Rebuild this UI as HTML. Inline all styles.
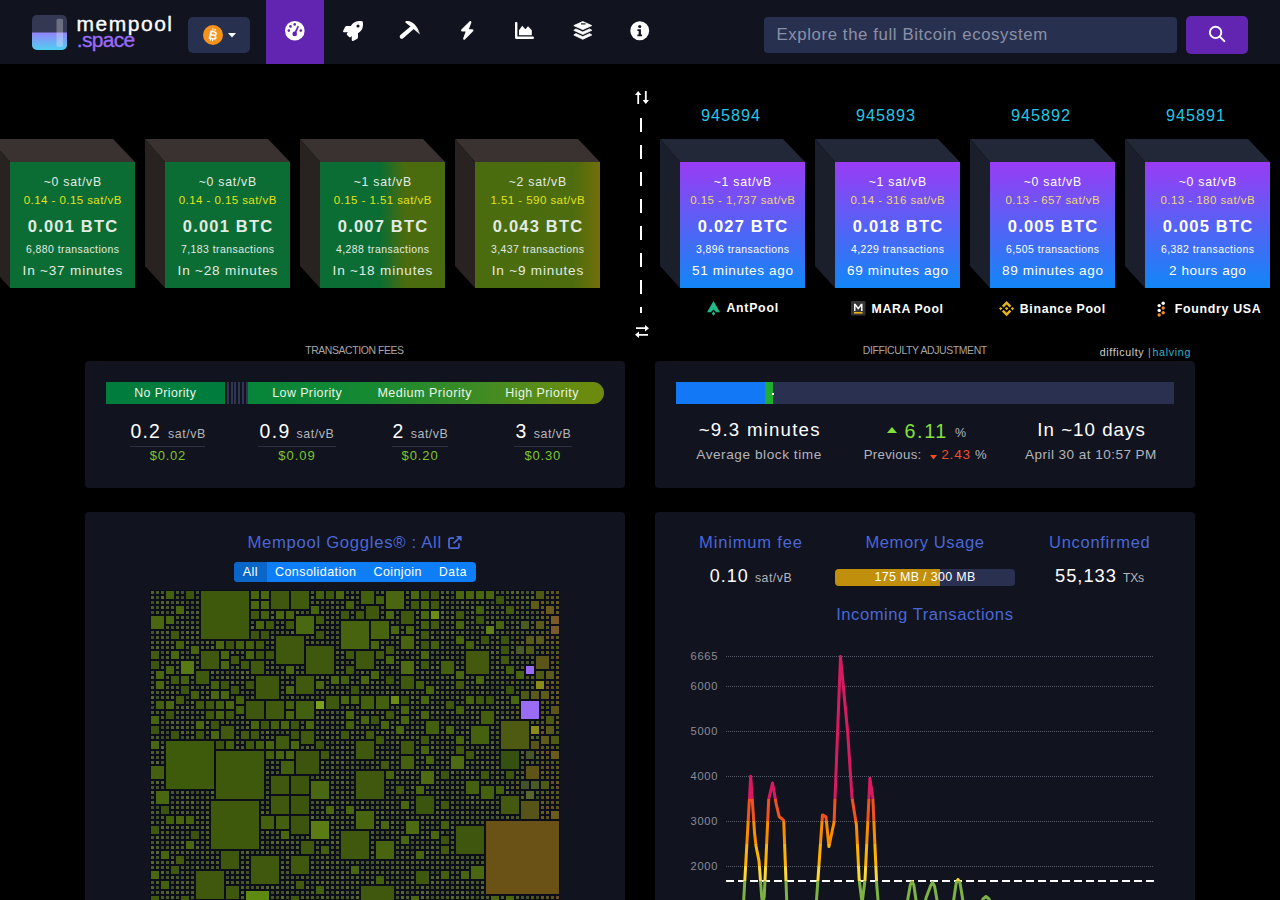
<!DOCTYPE html><html><head><meta charset="utf-8"><style>
html,body{margin:0;padding:0;}
body{width:1280px;height:900px;overflow:hidden;background:#000;position:relative;font-family:"Liberation Sans",sans-serif;}
.t{position:absolute;white-space:nowrap;line-height:0;}
.a{position:absolute;}
svg{position:absolute;overflow:visible;}
</style></head><body>

<div class="a" style="left:0;top:0;width:1280px;height:64px;background:#11131f"></div>
<svg style="left:32px;top:15px" width="35" height="35" viewBox="0 0 35 35">
<defs><linearGradient id="lg1" x1="0" y1="0" x2="0" y2="1"><stop offset="0" stop-color="#9283f7"/><stop offset="1" stop-color="#4fd0f2"/></linearGradient>
<clipPath id="lc1"><rect width="35" height="35" rx="5"/></clipPath></defs>
<g clip-path="url(#lc1)"><rect width="35" height="35" fill="#343853"/><rect y="17.5" width="35" height="17.5" fill="url(#lg1)"/>
<rect x="24.5" y="3.8" width="6.5" height="28" rx="1.5" fill="#fff" fill-opacity="0.28"/></g></svg>
<div class="t" style="left:76.50px;top:23.62px;font-size:21.00px;letter-spacing:1.521px;color:#ffffff;-webkit-text-stroke:0.35px #fff;">mempool</div>
<div class="t" style="left:76.80px;top:39.72px;font-size:21.00px;letter-spacing:-0.675px;color:#9b6bf6;-webkit-text-stroke:0.35px #9b6bf6;">.space</div>
<div class="a" style="left:188px;top:17px;width:62px;height:36px;background:#283050;border-radius:5px"></div>
<svg style="left:203px;top:24.5px" width="20" height="20" viewBox="0 0 20 20"><circle cx="10" cy="10" r="10" fill="#f7931a"/>
<g transform="rotate(14 10 10)"><text x="10.2" y="14.3" font-family="Liberation Sans" font-weight="bold" font-size="12" fill="#fff" text-anchor="middle">B</text>
<path d="M8.6 3.6V5.6M10.8 3.6V5.6M8.6 14.2V16.2M10.8 14.2V16.2" stroke="#fff" stroke-width="1.1"/></g></svg>
<svg style="left:228px;top:32.8px" width="8" height="4.5" viewBox="0 0 8 4.5"><path d="M0 0H8L4 4.5Z" fill="#fff"/></svg>
<div class="a" style="left:266px;top:0;width:58px;height:64px;background:#6225b2"></div>
<svg style="left:285px;top:21px" width="20" height="20" viewBox="0 0 20 20"><circle cx="9.8" cy="9.7" r="9.8" fill="#fff"/>
<g fill="#6225b2"><circle cx="9.7" cy="12.9" r="2.3"/><path d="M8.9 12.6L12.6 4.8L14 5.4L10.6 13.3Z"/>
<circle cx="5.5" cy="5.4" r="1.3"/><circle cx="9.7" cy="3.4" r="1.3"/><circle cx="3.8" cy="9.6" r="1.3"/><circle cx="15.8" cy="9.6" r="1.3"/></g></svg>
<svg style="left:343px;top:21px" width="20" height="20" viewBox="0 0 512 512"><path fill="#fff" d="M505.1 19.1c-1.2-5.5-6.7-11-12.2-12.2C460.7 0 435.5 0 410.4 0 307.2 0 245.3 55.2 199.1 128H94.8c-16.3 0-35.6 11.9-42.9 26.5L2.5 253.3A28.4 28.4 0 0 0 0 264a24 24 0 0 0 24 24h103.8l-22.5 22.5c-11.4 11.4-13 32.3 0 45.3l50.9 50.9c11.2 11.2 32.2 13.2 45.3 0l22.5-22.5V488a24 24 0 0 0 24 24 28.6 28.6 0 0 0 10.7-2.5l98.7-49.4c14.6-7.3 26.5-26.5 26.5-42.9V312.8c72.6-46.3 128-108.4 128-211.1.1-25.2.1-50.4-6.9-82.6zM384 168a40 40 0 1 1 40-40 40 40 0 0 1-40 40z"/></svg>
<svg style="left:395px;top:15px" width="30" height="30" viewBox="395 15 30 30"><path fill="#fff" d="M405.8 21.2C410.5 19.6 417.6 24.5 420 34.4C418.6 30.8 414.6 25.6 405.8 22.6Z"/><path fill="#fff" d="M405.8 21.2Q414.5 22.6 420 34.4Q412.6 27.8 405.4 22.4Z"/>
<path d="M401.8 36.6L411.8 28" stroke="#fff" stroke-width="4.2" stroke-linecap="round"/></svg>
<svg style="left:459.5px;top:21.2px" width="14.5" height="18.8" viewBox="0 0 448 512" preserveAspectRatio="none"><path fill="#fff" d="M349.4 44.6c5.9-13.7 1.5-29.7-10.6-38.5s-28.6-8-39.9 1.8l-256 224c-10 8.8-13.6 22.9-8.9 35.3S50.7 288 64 288H175.5L98.6 467.4c-5.9 13.7-1.5 29.7 10.6 38.5s28.6 8 39.9-1.8l256-224c10-8.8 13.6-22.9 8.9-35.3s-16.6-20.7-30-20.7H272.5L349.4 44.6z"/></svg>
<svg style="left:515px;top:22px" width="19" height="17" viewBox="0 0 19 17"><path fill="#fff" d="M0 0.8C0 0.3 0.4 0 0.9 0h0.6c0.5 0 0.9 0.3 0.9 0.8V14.4H18c0.5 0 0.9 0.4 0.9 0.9v0.8c0 0.5-0.4 0.9-0.9 0.9H1.2C0.5 17 0 16.5 0 15.8Z"/>
<path fill="#fff" d="M4 13.2V8.2L7.2 3.8 10.4 7.2 13 4.2 16.8 8.2V13.2Z"/></svg>
<svg style="left:573px;top:21px" width="20" height="19" viewBox="0 0 20 19"><g fill="#fff" stroke="#fff" stroke-width="0.8" stroke-linejoin="round">
<path d="M9.8 0.6L18.8 4.6L9.8 8.6L0.8 4.6Z"/><path d="M2.9 7.9L9.8 11L16.7 7.9L18.8 9.3L9.8 13.4L0.8 9.3Z"/><path d="M2.9 12.6L9.8 15.7L16.7 12.6L18.8 14L9.8 18.3L0.8 14Z"/></g>
<path d="M8 2.9H12.6" stroke="#11131f" stroke-width="1.2"/></svg>
<svg style="left:629.8px;top:21.3px" width="19.5" height="19.5" viewBox="0 0 20 20"><circle cx="10" cy="10" r="9.7" fill="#fff"/>
<g fill="#11131f"><circle cx="10" cy="5.6" r="1.6"/><path d="M7.6 8.4h3.6v5.5h1.2v1.8H7.6v-1.8h1.3v-3.7H7.6Z"/></g></svg>
<div class="a" style="left:764px;top:17px;width:413px;height:36px;background:#283050;border-radius:4px"></div>
<div class="t" style="left:776.50px;top:34.68px;font-size:16.80px;letter-spacing:0.601px;color:#8b90a6;">Explore the full Bitcoin ecosystem</div>
<div class="a" style="left:1186px;top:16px;width:62px;height:38px;background:#6225b2;border-radius:5px"></div>
<svg style="left:1208px;top:25px" width="18" height="18" viewBox="0 0 18 18"><circle cx="7.6" cy="7.4" r="5.7" fill="none" stroke="#fff" stroke-width="1.9"/>
<path d="M11.8 11.6L16.3 16.1" stroke="#fff" stroke-width="2" stroke-linecap="round"/></svg>
<svg style="left:-10px;top:139px" width="146" height="149" viewBox="0 0 146 149"><path d="M0 0H123L145 23H20Z" fill="#3a3230"/><path d="M0 0L20 23V149L0 127Z" fill="#282321"/></svg>
<div class="a" style="left:10px;top:162px;width:125px;height:126px;background:linear-gradient(90deg,#0b6d33,#0b6d33)"></div>
<div class="t" style="left:43.70px;top:182.25px;font-size:12.26px;letter-spacing:0.759px;color:#e2ebe2;">~0 sat/vB</div>
<div class="t" style="left:23.73px;top:200.32px;font-size:11.49px;letter-spacing:0.447px;color:#e3e21c;">0.14 - 0.15 sat/vB</div>
<div class="t" style="left:27.76px;top:227.08px;font-size:16.52px;letter-spacing:1.197px;color:#e2ebe2;font-weight:bold;">0.001 BTC</div>
<div class="t" style="left:25.98px;top:249.98px;font-size:10.45px;letter-spacing:0.450px;color:#e2ebe2;">6,880 transactions</div>
<div class="t" style="left:22.59px;top:271.00px;font-size:13.57px;letter-spacing:0.800px;color:#e2ebe2;">In ~37 minutes</div>
<svg style="left:145px;top:139px" width="146" height="149" viewBox="0 0 146 149"><path d="M0 0H123L145 23H20Z" fill="#3a3230"/><path d="M0 0L20 23V149L0 127Z" fill="#282321"/></svg>
<div class="a" style="left:165px;top:162px;width:125px;height:126px;background:linear-gradient(90deg,#0b6d33,#0b6d33)"></div>
<div class="t" style="left:198.70px;top:182.25px;font-size:12.26px;letter-spacing:0.759px;color:#e2ebe2;">~0 sat/vB</div>
<div class="t" style="left:178.72px;top:200.32px;font-size:11.49px;letter-spacing:0.447px;color:#e3e21c;">0.14 - 0.15 sat/vB</div>
<div class="t" style="left:182.76px;top:227.08px;font-size:16.52px;letter-spacing:1.197px;color:#e2ebe2;font-weight:bold;">0.001 BTC</div>
<div class="t" style="left:180.97px;top:249.98px;font-size:10.45px;letter-spacing:0.450px;color:#e2ebe2;">7,183 transactions</div>
<div class="t" style="left:177.59px;top:271.00px;font-size:13.57px;letter-spacing:0.800px;color:#e2ebe2;">In ~28 minutes</div>
<svg style="left:300px;top:139px" width="146" height="149" viewBox="0 0 146 149"><path d="M0 0H123L145 23H20Z" fill="#3a3230"/><path d="M0 0L20 23V149L0 127Z" fill="#282321"/></svg>
<div class="a" style="left:320px;top:162px;width:125px;height:126px;background:linear-gradient(90deg,#0b6d33 0%,#0b6d33 48%,#4b6c0e 68%,#4b6c0e 100%)"></div>
<div class="t" style="left:353.70px;top:182.25px;font-size:12.26px;letter-spacing:0.759px;color:#e2ebe2;">~1 sat/vB</div>
<div class="t" style="left:333.73px;top:200.32px;font-size:11.49px;letter-spacing:0.447px;color:#e3e21c;">0.15 - 1.51 sat/vB</div>
<div class="t" style="left:337.76px;top:227.08px;font-size:16.52px;letter-spacing:1.197px;color:#e2ebe2;font-weight:bold;">0.007 BTC</div>
<div class="t" style="left:335.98px;top:249.98px;font-size:10.45px;letter-spacing:0.450px;color:#e2ebe2;">4,288 transactions</div>
<div class="t" style="left:332.59px;top:271.00px;font-size:13.57px;letter-spacing:0.800px;color:#e2ebe2;">In ~18 minutes</div>
<svg style="left:455px;top:139px" width="146" height="149" viewBox="0 0 146 149"><path d="M0 0H123L145 23H20Z" fill="#3a3230"/><path d="M0 0L20 23V149L0 127Z" fill="#282321"/></svg>
<div class="a" style="left:475px;top:162px;width:125px;height:126px;background:linear-gradient(90deg,#4b6c0e 0%,#4c6c0e 78%,#726f0a 100%)"></div>
<div class="t" style="left:508.70px;top:182.25px;font-size:12.26px;letter-spacing:0.759px;color:#e2ebe2;">~2 sat/vB</div>
<div class="t" style="left:490.46px;top:200.32px;font-size:11.49px;letter-spacing:0.458px;color:#e3e21c;">1.51 - 590 sat/vB</div>
<div class="t" style="left:492.76px;top:227.08px;font-size:16.52px;letter-spacing:1.197px;color:#e2ebe2;font-weight:bold;">0.043 BTC</div>
<div class="t" style="left:490.98px;top:249.98px;font-size:10.45px;letter-spacing:0.450px;color:#e2ebe2;">3,437 transactions</div>
<div class="t" style="left:491.70px;top:271.00px;font-size:13.57px;letter-spacing:0.810px;color:#e2ebe2;">In ~9 minutes</div>
<svg style="left:660px;top:139px" width="146" height="149" viewBox="0 0 146 149"><path d="M0 0H123L145 23H20Z" fill="#232838"/><path d="M0 0L20 23V149L0 127Z" fill="#1b1e2b"/></svg>
<div class="a" style="left:680px;top:162px;width:125px;height:126px;background:linear-gradient(180deg,#9a3cf5 0%,#1286f6 100%)"></div>
<div class="t" style="left:713.70px;top:182.25px;font-size:12.26px;letter-spacing:0.759px;color:#ffffff;">~1 sat/vB</div>
<div class="t" style="left:690.24px;top:200.32px;font-size:11.49px;letter-spacing:0.456px;color:#f0d77a;">0.15 - 1,737 sat/vB</div>
<div class="t" style="left:697.76px;top:227.08px;font-size:16.52px;letter-spacing:1.197px;color:#ffffff;font-weight:bold;">0.027 BTC</div>
<div class="t" style="left:695.98px;top:249.98px;font-size:10.45px;letter-spacing:0.450px;color:#ffffff;">3,896 transactions</div>
<div class="t" style="left:691.99px;top:271.00px;font-size:13.57px;letter-spacing:0.631px;color:#ffffff;">51 minutes ago</div>
<div class="t" style="left:701.01px;top:115.28px;font-size:16.23px;letter-spacing:0.965px;color:#22c6e6;">945894</div>
<svg style="left:815px;top:139px" width="146" height="149" viewBox="0 0 146 149"><path d="M0 0H123L145 23H20Z" fill="#232838"/><path d="M0 0L20 23V149L0 127Z" fill="#1b1e2b"/></svg>
<div class="a" style="left:835px;top:162px;width:125px;height:126px;background:linear-gradient(180deg,#9a3cf5 0%,#1286f6 100%)"></div>
<div class="t" style="left:868.70px;top:182.25px;font-size:12.26px;letter-spacing:0.759px;color:#ffffff;">~1 sat/vB</div>
<div class="t" style="left:850.46px;top:200.32px;font-size:11.49px;letter-spacing:0.458px;color:#f0d77a;">0.14 - 316 sat/vB</div>
<div class="t" style="left:852.76px;top:227.08px;font-size:16.52px;letter-spacing:1.197px;color:#ffffff;font-weight:bold;">0.018 BTC</div>
<div class="t" style="left:850.98px;top:249.98px;font-size:10.45px;letter-spacing:0.450px;color:#ffffff;">4,229 transactions</div>
<div class="t" style="left:846.99px;top:271.00px;font-size:13.57px;letter-spacing:0.631px;color:#ffffff;">69 minutes ago</div>
<div class="t" style="left:856.01px;top:115.28px;font-size:16.23px;letter-spacing:0.965px;color:#22c6e6;">945893</div>
<svg style="left:970px;top:139px" width="146" height="149" viewBox="0 0 146 149"><path d="M0 0H123L145 23H20Z" fill="#232838"/><path d="M0 0L20 23V149L0 127Z" fill="#1b1e2b"/></svg>
<div class="a" style="left:990px;top:162px;width:125px;height:126px;background:linear-gradient(180deg,#9a3cf5 0%,#1286f6 100%)"></div>
<div class="t" style="left:1023.70px;top:182.25px;font-size:12.26px;letter-spacing:0.759px;color:#ffffff;">~0 sat/vB</div>
<div class="t" style="left:1005.46px;top:200.32px;font-size:11.49px;letter-spacing:0.458px;color:#f0d77a;">0.13 - 657 sat/vB</div>
<div class="t" style="left:1007.76px;top:227.08px;font-size:16.52px;letter-spacing:1.197px;color:#ffffff;font-weight:bold;">0.005 BTC</div>
<div class="t" style="left:1005.98px;top:249.98px;font-size:10.45px;letter-spacing:0.450px;color:#ffffff;">6,505 transactions</div>
<div class="t" style="left:1001.99px;top:271.00px;font-size:13.57px;letter-spacing:0.631px;color:#ffffff;">89 minutes ago</div>
<div class="t" style="left:1011.01px;top:115.28px;font-size:16.23px;letter-spacing:0.965px;color:#22c6e6;">945892</div>
<svg style="left:1125px;top:139px" width="146" height="149" viewBox="0 0 146 149"><path d="M0 0H123L145 23H20Z" fill="#232838"/><path d="M0 0L20 23V149L0 127Z" fill="#1b1e2b"/></svg>
<div class="a" style="left:1145px;top:162px;width:125px;height:126px;background:linear-gradient(180deg,#9a3cf5 0%,#1286f6 100%)"></div>
<div class="t" style="left:1178.70px;top:182.25px;font-size:12.26px;letter-spacing:0.759px;color:#ffffff;">~0 sat/vB</div>
<div class="t" style="left:1160.46px;top:200.32px;font-size:11.49px;letter-spacing:0.458px;color:#f0d77a;">0.13 - 180 sat/vB</div>
<div class="t" style="left:1162.76px;top:227.08px;font-size:16.52px;letter-spacing:1.197px;color:#ffffff;font-weight:bold;">0.005 BTC</div>
<div class="t" style="left:1160.97px;top:249.98px;font-size:10.45px;letter-spacing:0.450px;color:#ffffff;">6,382 transactions</div>
<div class="t" style="left:1169.09px;top:271.00px;font-size:13.57px;letter-spacing:0.512px;color:#ffffff;">2 hours ago</div>
<div class="t" style="left:1166.01px;top:115.28px;font-size:16.23px;letter-spacing:0.965px;color:#22c6e6;">945891</div>
<div class="t" style="left:726.40px;top:308.34px;font-size:12.30px;letter-spacing:0.758px;color:#ffffff;font-weight:bold;">AntPool</div>
<div class="t" style="left:871.60px;top:308.75px;font-size:12.25px;letter-spacing:0.634px;color:#ffffff;font-weight:bold;">MARA Pool</div>
<div class="t" style="left:1019.80px;top:308.73px;font-size:12.33px;letter-spacing:0.666px;color:#ffffff;font-weight:bold;">Binance Pool</div>
<div class="t" style="left:1174.80px;top:308.70px;font-size:12.42px;letter-spacing:0.662px;color:#ffffff;font-weight:bold;">Foundry USA</div>
<svg style="left:707px;top:301px" width="13" height="15" viewBox="0 0 13 15"><path fill="#21b88a" d="M6.5 0L13 11.2H9.2L6.5 8.6L3.8 11.2H0Z"/><path fill="#21b88a" d="M6.5 10.2L8.2 12.5L6.5 14.8L4.8 12.5Z"/></svg>
<svg style="left:851px;top:301px" width="15" height="15" viewBox="0 0 15 15"><rect width="14.5" height="14.5" rx="1" fill="#353535"/>
<path fill="#fff" d="M3 10V2.8H4.6L7.25 6.4L9.9 2.8H11.5V10H10V5.3L7.25 8.8L4.5 5.3V10Z"/><rect x="3" y="11" width="8.5" height="1.6" fill="#e5b21d"/></svg>
<svg style="left:998.8px;top:301px" width="15.2" height="15.2" viewBox="0 0 126.61 126.61"><g fill="#e9b51d"><path d="M38.73 53.2l24.59-24.58 24.6 24.6 14.3-14.31L63.32 0 24.43 38.9l14.3 14.3zM0 63.31l14.3-14.31 14.31 14.31-14.31 14.3zM38.73 73.41l24.59 24.59 24.6-24.6 14.31 14.29-38.9 38.91-38.91-38.88-.02-.02 14.33-14.29zM97.99 63.31l14.3-14.31 14.32 14.31-14.31 14.3z"/><path d="M77.83 63.3L63.32 48.78 48.81 63.3 63.32 77.81z"/></g></svg>
<svg style="left:1157px;top:301px" width="9" height="16" viewBox="0 0 9 16"><g>
<circle cx="6.2" cy="2.2" r="1.7" fill="#fff"/><circle cx="2.2" cy="4.6" r="1.7" fill="#fff"/><circle cx="6.2" cy="7" r="1.7" fill="#f08c30"/>
<circle cx="2.2" cy="9.4" r="1.7" fill="#fff"/><circle cx="6.2" cy="11.8" r="1.7" fill="#f08c30"/><circle cx="2.2" cy="14" r="1.7" fill="#f08c30"/></g></svg>
<div class="a" style="left:640px;top:118px;width:2px;height:195px;background:repeating-linear-gradient(180deg,#fff 0,#fff 14px,transparent 14px,transparent 27px)"></div>
<svg style="left:635px;top:91px" width="14" height="13" viewBox="0 0 14 13"><g fill="#fff">
<path d="M3.2 0L6.4 4H4.1V13H2.3V4H0Z"/><path d="M10.8 13L7.6 9H9.9V0H11.7V9H14Z"/></g></svg>
<svg style="left:635px;top:325px" width="14" height="13" viewBox="0 0 14 13"><g fill="#fff">
<path d="M14 3.2L10 0V2.3H1V4.1H10V6.4Z"/><path d="M0 9.8L4 6.6V8.9H13V10.7H4V13Z"/></g></svg>
<div class="a" style="left:85px;top:361px;width:540px;height:127px;background:#11131f;border-radius:4px"></div>
<div class="t" style="left:305.20px;top:350.78px;font-size:10.45px;letter-spacing:-0.407px;color:#a6a6a6;">TRANSACTION FEES</div>
<div class="a" style="left:106px;top:382px;width:119px;height:22px;background:#007c3c"></div>
<div class="a" style="left:225px;top:382px;width:23px;height:22px;background:repeating-linear-gradient(90deg,#11131f 0,#11131f 1.8px,#2f3553 1.8px,#2f3553 3.8px)"></div>
<div class="a" style="left:248px;top:382px;width:356px;height:22px;background:linear-gradient(90deg,#06853a 0%,#178932 35%,#3a8b26 62%,#5e8c16 85%,#6f8a0c 100%);border-radius:0 11px 11px 0"></div>
<div class="t" style="left:134.30px;top:392.82px;font-size:12.35px;letter-spacing:0.395px;color:#e8f5e8;">No Priority</div>
<div class="t" style="left:272.25px;top:392.77px;font-size:12.48px;letter-spacing:0.393px;color:#e8f5e8;">Low Priority</div>
<div class="t" style="left:377.40px;top:392.76px;font-size:12.54px;letter-spacing:0.500px;color:#e8f5e8;">Medium Priority</div>
<div class="t" style="left:505.30px;top:392.80px;font-size:12.41px;letter-spacing:0.456px;color:#e8f5e8;">High Priority</div>
<div class="t" style="left:130.50px;top:431.17px;font-size:19.41px;letter-spacing:1.200px;color:#ffffff;">0.2</div>
<div class="t" style="left:168.00px;top:433.69px;font-size:12.43px;letter-spacing:0.535px;color:#b4b5bb;">sat/vB</div>
<div class="a" style="left:129.5px;top:446px;width:75.7px;height:1px;background:#2c3042"></div>
<div class="t" style="left:149.80px;top:456.39px;font-size:13.02px;letter-spacing:0.725px;color:#7cc62c;">$0.02</div>
<div class="t" style="left:259.50px;top:431.17px;font-size:19.41px;letter-spacing:1.400px;color:#ffffff;">0.9</div>
<div class="t" style="left:296.60px;top:433.69px;font-size:12.43px;letter-spacing:0.535px;color:#b4b5bb;">sat/vB</div>
<div class="a" style="left:258.4px;top:446px;width:77.2px;height:1px;background:#2c3042"></div>
<div class="t" style="left:278.30px;top:456.39px;font-size:13.02px;letter-spacing:0.950px;color:#7cc62c;">$0.09</div>
<div class="t" style="left:392.40px;top:431.17px;font-size:19.41px;letter-spacing:0.000px;color:#ffffff;">2</div>
<div class="t" style="left:410.70px;top:433.69px;font-size:12.43px;letter-spacing:0.535px;color:#b4b5bb;">sat/vB</div>
<div class="a" style="left:391.6px;top:446px;width:56.3px;height:1px;background:#2c3042"></div>
<div class="t" style="left:401.60px;top:456.39px;font-size:13.02px;letter-spacing:0.875px;color:#7cc62c;">$0.20</div>
<div class="t" style="left:515.60px;top:431.17px;font-size:19.41px;letter-spacing:0.000px;color:#ffffff;">3</div>
<div class="t" style="left:533.70px;top:433.69px;font-size:12.43px;letter-spacing:0.535px;color:#b4b5bb;">sat/vB</div>
<div class="a" style="left:513.8px;top:446px;width:57.8px;height:1px;background:#2c3042"></div>
<div class="t" style="left:524.40px;top:456.39px;font-size:13.02px;letter-spacing:0.850px;color:#7cc62c;">$0.30</div>
<div class="a" style="left:655px;top:361px;width:540px;height:127px;background:#11131f;border-radius:4px"></div>
<div class="t" style="left:862.85px;top:350.88px;font-size:10.46px;letter-spacing:-0.384px;color:#a6a6a6;">DIFFICULTY ADJUSTMENT</div>
<div class="t" style="left:1099.80px;top:351.53px;font-size:10.61px;letter-spacing:0.619px;color:#d0d0d0;">difficulty</div>
<div class="t" style="left:1148.00px;top:351.53px;font-size:10.61px;letter-spacing:0.000px;color:#a0a0a0;">|</div>
<div class="t" style="left:1152.50px;top:351.53px;font-size:10.61px;letter-spacing:0.700px;color:#2fb4cf;">halving</div>
<div class="a" style="left:676px;top:382px;width:498px;height:22px;background:#2a3150"></div>
<div class="a" style="left:676px;top:382px;width:88.5px;height:22px;background:#1278f6"></div>
<div class="a" style="left:764.5px;top:382px;width:8px;height:22px;background:#1fae30"></div>
<div class="a" style="left:772px;top:392.5px;width:2px;height:2.5px;background:#fff"></div>
<div class="t" style="left:698.75px;top:429.83px;font-size:18.66px;letter-spacing:1.223px;color:#ffffff;">~9.3 minutes</div>
<div class="t" style="left:696.25px;top:455.29px;font-size:13.60px;letter-spacing:0.565px;color:#b4b5bb;">Average block time</div>
<svg style="left:886.5px;top:427px" width="10" height="6" viewBox="0 0 10 6"><path d="M0 6L5 0L10 6Z" fill="#7fe03a"/></svg>
<div class="t" style="left:904.50px;top:430.78px;font-size:19.69px;letter-spacing:1.625px;color:#84e03c;">6.11</div>
<div class="t" style="left:955.00px;top:433.29px;font-size:12.43px;letter-spacing:0.000px;color:#b4b5bb;">%</div>
<div class="t" style="left:863.75px;top:455.42px;font-size:13.23px;letter-spacing:0.297px;color:#b4b5bb;">Previous:</div>
<svg style="left:929.5px;top:455px" width="7" height="4.5" viewBox="0 0 7 4.5"><path d="M0 0L3.5 4.5L7 0Z" fill="#ef4e24"/></svg>
<div class="t" style="left:941.25px;top:455.30px;font-size:13.56px;letter-spacing:0.792px;color:#f04c2a;">2.43</div>
<div class="t" style="left:975.00px;top:455.45px;font-size:13.12px;letter-spacing:0.000px;color:#b4b5bb;">%</div>
<div class="t" style="left:1037.30px;top:429.61px;font-size:18.72px;letter-spacing:1.025px;color:#ffffff;">In ~10 days</div>
<div class="t" style="left:1025.00px;top:455.31px;font-size:13.55px;letter-spacing:0.454px;color:#b4b5bb;">April 30 at 10:57 PM</div>
<div class="a" style="left:85px;top:512px;width:540px;height:400px;background:#11131f;border-radius:4px"></div>
<div class="t" style="left:247.40px;top:543.21px;font-size:16.72px;letter-spacing:0.683px;color:#4a67d6;">Mempool Goggles® : All</div>
<svg style="left:447.5px;top:535.5px" width="14" height="13" viewBox="0 0 14 13"><g fill="none" stroke="#4a67d6" stroke-width="1.8">
<path d="M6 2.2H2.2C1.5 2.2 1 2.7 1 3.4V11C1 11.7 1.5 12.2 2.2 12.2H9.8C10.5 12.2 11 11.7 11 11V7.2"/><path d="M5.6 7.4L12.6 0.6"/></g>
<path d="M8 0H13.6V5.6Z" fill="#4a67d6"/></svg>
<div class="a" style="left:234.3px;top:562px;width:241.6px;height:19.6px;background:#0d7ef6;border-radius:4px"></div>
<div class="a" style="left:234.3px;top:562px;width:32.5px;height:19.6px;background:#0a66c9;border-radius:4px 0 0 4px"></div>
<div class="t" style="left:242.80px;top:571.76px;font-size:12.54px;letter-spacing:0.438px;color:#ffffff;">All</div>
<div class="t" style="left:274.90px;top:571.75px;font-size:12.55px;letter-spacing:0.429px;color:#ffffff;">Consolidation</div>
<div class="t" style="left:373.60px;top:571.77px;font-size:12.51px;letter-spacing:0.389px;color:#ffffff;">Coinjoin</div>
<div class="t" style="left:439.00px;top:571.92px;font-size:12.05px;letter-spacing:0.642px;color:#ffffff;">Data</div>
<svg style="left:150px;top:590px" width="410" height="310" viewBox="0 0 410 310"><rect width="410" height="310" fill="#0b0d18"/><rect x="51" y="1" width="48" height="48" fill="#3e590b"/><rect x="121" y="1" width="18" height="18" fill="#3f580e"/><rect x="141" y="1" width="18" height="18" fill="#405a0e"/><rect x="146" y="26" width="18" height="18" fill="#4a6712"/><rect x="126" y="46" width="28" height="28" fill="#3f580d"/><rect x="156" y="56" width="28" height="28" fill="#3f580d"/><rect x="191" y="31" width="28" height="28" fill="#48630f"/><rect x="51" y="61" width="18" height="18" fill="#3f570f"/><rect x="106" y="86" width="23" height="23" fill="#3e570d"/><rect x="146" y="86" width="18" height="18" fill="#40590f"/><rect x="96" y="111" width="18" height="18" fill="#3e560e"/><rect x="116" y="111" width="18" height="18" fill="#40590e"/><rect x="146" y="111" width="18" height="18" fill="#42600f"/><rect x="176" y="106" width="13" height="13" fill="#3f580f"/><rect x="31" y="71" width="13" height="13" fill="#587a14"/><rect x="1" y="26" width="13" height="13" fill="#4a6610"/><rect x="46" y="81" width="13" height="13" fill="#3f580f"/><rect x="101" y="71" width="13" height="13" fill="#40590f"/><rect x="71" y="136" width="13" height="13" fill="#40590f"/><rect x="151" y="141" width="13" height="13" fill="#40590f"/><rect x="126" y="146" width="13" height="13" fill="#405a0e"/><rect x="16" y="151" width="48" height="48" fill="#3e5a0b"/><rect x="66" y="161" width="48" height="48" fill="#3e590b"/><rect x="61" y="211" width="48" height="48" fill="#3e590b"/><rect x="146" y="161" width="23" height="23" fill="#3c540d"/><rect x="121" y="186" width="18" height="18" fill="#3f580d"/><rect x="141" y="186" width="18" height="18" fill="#3c540d"/><rect x="121" y="206" width="18" height="18" fill="#3f580d"/><rect x="141" y="206" width="18" height="18" fill="#3c540d"/><rect x="161" y="191" width="18" height="18" fill="#4a6712"/><rect x="141" y="226" width="18" height="18" fill="#3c540d"/><rect x="161" y="231" width="18" height="18" fill="#5b7c14"/><rect x="111" y="226" width="13" height="13" fill="#44600f"/><rect x="126" y="226" width="13" height="13" fill="#44600f"/><rect x="191" y="241" width="28" height="28" fill="#3f580e"/><rect x="71" y="261" width="18" height="18" fill="#3e560e"/><rect x="101" y="266" width="28" height="28" fill="#3f580e"/><rect x="141" y="266" width="18" height="18" fill="#3f580e"/><rect x="46" y="281" width="28" height="28" fill="#3f580e"/><rect x="76" y="296" width="13" height="13" fill="#3f580e"/><rect x="96" y="301" width="23" height="23" fill="#5f8a12"/><rect x="1" y="176" width="13" height="13" fill="#44600f"/><rect x="6" y="201" width="13" height="13" fill="#4a6610"/><rect x="131" y="171" width="13" height="13" fill="#44600f"/><rect x="151" y="251" width="13" height="13" fill="#3f580e"/><rect x="236" y="1" width="18" height="18" fill="#4a6610"/><rect x="211" y="1" width="13" height="13" fill="#44600f"/><rect x="216" y="16" width="13" height="13" fill="#3f580e"/><rect x="251" y="21" width="13" height="13" fill="#3f580e"/><rect x="221" y="31" width="18" height="18" fill="#48640f"/><rect x="251" y="46" width="13" height="13" fill="#48640f"/><rect x="206" y="61" width="18" height="18" fill="#3f580e"/><rect x="316" y="61" width="23" height="23" fill="#44580e"/><rect x="251" y="71" width="13" height="13" fill="#4e6a12"/><rect x="291" y="71" width="13" height="13" fill="#44600f"/><rect x="251" y="86" width="13" height="13" fill="#3f580e"/><rect x="386" y="66" width="13" height="13" fill="#5b5518"/><rect x="376" y="76" width="8" height="8" fill="#9a6cf4"/><rect x="371" y="111" width="18" height="18" fill="#9a6cf4"/><rect x="211" y="106" width="13" height="13" fill="#44600f"/><rect x="226" y="106" width="13" height="13" fill="#44600f"/><rect x="331" y="121" width="13" height="13" fill="#44600f"/><rect x="321" y="136" width="18" height="18" fill="#45600f"/><rect x="351" y="131" width="28" height="28" fill="#4e5a12"/><rect x="276" y="131" width="13" height="13" fill="#44600f"/><rect x="206" y="151" width="18" height="18" fill="#3f580e"/><rect x="251" y="151" width="13" height="13" fill="#3f580e"/><rect x="351" y="161" width="18" height="18" fill="#35500f"/><rect x="206" y="181" width="28" height="28" fill="#3f580e"/><rect x="266" y="206" width="18" height="18" fill="#3a550e"/><rect x="301" y="166" width="13" height="13" fill="#4e6a12"/><rect x="271" y="181" width="13" height="13" fill="#4e6a12"/><rect x="316" y="191" width="13" height="13" fill="#45600f"/><rect x="331" y="196" width="13" height="13" fill="#45600f"/><rect x="351" y="206" width="18" height="18" fill="#45580f"/><rect x="371" y="211" width="18" height="18" fill="#565418"/><rect x="376" y="176" width="13" height="13" fill="#5e5418"/><rect x="336" y="231" width="73" height="73" fill="#6a5116"/><rect x="206" y="221" width="18" height="18" fill="#48640f"/><rect x="226" y="251" width="18" height="18" fill="#48640f"/><rect x="256" y="231" width="13" height="13" fill="#4e6a12"/><rect x="306" y="236" width="28" height="28" fill="#3e560e"/><rect x="321" y="276" width="13" height="13" fill="#4a6610"/><rect x="266" y="281" width="13" height="13" fill="#3f580e"/><rect x="211" y="296" width="33" height="33" fill="#3f580e"/><rect x="251" y="166" width="13" height="13" fill="#45600f"/><rect x="166" y="111" width="8" height="8" fill="#7aa01c"/><rect x="166" y="1" width="8" height="8" fill="#44600f"/><rect x="281" y="21" width="8" height="8" fill="#6e8c14"/><rect x="336" y="36" width="8" height="8" fill="#62801a"/><rect x="401" y="26" width="8" height="8" fill="#7a5a2a"/><rect x="401" y="36" width="8" height="8" fill="#7a5a2a"/><rect x="386" y="91" width="8" height="8" fill="#8a8a1a"/><rect x="241" y="106" width="8" height="8" fill="#6e8c14"/><rect x="381" y="136" width="8" height="8" fill="#8a8a1a"/><rect x="16" y="1" width="8" height="8" fill="#44600f"/><rect x="26" y="16" width="8" height="8" fill="#4a6610"/><rect x="16" y="26" width="8" height="8" fill="#4a6610"/><rect x="26" y="51" width="8" height="8" fill="#44600f"/><rect x="41" y="56" width="8" height="8" fill="#48640f"/><rect x="66" y="51" width="8" height="8" fill="#4a6610"/><rect x="76" y="51" width="8" height="8" fill="#3c540d"/><rect x="71" y="61" width="8" height="8" fill="#4a6610"/><rect x="81" y="66" width="8" height="8" fill="#3f580e"/><rect x="71" y="71" width="8" height="8" fill="#4a6610"/><rect x="91" y="71" width="8" height="8" fill="#3f580e"/><rect x="1" y="71" width="8" height="8" fill="#3c540d"/><rect x="16" y="76" width="8" height="8" fill="#48640f"/><rect x="6" y="91" width="8" height="8" fill="#4a6610"/><rect x="31" y="86" width="8" height="8" fill="#44600f"/><rect x="61" y="91" width="8" height="8" fill="#44600f"/><rect x="71" y="91" width="8" height="8" fill="#3c540d"/><rect x="61" y="101" width="8" height="8" fill="#4a6610"/><rect x="71" y="101" width="8" height="8" fill="#4a6610"/><rect x="81" y="96" width="8" height="8" fill="#3c540d"/><rect x="96" y="91" width="8" height="8" fill="#3c540d"/><rect x="86" y="106" width="8" height="8" fill="#44600f"/><rect x="86" y="116" width="8" height="8" fill="#44600f"/><rect x="6" y="111" width="8" height="8" fill="#44600f"/><rect x="16" y="111" width="8" height="8" fill="#4a6610"/><rect x="16" y="121" width="8" height="8" fill="#3c540d"/><rect x="46" y="111" width="8" height="8" fill="#3f580e"/><rect x="56" y="111" width="8" height="8" fill="#3f580e"/><rect x="66" y="111" width="8" height="8" fill="#44600f"/><rect x="76" y="111" width="8" height="8" fill="#4a6610"/><rect x="56" y="121" width="8" height="8" fill="#3f580e"/><rect x="66" y="121" width="8" height="8" fill="#48640f"/><rect x="76" y="121" width="8" height="8" fill="#3f580e"/><rect x="1" y="126" width="8" height="8" fill="#48640f"/><rect x="1" y="136" width="8" height="8" fill="#3c540d"/><rect x="1" y="151" width="8" height="8" fill="#4a6610"/><rect x="21" y="141" width="8" height="8" fill="#3c540d"/><rect x="46" y="141" width="8" height="8" fill="#3c540d"/><rect x="61" y="131" width="8" height="8" fill="#3c540d"/><rect x="61" y="141" width="8" height="8" fill="#4a6610"/><rect x="66" y="151" width="8" height="8" fill="#3c540d"/><rect x="76" y="151" width="8" height="8" fill="#44600f"/><rect x="101" y="131" width="8" height="8" fill="#48640f"/><rect x="101" y="141" width="8" height="8" fill="#3f580e"/><rect x="96" y="151" width="8" height="8" fill="#3f580e"/><rect x="106" y="151" width="8" height="8" fill="#44600f"/><rect x="111" y="131" width="8" height="8" fill="#3c540d"/><rect x="121" y="131" width="8" height="8" fill="#44600f"/><rect x="131" y="131" width="8" height="8" fill="#48640f"/><rect x="141" y="131" width="8" height="8" fill="#3c540d"/><rect x="156" y="131" width="8" height="8" fill="#48640f"/><rect x="141" y="141" width="8" height="8" fill="#3c540d"/><rect x="141" y="151" width="8" height="8" fill="#4a6610"/><rect x="166" y="151" width="8" height="8" fill="#3c540d"/><rect x="191" y="106" width="8" height="8" fill="#4a6610"/><rect x="201" y="106" width="8" height="8" fill="#48640f"/><rect x="196" y="121" width="8" height="8" fill="#4a6610"/><rect x="166" y="91" width="8" height="8" fill="#4a6610"/><rect x="201" y="96" width="8" height="8" fill="#3c540d"/><rect x="136" y="96" width="8" height="8" fill="#4a6610"/><rect x="136" y="111" width="8" height="8" fill="#44600f"/><rect x="136" y="121" width="8" height="8" fill="#48640f"/><rect x="171" y="161" width="8" height="8" fill="#3f580e"/><rect x="126" y="161" width="8" height="8" fill="#48640f"/><rect x="136" y="161" width="8" height="8" fill="#4a6610"/><rect x="116" y="161" width="8" height="8" fill="#44600f"/><rect x="101" y="1" width="8" height="8" fill="#48640f"/><rect x="111" y="1" width="8" height="8" fill="#4a6610"/><rect x="101" y="11" width="8" height="8" fill="#4a6610"/><rect x="111" y="11" width="8" height="8" fill="#4a6610"/><rect x="101" y="21" width="8" height="8" fill="#3f580e"/><rect x="111" y="21" width="8" height="8" fill="#44600f"/><rect x="126" y="21" width="8" height="8" fill="#4a6610"/><rect x="136" y="21" width="8" height="8" fill="#48640f"/><rect x="106" y="31" width="8" height="8" fill="#48640f"/><rect x="116" y="31" width="8" height="8" fill="#3f580e"/><rect x="136" y="31" width="8" height="8" fill="#3f580e"/><rect x="101" y="41" width="8" height="8" fill="#3c540d"/><rect x="111" y="41" width="8" height="8" fill="#3c540d"/><rect x="176" y="1" width="8" height="8" fill="#3f580e"/><rect x="161" y="16" width="8" height="8" fill="#48640f"/><rect x="166" y="26" width="8" height="8" fill="#3f580e"/><rect x="166" y="41" width="8" height="8" fill="#3c540d"/><rect x="96" y="51" width="8" height="8" fill="#44600f"/><rect x="106" y="51" width="8" height="8" fill="#3f580e"/><rect x="96" y="61" width="8" height="8" fill="#48640f"/><rect x="106" y="61" width="8" height="8" fill="#3c540d"/><rect x="116" y="61" width="8" height="8" fill="#3c540d"/><rect x="196" y="61" width="8" height="8" fill="#3f580e"/><rect x="196" y="76" width="8" height="8" fill="#3f580e"/><rect x="6" y="81" width="8" height="8" fill="#4a6610"/><rect x="261" y="1" width="8" height="8" fill="#4a6610"/><rect x="271" y="1" width="8" height="8" fill="#3f580e"/><rect x="281" y="1" width="8" height="8" fill="#3c540d"/><rect x="306" y="1" width="8" height="8" fill="#4a6610"/><rect x="316" y="1" width="8" height="8" fill="#48640f"/><rect x="326" y="1" width="8" height="8" fill="#4a6610"/><rect x="336" y="1" width="8" height="8" fill="#48640f"/><rect x="386" y="1" width="8" height="8" fill="#4e5a14"/><rect x="226" y="6" width="8" height="8" fill="#44600f"/><rect x="261" y="11" width="8" height="8" fill="#3f580e"/><rect x="271" y="11" width="8" height="8" fill="#48640f"/><rect x="281" y="11" width="8" height="8" fill="#3f580e"/><rect x="381" y="11" width="8" height="8" fill="#5e5a18"/><rect x="206" y="21" width="8" height="8" fill="#3f580e"/><rect x="236" y="21" width="8" height="8" fill="#4a6610"/><rect x="271" y="21" width="8" height="8" fill="#4a6610"/><rect x="306" y="21" width="8" height="8" fill="#3f580e"/><rect x="326" y="16" width="8" height="8" fill="#44600f"/><rect x="326" y="26" width="8" height="8" fill="#3c540d"/><rect x="306" y="31" width="8" height="8" fill="#48640f"/><rect x="241" y="36" width="8" height="8" fill="#4a6610"/><rect x="256" y="36" width="8" height="8" fill="#48640f"/><rect x="271" y="31" width="8" height="8" fill="#44600f"/><rect x="271" y="41" width="8" height="8" fill="#3f580e"/><rect x="386" y="31" width="8" height="8" fill="#5a5a1c"/><rect x="386" y="46" width="8" height="8" fill="#5a5a1c"/><rect x="306" y="46" width="8" height="8" fill="#48640f"/><rect x="316" y="51" width="8" height="8" fill="#44600f"/><rect x="331" y="46" width="8" height="8" fill="#3c540d"/><rect x="351" y="46" width="8" height="8" fill="#3c540d"/><rect x="376" y="46" width="8" height="8" fill="#5a5a1c"/><rect x="376" y="56" width="8" height="8" fill="#4e5a14"/><rect x="271" y="51" width="8" height="8" fill="#3c540d"/><rect x="236" y="66" width="8" height="8" fill="#4a6610"/><rect x="271" y="61" width="8" height="8" fill="#4a6610"/><rect x="271" y="71" width="8" height="8" fill="#3f580e"/><rect x="306" y="81" width="8" height="8" fill="#4a6610"/><rect x="326" y="86" width="8" height="8" fill="#4a6610"/><rect x="221" y="81" width="8" height="8" fill="#48640f"/><rect x="236" y="86" width="8" height="8" fill="#3c540d"/><rect x="266" y="91" width="8" height="8" fill="#44600f"/><rect x="276" y="96" width="8" height="8" fill="#48640f"/><rect x="356" y="96" width="8" height="8" fill="#3c540d"/><rect x="366" y="81" width="8" height="8" fill="#48640f"/><rect x="386" y="81" width="8" height="8" fill="#4e5a14"/><rect x="396" y="81" width="8" height="8" fill="#5a5a1c"/><rect x="371" y="101" width="8" height="8" fill="#4e5a14"/><rect x="381" y="101" width="8" height="8" fill="#5a5a1c"/><rect x="391" y="101" width="8" height="8" fill="#5e5a18"/><rect x="251" y="106" width="8" height="8" fill="#3c540d"/><rect x="271" y="106" width="8" height="8" fill="#4a6610"/><rect x="316" y="106" width="8" height="8" fill="#48640f"/><rect x="326" y="106" width="8" height="8" fill="#3f580e"/><rect x="336" y="106" width="8" height="8" fill="#3c540d"/><rect x="361" y="106" width="8" height="8" fill="#4a6610"/><rect x="251" y="116" width="8" height="8" fill="#4a6610"/><rect x="306" y="116" width="8" height="8" fill="#44600f"/><rect x="236" y="121" width="8" height="8" fill="#3f580e"/><rect x="271" y="121" width="8" height="8" fill="#48640f"/><rect x="221" y="126" width="8" height="8" fill="#3c540d"/><rect x="211" y="126" width="8" height="8" fill="#48640f"/><rect x="231" y="131" width="8" height="8" fill="#48640f"/><rect x="251" y="126" width="8" height="8" fill="#4a6610"/><rect x="296" y="136" width="8" height="8" fill="#48640f"/><rect x="396" y="126" width="8" height="8" fill="#4e5a14"/><rect x="396" y="136" width="8" height="8" fill="#5a5a1c"/><rect x="391" y="146" width="8" height="8" fill="#5e5a18"/><rect x="401" y="146" width="8" height="8" fill="#4e5a14"/><rect x="226" y="146" width="8" height="8" fill="#3f580e"/><rect x="271" y="146" width="8" height="8" fill="#3f580e"/><rect x="306" y="146" width="8" height="8" fill="#48640f"/><rect x="1" y="1" width="3" height="3" fill="#50602a"/><rect x="6" y="1" width="3" height="3" fill="#4a5a26"/><rect x="11" y="1" width="3" height="3" fill="#465626"/><rect x="26" y="1" width="3" height="3" fill="#4a5a26"/><rect x="31" y="1" width="3" height="3" fill="#42522a"/><rect x="36" y="1" width="8" height="8" fill="#3c540d"/><rect x="46" y="1" width="3" height="3" fill="#42522a"/><rect x="161" y="1" width="3" height="3" fill="#4a5c20"/><rect x="186" y="1" width="8" height="8" fill="#4a6610"/><rect x="196" y="1" width="3" height="3" fill="#42522a"/><rect x="201" y="1" width="3" height="3" fill="#4a5a26"/><rect x="206" y="1" width="3" height="3" fill="#4a5c20"/><rect x="226" y="1" width="3" height="3" fill="#42522a"/><rect x="231" y="1" width="3" height="3" fill="#50602a"/><rect x="256" y="1" width="3" height="3" fill="#50602a"/><rect x="291" y="1" width="3" height="3" fill="#4e5e22"/><rect x="296" y="1" width="3" height="3" fill="#50602a"/><rect x="301" y="1" width="3" height="3" fill="#42522a"/><rect x="346" y="1" width="3" height="3" fill="#465626"/><rect x="351" y="1" width="3" height="3" fill="#42522a"/><rect x="356" y="1" width="3" height="3" fill="#4a5c20"/><rect x="361" y="1" width="3" height="3" fill="#56662c"/><rect x="366" y="1" width="3" height="3" fill="#56662c"/><rect x="371" y="1" width="3" height="3" fill="#42522a"/><rect x="376" y="1" width="3" height="3" fill="#42522a"/><rect x="381" y="1" width="3" height="3" fill="#4e5e22"/><rect x="396" y="1" width="3" height="3" fill="#5a5a18"/><rect x="401" y="1" width="3" height="3" fill="#5a5a18"/><rect x="406" y="1" width="3" height="3" fill="#5e5418"/><rect x="1" y="6" width="3" height="3" fill="#4a5c20"/><rect x="6" y="6" width="3" height="3" fill="#3e4e22"/><rect x="11" y="6" width="3" height="3" fill="#56662c"/><rect x="26" y="6" width="3" height="3" fill="#465626"/><rect x="31" y="6" width="3" height="3" fill="#3e4e22"/><rect x="46" y="6" width="3" height="3" fill="#3e4e22"/><rect x="161" y="6" width="3" height="3" fill="#56662c"/><rect x="196" y="6" width="3" height="3" fill="#465626"/><rect x="201" y="6" width="3" height="3" fill="#56662c"/><rect x="206" y="6" width="3" height="3" fill="#465626"/><rect x="256" y="6" width="3" height="3" fill="#4e5e22"/><rect x="291" y="6" width="3" height="3" fill="#56662c"/><rect x="296" y="6" width="3" height="3" fill="#4a5c20"/><rect x="301" y="6" width="3" height="3" fill="#3e4e22"/><rect x="346" y="6" width="8" height="8" fill="#3c540d"/><rect x="356" y="6" width="3" height="3" fill="#465626"/><rect x="361" y="6" width="3" height="3" fill="#42522a"/><rect x="366" y="6" width="3" height="3" fill="#50602a"/><rect x="371" y="6" width="3" height="3" fill="#4a5c20"/><rect x="376" y="6" width="3" height="3" fill="#56662c"/><rect x="381" y="6" width="3" height="3" fill="#56662c"/><rect x="396" y="6" width="3" height="3" fill="#5a5a18"/><rect x="401" y="6" width="3" height="3" fill="#6e4e22"/><rect x="406" y="6" width="3" height="3" fill="#5a5a18"/><rect x="1" y="11" width="3" height="3" fill="#3e4e22"/><rect x="6" y="11" width="3" height="3" fill="#4a5c20"/><rect x="11" y="11" width="3" height="3" fill="#50602a"/><rect x="16" y="11" width="3" height="3" fill="#50602a"/><rect x="21" y="11" width="3" height="3" fill="#42522a"/><rect x="26" y="11" width="3" height="3" fill="#50602a"/><rect x="31" y="11" width="3" height="3" fill="#4a5a26"/><rect x="36" y="11" width="3" height="3" fill="#3e4e22"/><rect x="41" y="11" width="3" height="3" fill="#3e4e22"/><rect x="46" y="11" width="3" height="3" fill="#4a5a26"/><rect x="161" y="11" width="3" height="3" fill="#4a5c20"/><rect x="166" y="11" width="3" height="3" fill="#4a5c20"/><rect x="171" y="11" width="3" height="3" fill="#4a5c20"/><rect x="176" y="11" width="3" height="3" fill="#465626"/><rect x="181" y="11" width="3" height="3" fill="#56662c"/><rect x="186" y="11" width="3" height="3" fill="#3e4e22"/><rect x="191" y="11" width="3" height="3" fill="#465626"/><rect x="196" y="11" width="8" height="8" fill="#44600f"/><rect x="206" y="11" width="3" height="3" fill="#3e4e22"/><rect x="256" y="11" width="3" height="3" fill="#465626"/><rect x="291" y="11" width="3" height="3" fill="#4a5c20"/><rect x="296" y="11" width="3" height="3" fill="#4e5e22"/><rect x="301" y="11" width="3" height="3" fill="#3e4e22"/><rect x="306" y="11" width="3" height="3" fill="#465626"/><rect x="311" y="11" width="3" height="3" fill="#56662c"/><rect x="316" y="11" width="3" height="3" fill="#4e5e22"/><rect x="321" y="11" width="3" height="3" fill="#465626"/><rect x="326" y="11" width="3" height="3" fill="#4e5e22"/><rect x="331" y="11" width="3" height="3" fill="#50602a"/><rect x="336" y="11" width="3" height="3" fill="#42522a"/><rect x="341" y="11" width="3" height="3" fill="#3e4e22"/><rect x="356" y="11" width="3" height="3" fill="#4a5a26"/><rect x="361" y="11" width="3" height="3" fill="#4e5e22"/><rect x="366" y="11" width="3" height="3" fill="#465626"/><rect x="371" y="11" width="3" height="3" fill="#4e5e22"/><rect x="376" y="11" width="3" height="3" fill="#50602a"/><rect x="391" y="11" width="3" height="3" fill="#6a5a1c"/><rect x="396" y="11" width="3" height="3" fill="#4e5a14"/><rect x="401" y="11" width="3" height="3" fill="#6a5a1c"/><rect x="406" y="11" width="3" height="3" fill="#6a5a1c"/><rect x="1" y="16" width="3" height="3" fill="#4a5c20"/><rect x="6" y="16" width="3" height="3" fill="#42522a"/><rect x="11" y="16" width="3" height="3" fill="#56662c"/><rect x="16" y="16" width="3" height="3" fill="#4a5a26"/><rect x="21" y="16" width="3" height="3" fill="#4e5e22"/><rect x="36" y="16" width="3" height="3" fill="#42522a"/><rect x="41" y="16" width="3" height="3" fill="#3e4e22"/><rect x="46" y="16" width="3" height="3" fill="#3e4e22"/><rect x="171" y="16" width="3" height="3" fill="#3e4e22"/><rect x="176" y="16" width="3" height="3" fill="#465626"/><rect x="181" y="16" width="3" height="3" fill="#42522a"/><rect x="186" y="16" width="3" height="3" fill="#56662c"/><rect x="191" y="16" width="3" height="3" fill="#4a5a26"/><rect x="206" y="16" width="3" height="3" fill="#3e4e22"/><rect x="211" y="16" width="3" height="3" fill="#465626"/><rect x="231" y="16" width="3" height="3" fill="#465626"/><rect x="256" y="16" width="3" height="3" fill="#42522a"/><rect x="291" y="16" width="3" height="3" fill="#50602a"/><rect x="296" y="16" width="3" height="3" fill="#3e4e22"/><rect x="301" y="16" width="3" height="3" fill="#4a5c20"/><rect x="306" y="16" width="3" height="3" fill="#465626"/><rect x="311" y="16" width="3" height="3" fill="#50602a"/><rect x="316" y="16" width="3" height="3" fill="#4a5a26"/><rect x="321" y="16" width="3" height="3" fill="#56662c"/><rect x="336" y="16" width="3" height="3" fill="#50602a"/><rect x="341" y="16" width="3" height="3" fill="#56662c"/><rect x="346" y="16" width="3" height="3" fill="#3e4e22"/><rect x="351" y="16" width="3" height="3" fill="#50602a"/><rect x="356" y="16" width="8" height="8" fill="#42590f"/><rect x="366" y="16" width="3" height="3" fill="#565418"/><rect x="371" y="16" width="3" height="3" fill="#50602a"/><rect x="376" y="16" width="3" height="3" fill="#42522a"/><rect x="391" y="16" width="3" height="3" fill="#6a5a1c"/><rect x="396" y="16" width="8" height="8" fill="#6a5a1c"/><rect x="406" y="16" width="3" height="3" fill="#6a5a1c"/><rect x="1" y="21" width="3" height="3" fill="#3e4e22"/><rect x="6" y="21" width="3" height="3" fill="#4a5c20"/><rect x="11" y="21" width="3" height="3" fill="#4a5a26"/><rect x="16" y="21" width="3" height="3" fill="#3e4e22"/><rect x="21" y="21" width="3" height="3" fill="#4a5c20"/><rect x="36" y="21" width="3" height="3" fill="#50602a"/><rect x="41" y="21" width="3" height="3" fill="#4a5a26"/><rect x="46" y="21" width="3" height="3" fill="#50602a"/><rect x="121" y="21" width="3" height="3" fill="#50602a"/><rect x="146" y="21" width="3" height="3" fill="#56662c"/><rect x="151" y="21" width="3" height="3" fill="#465626"/><rect x="156" y="21" width="3" height="3" fill="#3e4e22"/><rect x="171" y="21" width="3" height="3" fill="#56662c"/><rect x="176" y="21" width="3" height="3" fill="#465626"/><rect x="181" y="21" width="3" height="3" fill="#4a5a26"/><rect x="186" y="21" width="3" height="3" fill="#4e5e22"/><rect x="191" y="21" width="8" height="8" fill="#3f580e"/><rect x="201" y="21" width="3" height="3" fill="#4a5a26"/><rect x="231" y="21" width="3" height="3" fill="#465626"/><rect x="246" y="21" width="3" height="3" fill="#42522a"/><rect x="266" y="21" width="3" height="3" fill="#56662c"/><rect x="291" y="21" width="3" height="3" fill="#56662c"/><rect x="296" y="21" width="3" height="3" fill="#42522a"/><rect x="301" y="21" width="3" height="3" fill="#4e5e22"/><rect x="316" y="21" width="3" height="3" fill="#42522a"/><rect x="321" y="21" width="3" height="3" fill="#50602a"/><rect x="336" y="21" width="3" height="3" fill="#4a5c20"/><rect x="341" y="21" width="3" height="3" fill="#465626"/><rect x="346" y="21" width="3" height="3" fill="#4a5c20"/><rect x="351" y="21" width="3" height="3" fill="#4e5e22"/><rect x="366" y="21" width="3" height="3" fill="#50602a"/><rect x="371" y="21" width="3" height="3" fill="#3e4e22"/><rect x="376" y="21" width="3" height="3" fill="#50602a"/><rect x="381" y="21" width="3" height="3" fill="#42522a"/><rect x="386" y="21" width="3" height="3" fill="#465626"/><rect x="391" y="21" width="3" height="3" fill="#6e4e22"/><rect x="406" y="21" width="3" height="3" fill="#6a5a1c"/><rect x="26" y="26" width="3" height="3" fill="#4a5c20"/><rect x="31" y="26" width="3" height="3" fill="#4a5c20"/><rect x="36" y="26" width="3" height="3" fill="#42522a"/><rect x="41" y="26" width="3" height="3" fill="#465626"/><rect x="46" y="26" width="3" height="3" fill="#4a5a26"/><rect x="121" y="26" width="3" height="3" fill="#56662c"/><rect x="176" y="26" width="3" height="3" fill="#4a5a26"/><rect x="181" y="26" width="3" height="3" fill="#4e5e22"/><rect x="186" y="26" width="3" height="3" fill="#465626"/><rect x="201" y="26" width="3" height="3" fill="#42522a"/><rect x="231" y="26" width="3" height="3" fill="#465626"/><rect x="246" y="26" width="3" height="3" fill="#4e5e22"/><rect x="266" y="26" width="3" height="3" fill="#50602a"/><rect x="291" y="26" width="3" height="3" fill="#50602a"/><rect x="296" y="26" width="3" height="3" fill="#4e5e22"/><rect x="301" y="26" width="3" height="3" fill="#56662c"/><rect x="316" y="26" width="3" height="3" fill="#465626"/><rect x="321" y="26" width="3" height="3" fill="#50602a"/><rect x="336" y="26" width="3" height="3" fill="#465626"/><rect x="341" y="26" width="3" height="3" fill="#4a5a26"/><rect x="346" y="26" width="3" height="3" fill="#4e5e22"/><rect x="351" y="26" width="3" height="3" fill="#42522a"/><rect x="356" y="26" width="3" height="3" fill="#465626"/><rect x="361" y="26" width="3" height="3" fill="#3e4e22"/><rect x="366" y="26" width="3" height="3" fill="#4a5c20"/><rect x="371" y="26" width="3" height="3" fill="#4e5e22"/><rect x="376" y="26" width="3" height="3" fill="#4a5a26"/><rect x="381" y="26" width="3" height="3" fill="#42522a"/><rect x="386" y="26" width="3" height="3" fill="#50602a"/><rect x="391" y="26" width="3" height="3" fill="#6a5a1c"/><rect x="396" y="26" width="3" height="3" fill="#5a5a18"/><rect x="26" y="31" width="3" height="3" fill="#42522a"/><rect x="31" y="31" width="3" height="3" fill="#50602a"/><rect x="36" y="31" width="3" height="3" fill="#4a5a26"/><rect x="41" y="31" width="3" height="3" fill="#4a5a26"/><rect x="46" y="31" width="3" height="3" fill="#42522a"/><rect x="101" y="31" width="3" height="3" fill="#42522a"/><rect x="126" y="31" width="3" height="3" fill="#465626"/><rect x="131" y="31" width="3" height="3" fill="#4a5c20"/><rect x="176" y="31" width="3" height="3" fill="#4a5c20"/><rect x="181" y="31" width="3" height="3" fill="#4e5e22"/><rect x="186" y="31" width="3" height="3" fill="#42522a"/><rect x="241" y="31" width="3" height="3" fill="#50602a"/><rect x="246" y="31" width="3" height="3" fill="#3e4e22"/><rect x="266" y="31" width="3" height="3" fill="#50602a"/><rect x="281" y="31" width="8" height="8" fill="#42590f"/><rect x="291" y="31" width="3" height="3" fill="#4e5e22"/><rect x="296" y="31" width="3" height="3" fill="#4a5a26"/><rect x="301" y="31" width="3" height="3" fill="#4a5c20"/><rect x="316" y="31" width="3" height="3" fill="#4e5e22"/><rect x="321" y="31" width="3" height="3" fill="#4e5e22"/><rect x="336" y="31" width="3" height="3" fill="#50602a"/><rect x="341" y="31" width="3" height="3" fill="#56662c"/><rect x="346" y="31" width="8" height="8" fill="#48640f"/><rect x="356" y="31" width="3" height="3" fill="#3e4e22"/><rect x="361" y="31" width="3" height="3" fill="#4e5e22"/><rect x="366" y="31" width="3" height="3" fill="#50602a"/><rect x="371" y="31" width="8" height="8" fill="#4a5c20"/><rect x="381" y="31" width="3" height="3" fill="#4e5e22"/><rect x="396" y="31" width="3" height="3" fill="#6a5a1c"/><rect x="16" y="36" width="3" height="3" fill="#4a5a26"/><rect x="21" y="36" width="3" height="3" fill="#465626"/><rect x="26" y="36" width="3" height="3" fill="#4a5a26"/><rect x="31" y="36" width="3" height="3" fill="#4e5e22"/><rect x="36" y="36" width="3" height="3" fill="#42522a"/><rect x="41" y="36" width="3" height="3" fill="#50602a"/><rect x="46" y="36" width="3" height="3" fill="#4a5c20"/><rect x="101" y="36" width="3" height="3" fill="#56662c"/><rect x="126" y="36" width="3" height="3" fill="#50602a"/><rect x="131" y="36" width="3" height="3" fill="#4a5c20"/><rect x="166" y="36" width="3" height="3" fill="#50602a"/><rect x="171" y="36" width="3" height="3" fill="#4a5a26"/><rect x="176" y="36" width="3" height="3" fill="#42522a"/><rect x="181" y="36" width="3" height="3" fill="#4a5a26"/><rect x="186" y="36" width="3" height="3" fill="#3e4e22"/><rect x="251" y="36" width="3" height="3" fill="#4a5c20"/><rect x="266" y="36" width="3" height="3" fill="#4a5a26"/><rect x="291" y="36" width="3" height="3" fill="#42522a"/><rect x="296" y="36" width="3" height="3" fill="#4a5a26"/><rect x="301" y="36" width="3" height="3" fill="#465626"/><rect x="316" y="36" width="3" height="3" fill="#465626"/><rect x="321" y="36" width="3" height="3" fill="#465626"/><rect x="326" y="36" width="3" height="3" fill="#56662c"/><rect x="331" y="36" width="3" height="3" fill="#465626"/><rect x="356" y="36" width="3" height="3" fill="#42522a"/><rect x="361" y="36" width="3" height="3" fill="#42522a"/><rect x="366" y="36" width="3" height="3" fill="#56662c"/><rect x="381" y="36" width="3" height="3" fill="#4a5c20"/><rect x="396" y="36" width="3" height="3" fill="#5a5a18"/><rect x="1" y="41" width="3" height="3" fill="#42522a"/><rect x="6" y="41" width="3" height="3" fill="#50602a"/><rect x="11" y="41" width="3" height="3" fill="#4e5e22"/><rect x="16" y="41" width="3" height="3" fill="#50602a"/><rect x="21" y="41" width="8" height="8" fill="#3f580e"/><rect x="31" y="41" width="3" height="3" fill="#465626"/><rect x="36" y="41" width="3" height="3" fill="#56662c"/><rect x="41" y="41" width="3" height="3" fill="#4e5e22"/><rect x="46" y="41" width="3" height="3" fill="#56662c"/><rect x="121" y="41" width="3" height="3" fill="#42522a"/><rect x="126" y="41" width="3" height="3" fill="#465626"/><rect x="131" y="41" width="3" height="3" fill="#4a5a26"/><rect x="136" y="41" width="3" height="3" fill="#465626"/><rect x="141" y="41" width="3" height="3" fill="#56662c"/><rect x="176" y="41" width="3" height="3" fill="#4a5c20"/><rect x="181" y="41" width="3" height="3" fill="#42522a"/><rect x="186" y="41" width="3" height="3" fill="#465626"/><rect x="251" y="41" width="3" height="3" fill="#4e5e22"/><rect x="266" y="41" width="3" height="3" fill="#50602a"/><rect x="281" y="41" width="3" height="3" fill="#4e5e22"/><rect x="286" y="41" width="3" height="3" fill="#3e4e22"/><rect x="291" y="41" width="3" height="3" fill="#56662c"/><rect x="296" y="41" width="3" height="3" fill="#50602a"/><rect x="301" y="41" width="3" height="3" fill="#56662c"/><rect x="306" y="41" width="3" height="3" fill="#4a5c20"/><rect x="311" y="41" width="3" height="3" fill="#50602a"/><rect x="316" y="41" width="3" height="3" fill="#4a5c20"/><rect x="321" y="41" width="3" height="3" fill="#3e4e22"/><rect x="326" y="41" width="3" height="3" fill="#3e4e22"/><rect x="331" y="41" width="3" height="3" fill="#465626"/><rect x="346" y="41" width="3" height="3" fill="#42522a"/><rect x="351" y="41" width="3" height="3" fill="#4e5e22"/><rect x="356" y="41" width="3" height="3" fill="#465626"/><rect x="361" y="41" width="3" height="3" fill="#5e5a18"/><rect x="366" y="41" width="3" height="3" fill="#4a5c20"/><rect x="371" y="41" width="3" height="3" fill="#4a5a26"/><rect x="376" y="41" width="3" height="3" fill="#4a5a26"/><rect x="381" y="41" width="3" height="3" fill="#4e5e22"/><rect x="386" y="41" width="3" height="3" fill="#50602a"/><rect x="391" y="41" width="3" height="3" fill="#5a5a18"/><rect x="396" y="41" width="3" height="3" fill="#5a5a18"/><rect x="1" y="46" width="3" height="3" fill="#3e4e22"/><rect x="6" y="46" width="3" height="3" fill="#4a5c20"/><rect x="11" y="46" width="3" height="3" fill="#4a5c20"/><rect x="16" y="46" width="3" height="3" fill="#42522a"/><rect x="31" y="46" width="3" height="3" fill="#4a5a26"/><rect x="36" y="46" width="3" height="3" fill="#4a5c20"/><rect x="41" y="46" width="3" height="3" fill="#50602a"/><rect x="46" y="46" width="3" height="3" fill="#4e5e22"/><rect x="121" y="46" width="3" height="3" fill="#50602a"/><rect x="156" y="46" width="3" height="3" fill="#4a5c20"/><rect x="161" y="46" width="3" height="3" fill="#4e5e22"/><rect x="176" y="46" width="3" height="3" fill="#4e5e22"/><rect x="181" y="46" width="3" height="3" fill="#42522a"/><rect x="186" y="46" width="3" height="3" fill="#4a5c20"/><rect x="241" y="46" width="3" height="3" fill="#50602a"/><rect x="246" y="46" width="3" height="3" fill="#56662c"/><rect x="266" y="46" width="3" height="3" fill="#56662c"/><rect x="281" y="46" width="3" height="3" fill="#56662c"/><rect x="286" y="46" width="3" height="3" fill="#42522a"/><rect x="291" y="46" width="3" height="3" fill="#50602a"/><rect x="296" y="46" width="3" height="3" fill="#465626"/><rect x="301" y="46" width="3" height="3" fill="#3e4e22"/><rect x="316" y="46" width="3" height="3" fill="#42522a"/><rect x="321" y="46" width="3" height="3" fill="#4a5c20"/><rect x="326" y="46" width="3" height="3" fill="#42522a"/><rect x="341" y="46" width="3" height="3" fill="#3e4e22"/><rect x="346" y="46" width="3" height="3" fill="#56662c"/><rect x="361" y="46" width="3" height="3" fill="#3e4e22"/><rect x="366" y="46" width="3" height="3" fill="#565418"/><rect x="371" y="46" width="3" height="3" fill="#42522a"/><rect x="396" y="46" width="3" height="3" fill="#6a5a1c"/><rect x="401" y="46" width="3" height="3" fill="#6e4e22"/><rect x="406" y="46" width="3" height="3" fill="#5a5a18"/><rect x="1" y="51" width="3" height="3" fill="#4a5a26"/><rect x="6" y="51" width="3" height="3" fill="#4a5c20"/><rect x="11" y="51" width="3" height="3" fill="#56662c"/><rect x="16" y="51" width="3" height="3" fill="#56662c"/><rect x="21" y="51" width="3" height="3" fill="#4a5c20"/><rect x="36" y="51" width="3" height="3" fill="#56662c"/><rect x="41" y="51" width="3" height="3" fill="#42522a"/><rect x="46" y="51" width="3" height="3" fill="#42522a"/><rect x="51" y="51" width="3" height="3" fill="#465626"/><rect x="56" y="51" width="3" height="3" fill="#56662c"/><rect x="61" y="51" width="3" height="3" fill="#4a5a26"/><rect x="86" y="51" width="8" height="8" fill="#44600f"/><rect x="116" y="51" width="3" height="3" fill="#4a5a26"/><rect x="121" y="51" width="3" height="3" fill="#4e5e22"/><rect x="156" y="51" width="3" height="3" fill="#4e5e22"/><rect x="161" y="51" width="3" height="3" fill="#4a5c20"/><rect x="166" y="51" width="3" height="3" fill="#465626"/><rect x="171" y="51" width="3" height="3" fill="#4e5e22"/><rect x="176" y="51" width="3" height="3" fill="#42522a"/><rect x="181" y="51" width="3" height="3" fill="#42522a"/><rect x="186" y="51" width="3" height="3" fill="#4a5a26"/><rect x="221" y="51" width="8" height="8" fill="#48640f"/><rect x="231" y="51" width="3" height="3" fill="#4e5e22"/><rect x="236" y="51" width="3" height="3" fill="#42522a"/><rect x="241" y="51" width="3" height="3" fill="#42522a"/><rect x="246" y="51" width="3" height="3" fill="#4a5a26"/><rect x="266" y="51" width="3" height="3" fill="#4e5e22"/><rect x="281" y="51" width="8" height="8" fill="#44600f"/><rect x="291" y="51" width="3" height="3" fill="#4a5c20"/><rect x="296" y="51" width="3" height="3" fill="#42522a"/><rect x="301" y="51" width="3" height="3" fill="#3e4e22"/><rect x="326" y="51" width="3" height="3" fill="#4a5a26"/><rect x="341" y="51" width="3" height="3" fill="#4a5c20"/><rect x="346" y="51" width="3" height="3" fill="#4a5c20"/><rect x="361" y="51" width="3" height="3" fill="#4e5e22"/><rect x="366" y="51" width="3" height="3" fill="#565418"/><rect x="371" y="51" width="3" height="3" fill="#56662c"/><rect x="396" y="51" width="3" height="3" fill="#5a5a18"/><rect x="401" y="51" width="3" height="3" fill="#6a5a1c"/><rect x="406" y="51" width="3" height="3" fill="#6a5a1c"/><rect x="1" y="56" width="3" height="3" fill="#4e5e22"/><rect x="6" y="56" width="3" height="3" fill="#56662c"/><rect x="11" y="56" width="3" height="3" fill="#42522a"/><rect x="16" y="56" width="3" height="3" fill="#4a5a26"/><rect x="21" y="56" width="3" height="3" fill="#50602a"/><rect x="36" y="56" width="3" height="3" fill="#4a5a26"/><rect x="51" y="56" width="3" height="3" fill="#50602a"/><rect x="56" y="56" width="3" height="3" fill="#4a5a26"/><rect x="61" y="56" width="3" height="3" fill="#56662c"/><rect x="116" y="56" width="3" height="3" fill="#3e4e22"/><rect x="121" y="56" width="3" height="3" fill="#465626"/><rect x="186" y="56" width="3" height="3" fill="#3e4e22"/><rect x="231" y="56" width="3" height="3" fill="#56662c"/><rect x="236" y="56" width="8" height="8" fill="#42590f"/><rect x="246" y="56" width="3" height="3" fill="#3e4e22"/><rect x="266" y="56" width="3" height="3" fill="#56662c"/><rect x="291" y="56" width="3" height="3" fill="#4a5a26"/><rect x="296" y="56" width="3" height="3" fill="#465626"/><rect x="301" y="56" width="3" height="3" fill="#465626"/><rect x="306" y="56" width="3" height="3" fill="#42522a"/><rect x="311" y="56" width="3" height="3" fill="#4e5e22"/><rect x="326" y="56" width="3" height="3" fill="#4a5c20"/><rect x="331" y="56" width="3" height="3" fill="#56662c"/><rect x="336" y="56" width="3" height="3" fill="#56662c"/><rect x="341" y="56" width="3" height="3" fill="#3e4e22"/><rect x="346" y="56" width="3" height="3" fill="#56662c"/><rect x="351" y="56" width="8" height="8" fill="#3c540d"/><rect x="361" y="56" width="3" height="3" fill="#4a5c20"/><rect x="366" y="56" width="8" height="8" fill="#4a5a26"/><rect x="386" y="56" width="3" height="3" fill="#4a5a26"/><rect x="391" y="56" width="3" height="3" fill="#5e5418"/><rect x="396" y="56" width="3" height="3" fill="#5a5a18"/><rect x="401" y="56" width="3" height="3" fill="#5a5a18"/><rect x="406" y="56" width="3" height="3" fill="#4e5a14"/><rect x="1" y="61" width="8" height="8" fill="#42590f"/><rect x="11" y="61" width="3" height="3" fill="#3e4e22"/><rect x="16" y="61" width="3" height="3" fill="#4e5e22"/><rect x="21" y="61" width="8" height="8" fill="#4a6610"/><rect x="31" y="61" width="3" height="3" fill="#465626"/><rect x="36" y="61" width="3" height="3" fill="#42522a"/><rect x="81" y="61" width="3" height="3" fill="#56662c"/><rect x="86" y="61" width="3" height="3" fill="#4a5c20"/><rect x="91" y="61" width="3" height="3" fill="#4a5c20"/><rect x="186" y="61" width="3" height="3" fill="#50602a"/><rect x="191" y="61" width="3" height="3" fill="#50602a"/><rect x="226" y="61" width="8" height="8" fill="#42590f"/><rect x="246" y="61" width="3" height="3" fill="#50602a"/><rect x="251" y="61" width="3" height="3" fill="#3e4e22"/><rect x="256" y="61" width="3" height="3" fill="#56662c"/><rect x="261" y="61" width="3" height="3" fill="#465626"/><rect x="266" y="61" width="3" height="3" fill="#4a5c20"/><rect x="281" y="61" width="3" height="3" fill="#42522a"/><rect x="286" y="61" width="3" height="3" fill="#4a5a26"/><rect x="291" y="61" width="3" height="3" fill="#3e4e22"/><rect x="296" y="61" width="3" height="3" fill="#4a5c20"/><rect x="301" y="61" width="3" height="3" fill="#465626"/><rect x="306" y="61" width="3" height="3" fill="#465626"/><rect x="311" y="61" width="3" height="3" fill="#4a5c20"/><rect x="341" y="61" width="3" height="3" fill="#56662c"/><rect x="346" y="61" width="3" height="3" fill="#50602a"/><rect x="361" y="61" width="3" height="3" fill="#5e5a18"/><rect x="386" y="61" width="3" height="3" fill="#42522a"/><rect x="391" y="61" width="3" height="3" fill="#5e5418"/><rect x="396" y="61" width="3" height="3" fill="#5a5a18"/><rect x="401" y="61" width="3" height="3" fill="#4e5a14"/><rect x="406" y="61" width="3" height="3" fill="#5a5a18"/><rect x="11" y="66" width="3" height="3" fill="#42522a"/><rect x="16" y="66" width="3" height="3" fill="#50602a"/><rect x="31" y="66" width="3" height="3" fill="#50602a"/><rect x="36" y="66" width="3" height="3" fill="#42522a"/><rect x="41" y="66" width="3" height="3" fill="#4a5c20"/><rect x="46" y="66" width="3" height="3" fill="#42522a"/><rect x="91" y="66" width="3" height="3" fill="#42522a"/><rect x="186" y="66" width="3" height="3" fill="#465626"/><rect x="191" y="66" width="3" height="3" fill="#4a5a26"/><rect x="246" y="66" width="3" height="3" fill="#56662c"/><rect x="251" y="66" width="3" height="3" fill="#42522a"/><rect x="256" y="66" width="3" height="3" fill="#3e4e22"/><rect x="261" y="66" width="3" height="3" fill="#4e5e22"/><rect x="266" y="66" width="3" height="3" fill="#4a5a26"/><rect x="281" y="66" width="3" height="3" fill="#42522a"/><rect x="286" y="66" width="3" height="3" fill="#3e4e22"/><rect x="291" y="66" width="3" height="3" fill="#50602a"/><rect x="296" y="66" width="3" height="3" fill="#4e5e22"/><rect x="301" y="66" width="3" height="3" fill="#4a5a26"/><rect x="306" y="66" width="3" height="3" fill="#3e4e22"/><rect x="311" y="66" width="3" height="3" fill="#3e4e22"/><rect x="341" y="66" width="3" height="3" fill="#4a5a26"/><rect x="346" y="66" width="3" height="3" fill="#4e5e22"/><rect x="351" y="66" width="8" height="8" fill="#42590f"/><rect x="361" y="66" width="3" height="3" fill="#42522a"/><rect x="366" y="66" width="3" height="3" fill="#3e4e22"/><rect x="371" y="66" width="3" height="3" fill="#3e4e22"/><rect x="376" y="66" width="3" height="3" fill="#4e5e22"/><rect x="381" y="66" width="3" height="3" fill="#4a5a26"/><rect x="401" y="66" width="3" height="3" fill="#4e5a14"/><rect x="406" y="66" width="3" height="3" fill="#6e4e22"/><rect x="11" y="71" width="3" height="3" fill="#4a5c20"/><rect x="16" y="71" width="3" height="3" fill="#50602a"/><rect x="21" y="71" width="3" height="3" fill="#465626"/><rect x="26" y="71" width="3" height="3" fill="#4a5c20"/><rect x="46" y="71" width="3" height="3" fill="#4a5c20"/><rect x="116" y="71" width="3" height="3" fill="#4e5e22"/><rect x="121" y="71" width="3" height="3" fill="#4a5a26"/><rect x="186" y="71" width="3" height="3" fill="#3e4e22"/><rect x="191" y="71" width="3" height="3" fill="#4a5a26"/><rect x="196" y="71" width="3" height="3" fill="#3e4e22"/><rect x="201" y="71" width="3" height="3" fill="#4a5c20"/><rect x="226" y="71" width="3" height="3" fill="#42522a"/><rect x="231" y="71" width="3" height="3" fill="#4a5c20"/><rect x="246" y="71" width="3" height="3" fill="#4a5c20"/><rect x="266" y="71" width="3" height="3" fill="#465626"/><rect x="281" y="71" width="3" height="3" fill="#3e4e22"/><rect x="286" y="71" width="3" height="3" fill="#50602a"/><rect x="306" y="71" width="3" height="3" fill="#4a5a26"/><rect x="311" y="71" width="3" height="3" fill="#4a5c20"/><rect x="341" y="71" width="3" height="3" fill="#3e4e22"/><rect x="346" y="71" width="3" height="3" fill="#50602a"/><rect x="361" y="71" width="3" height="3" fill="#4e5e22"/><rect x="366" y="71" width="3" height="3" fill="#50602a"/><rect x="371" y="71" width="3" height="3" fill="#465626"/><rect x="376" y="71" width="3" height="3" fill="#42522a"/><rect x="381" y="71" width="3" height="3" fill="#4a5a26"/><rect x="401" y="71" width="3" height="3" fill="#6e4e22"/><rect x="406" y="71" width="3" height="3" fill="#4e5a14"/><rect x="11" y="76" width="3" height="3" fill="#4a5c20"/><rect x="26" y="76" width="3" height="3" fill="#50602a"/><rect x="46" y="76" width="3" height="3" fill="#42522a"/><rect x="81" y="76" width="3" height="3" fill="#42522a"/><rect x="86" y="76" width="3" height="3" fill="#50602a"/><rect x="116" y="76" width="3" height="3" fill="#4a5a26"/><rect x="121" y="76" width="3" height="3" fill="#50602a"/><rect x="126" y="76" width="3" height="3" fill="#465626"/><rect x="131" y="76" width="3" height="3" fill="#42522a"/><rect x="136" y="76" width="8" height="8" fill="#4a6610"/><rect x="146" y="76" width="3" height="3" fill="#4a5a26"/><rect x="151" y="76" width="3" height="3" fill="#3e4e22"/><rect x="186" y="76" width="3" height="3" fill="#56662c"/><rect x="191" y="76" width="3" height="3" fill="#4e5e22"/><rect x="226" y="76" width="3" height="3" fill="#4e5e22"/><rect x="231" y="76" width="3" height="3" fill="#4a5c20"/><rect x="236" y="76" width="3" height="3" fill="#3e4e22"/><rect x="241" y="76" width="3" height="3" fill="#56662c"/><rect x="246" y="76" width="3" height="3" fill="#4a5a26"/><rect x="266" y="76" width="3" height="3" fill="#56662c"/><rect x="281" y="76" width="3" height="3" fill="#56662c"/><rect x="286" y="76" width="3" height="3" fill="#56662c"/><rect x="306" y="76" width="3" height="3" fill="#56662c"/><rect x="311" y="76" width="3" height="3" fill="#465626"/><rect x="341" y="76" width="3" height="3" fill="#4a5c20"/><rect x="346" y="76" width="3" height="3" fill="#56662c"/><rect x="351" y="76" width="3" height="3" fill="#4a5a26"/><rect x="356" y="76" width="8" height="8" fill="#44600f"/><rect x="366" y="76" width="3" height="3" fill="#3e4e22"/><rect x="371" y="76" width="3" height="3" fill="#565418"/><rect x="401" y="76" width="3" height="3" fill="#4e5a14"/><rect x="406" y="76" width="3" height="3" fill="#6a5a1c"/><rect x="1" y="81" width="3" height="3" fill="#465626"/><rect x="26" y="81" width="3" height="3" fill="#465626"/><rect x="61" y="81" width="3" height="3" fill="#56662c"/><rect x="66" y="81" width="3" height="3" fill="#50602a"/><rect x="71" y="81" width="3" height="3" fill="#42522a"/><rect x="76" y="81" width="3" height="3" fill="#3e4e22"/><rect x="81" y="81" width="3" height="3" fill="#4e5e22"/><rect x="86" y="81" width="3" height="3" fill="#4e5e22"/><rect x="91" y="81" width="3" height="3" fill="#56662c"/><rect x="96" y="81" width="3" height="3" fill="#56662c"/><rect x="116" y="81" width="3" height="3" fill="#4e5e22"/><rect x="121" y="81" width="3" height="3" fill="#42522a"/><rect x="126" y="81" width="3" height="3" fill="#4a5a26"/><rect x="131" y="81" width="3" height="3" fill="#4a5c20"/><rect x="146" y="81" width="3" height="3" fill="#4e5e22"/><rect x="151" y="81" width="3" height="3" fill="#4a5c20"/><rect x="186" y="81" width="3" height="3" fill="#4e5e22"/><rect x="191" y="81" width="3" height="3" fill="#4a5a26"/><rect x="206" y="81" width="3" height="3" fill="#3e4e22"/><rect x="211" y="81" width="3" height="3" fill="#56662c"/><rect x="216" y="81" width="3" height="3" fill="#465626"/><rect x="231" y="81" width="3" height="3" fill="#4a5c20"/><rect x="236" y="81" width="3" height="3" fill="#3e4e22"/><rect x="241" y="81" width="3" height="3" fill="#3e4e22"/><rect x="246" y="81" width="3" height="3" fill="#3e4e22"/><rect x="266" y="81" width="3" height="3" fill="#465626"/><rect x="271" y="81" width="3" height="3" fill="#50602a"/><rect x="276" y="81" width="3" height="3" fill="#4a5a26"/><rect x="281" y="81" width="3" height="3" fill="#4e5e22"/><rect x="286" y="81" width="3" height="3" fill="#3e4e22"/><rect x="341" y="81" width="3" height="3" fill="#4a5a26"/><rect x="346" y="81" width="3" height="3" fill="#4e5e22"/><rect x="351" y="81" width="3" height="3" fill="#4a5c20"/><rect x="406" y="81" width="3" height="3" fill="#5a5a18"/><rect x="1" y="86" width="3" height="3" fill="#50602a"/><rect x="16" y="86" width="3" height="3" fill="#4a5a26"/><rect x="21" y="86" width="8" height="8" fill="#3f580e"/><rect x="41" y="86" width="3" height="3" fill="#4e5e22"/><rect x="61" y="86" width="3" height="3" fill="#3e4e22"/><rect x="66" y="86" width="3" height="3" fill="#4a5c20"/><rect x="71" y="86" width="3" height="3" fill="#50602a"/><rect x="76" y="86" width="3" height="3" fill="#56662c"/><rect x="81" y="86" width="3" height="3" fill="#4a5a26"/><rect x="86" y="86" width="3" height="3" fill="#42522a"/><rect x="91" y="86" width="3" height="3" fill="#56662c"/><rect x="96" y="86" width="3" height="3" fill="#50602a"/><rect x="101" y="86" width="3" height="3" fill="#4e5e22"/><rect x="131" y="86" width="3" height="3" fill="#4e5e22"/><rect x="136" y="86" width="3" height="3" fill="#4a5a26"/><rect x="141" y="86" width="3" height="3" fill="#3e4e22"/><rect x="166" y="86" width="3" height="3" fill="#56662c"/><rect x="171" y="86" width="3" height="3" fill="#56662c"/><rect x="176" y="86" width="3" height="3" fill="#4a5a26"/><rect x="181" y="86" width="8" height="8" fill="#4a6610"/><rect x="191" y="86" width="8" height="8" fill="#44600f"/><rect x="201" y="86" width="3" height="3" fill="#4a5a26"/><rect x="206" y="86" width="3" height="3" fill="#465626"/><rect x="211" y="86" width="8" height="8" fill="#4a6610"/><rect x="231" y="86" width="3" height="3" fill="#42522a"/><rect x="246" y="86" width="3" height="3" fill="#42522a"/><rect x="266" y="86" width="3" height="3" fill="#4a5c20"/><rect x="271" y="86" width="3" height="3" fill="#50602a"/><rect x="276" y="86" width="3" height="3" fill="#465626"/><rect x="281" y="86" width="3" height="3" fill="#4a5a26"/><rect x="286" y="86" width="3" height="3" fill="#56662c"/><rect x="291" y="86" width="3" height="3" fill="#4a5a26"/><rect x="296" y="86" width="3" height="3" fill="#4a5c20"/><rect x="301" y="86" width="3" height="3" fill="#56662c"/><rect x="316" y="86" width="3" height="3" fill="#56662c"/><rect x="321" y="86" width="3" height="3" fill="#465626"/><rect x="336" y="86" width="3" height="3" fill="#4a5a26"/><rect x="341" y="86" width="3" height="3" fill="#4e5e22"/><rect x="346" y="86" width="3" height="3" fill="#4e5e22"/><rect x="351" y="86" width="3" height="3" fill="#4a5c20"/><rect x="356" y="86" width="3" height="3" fill="#4e5e22"/><rect x="361" y="86" width="3" height="3" fill="#42522a"/><rect x="376" y="86" width="3" height="3" fill="#565418"/><rect x="381" y="86" width="3" height="3" fill="#4e5e22"/><rect x="406" y="86" width="3" height="3" fill="#6a5a1c"/><rect x="1" y="91" width="3" height="3" fill="#3e4e22"/><rect x="16" y="91" width="3" height="3" fill="#4a5c20"/><rect x="41" y="91" width="3" height="3" fill="#42522a"/><rect x="81" y="91" width="3" height="3" fill="#56662c"/><rect x="86" y="91" width="3" height="3" fill="#4a5a26"/><rect x="91" y="91" width="3" height="3" fill="#4a5c20"/><rect x="131" y="91" width="3" height="3" fill="#42522a"/><rect x="136" y="91" width="3" height="3" fill="#4e5e22"/><rect x="141" y="91" width="3" height="3" fill="#4a5c20"/><rect x="176" y="91" width="3" height="3" fill="#465626"/><rect x="201" y="91" width="3" height="3" fill="#50602a"/><rect x="206" y="91" width="3" height="3" fill="#4a5a26"/><rect x="221" y="91" width="3" height="3" fill="#50602a"/><rect x="226" y="91" width="3" height="3" fill="#50602a"/><rect x="231" y="91" width="3" height="3" fill="#4a5a26"/><rect x="246" y="91" width="3" height="3" fill="#4a5a26"/><rect x="276" y="91" width="3" height="3" fill="#4a5a26"/><rect x="281" y="91" width="3" height="3" fill="#3e4e22"/><rect x="286" y="91" width="3" height="3" fill="#465626"/><rect x="291" y="91" width="3" height="3" fill="#4a5c20"/><rect x="296" y="91" width="3" height="3" fill="#42522a"/><rect x="301" y="91" width="3" height="3" fill="#4a5a26"/><rect x="306" y="91" width="8" height="8" fill="#42590f"/><rect x="316" y="91" width="3" height="3" fill="#4e5e22"/><rect x="321" y="91" width="3" height="3" fill="#50602a"/><rect x="336" y="91" width="3" height="3" fill="#42522a"/><rect x="341" y="91" width="3" height="3" fill="#3e4e22"/><rect x="346" y="91" width="3" height="3" fill="#4a5a26"/><rect x="351" y="91" width="3" height="3" fill="#4e5e22"/><rect x="356" y="91" width="3" height="3" fill="#3e4e22"/><rect x="361" y="91" width="3" height="3" fill="#5e5a18"/><rect x="366" y="91" width="3" height="3" fill="#4e5e22"/><rect x="371" y="91" width="3" height="3" fill="#4a5a26"/><rect x="376" y="91" width="3" height="3" fill="#4a5a26"/><rect x="381" y="91" width="3" height="3" fill="#465626"/><rect x="396" y="91" width="3" height="3" fill="#5e5418"/><rect x="401" y="91" width="3" height="3" fill="#6a5a1c"/><rect x="406" y="91" width="3" height="3" fill="#5e5418"/><rect x="1" y="96" width="3" height="3" fill="#4e5e22"/><rect x="16" y="96" width="3" height="3" fill="#4a5a26"/><rect x="21" y="96" width="3" height="3" fill="#4e5e22"/><rect x="26" y="96" width="3" height="3" fill="#4a5a26"/><rect x="31" y="96" width="8" height="8" fill="#3c540d"/><rect x="41" y="96" width="3" height="3" fill="#50602a"/><rect x="46" y="96" width="3" height="3" fill="#3e4e22"/><rect x="51" y="96" width="3" height="3" fill="#4e5e22"/><rect x="56" y="96" width="3" height="3" fill="#50602a"/><rect x="91" y="96" width="3" height="3" fill="#42522a"/><rect x="131" y="96" width="3" height="3" fill="#42522a"/><rect x="176" y="96" width="3" height="3" fill="#465626"/><rect x="181" y="96" width="3" height="3" fill="#465626"/><rect x="186" y="96" width="3" height="3" fill="#465626"/><rect x="191" y="96" width="3" height="3" fill="#3e4e22"/><rect x="196" y="96" width="3" height="3" fill="#4a5c20"/><rect x="211" y="96" width="3" height="3" fill="#465626"/><rect x="216" y="96" width="3" height="3" fill="#4a5a26"/><rect x="221" y="96" width="3" height="3" fill="#4e5e22"/><rect x="226" y="96" width="3" height="3" fill="#50602a"/><rect x="231" y="96" width="3" height="3" fill="#42522a"/><rect x="236" y="96" width="3" height="3" fill="#50602a"/><rect x="241" y="96" width="3" height="3" fill="#4a5a26"/><rect x="246" y="96" width="3" height="3" fill="#3e4e22"/><rect x="286" y="96" width="3" height="3" fill="#56662c"/><rect x="291" y="96" width="3" height="3" fill="#3e4e22"/><rect x="296" y="96" width="3" height="3" fill="#56662c"/><rect x="301" y="96" width="3" height="3" fill="#4e5e22"/><rect x="316" y="96" width="3" height="3" fill="#50602a"/><rect x="321" y="96" width="3" height="3" fill="#42522a"/><rect x="326" y="96" width="3" height="3" fill="#4e5e22"/><rect x="331" y="96" width="3" height="3" fill="#50602a"/><rect x="336" y="96" width="3" height="3" fill="#42522a"/><rect x="341" y="96" width="3" height="3" fill="#3e4e22"/><rect x="346" y="96" width="3" height="3" fill="#3e4e22"/><rect x="351" y="96" width="3" height="3" fill="#4e5e22"/><rect x="366" y="96" width="3" height="3" fill="#465626"/><rect x="371" y="96" width="3" height="3" fill="#465626"/><rect x="376" y="96" width="3" height="3" fill="#50602a"/><rect x="381" y="96" width="3" height="3" fill="#4e5e22"/><rect x="396" y="96" width="3" height="3" fill="#6e4e22"/><rect x="401" y="96" width="3" height="3" fill="#5e5418"/><rect x="406" y="96" width="3" height="3" fill="#5e5418"/><rect x="1" y="101" width="3" height="3" fill="#4a5c20"/><rect x="6" y="101" width="3" height="3" fill="#4a5a26"/><rect x="11" y="101" width="3" height="3" fill="#4a5c20"/><rect x="16" y="101" width="3" height="3" fill="#4e5e22"/><rect x="21" y="101" width="3" height="3" fill="#50602a"/><rect x="26" y="101" width="3" height="3" fill="#4a5c20"/><rect x="41" y="101" width="8" height="8" fill="#44600f"/><rect x="51" y="101" width="3" height="3" fill="#4a5c20"/><rect x="56" y="101" width="3" height="3" fill="#4a5c20"/><rect x="91" y="101" width="3" height="3" fill="#42522a"/><rect x="96" y="101" width="3" height="3" fill="#465626"/><rect x="101" y="101" width="3" height="3" fill="#3e4e22"/><rect x="131" y="101" width="3" height="3" fill="#465626"/><rect x="166" y="101" width="3" height="3" fill="#42522a"/><rect x="171" y="101" width="3" height="3" fill="#50602a"/><rect x="176" y="101" width="3" height="3" fill="#4a5c20"/><rect x="181" y="101" width="3" height="3" fill="#4a5a26"/><rect x="186" y="101" width="3" height="3" fill="#4a5c20"/><rect x="191" y="101" width="3" height="3" fill="#50602a"/><rect x="196" y="101" width="3" height="3" fill="#3e4e22"/><rect x="211" y="101" width="3" height="3" fill="#4a5c20"/><rect x="216" y="101" width="3" height="3" fill="#465626"/><rect x="221" y="101" width="3" height="3" fill="#42522a"/><rect x="226" y="101" width="3" height="3" fill="#42522a"/><rect x="231" y="101" width="3" height="3" fill="#465626"/><rect x="236" y="101" width="3" height="3" fill="#56662c"/><rect x="241" y="101" width="3" height="3" fill="#56662c"/><rect x="246" y="101" width="3" height="3" fill="#3e4e22"/><rect x="251" y="101" width="3" height="3" fill="#4a5c20"/><rect x="256" y="101" width="3" height="3" fill="#56662c"/><rect x="261" y="101" width="3" height="3" fill="#50602a"/><rect x="266" y="101" width="3" height="3" fill="#465626"/><rect x="271" y="101" width="3" height="3" fill="#3e4e22"/><rect x="286" y="101" width="3" height="3" fill="#4e5e22"/><rect x="291" y="101" width="3" height="3" fill="#4a5c20"/><rect x="296" y="101" width="3" height="3" fill="#465626"/><rect x="301" y="101" width="3" height="3" fill="#4a5c20"/><rect x="306" y="101" width="3" height="3" fill="#3e4e22"/><rect x="311" y="101" width="3" height="3" fill="#465626"/><rect x="316" y="101" width="3" height="3" fill="#4a5c20"/><rect x="321" y="101" width="3" height="3" fill="#42522a"/><rect x="326" y="101" width="3" height="3" fill="#4a5c20"/><rect x="331" y="101" width="3" height="3" fill="#50602a"/><rect x="336" y="101" width="3" height="3" fill="#465626"/><rect x="341" y="101" width="3" height="3" fill="#42522a"/><rect x="346" y="101" width="3" height="3" fill="#42522a"/><rect x="351" y="101" width="3" height="3" fill="#50602a"/><rect x="366" y="101" width="3" height="3" fill="#4a5c20"/><rect x="401" y="101" width="3" height="3" fill="#5a5a18"/><rect x="406" y="101" width="3" height="3" fill="#6a5a1c"/><rect x="1" y="106" width="3" height="3" fill="#56662c"/><rect x="6" y="106" width="3" height="3" fill="#42522a"/><rect x="11" y="106" width="3" height="3" fill="#4a5c20"/><rect x="16" y="106" width="3" height="3" fill="#4a5c20"/><rect x="21" y="106" width="3" height="3" fill="#56662c"/><rect x="26" y="106" width="8" height="8" fill="#42590f"/><rect x="36" y="106" width="3" height="3" fill="#3e4e22"/><rect x="51" y="106" width="3" height="3" fill="#4e5e22"/><rect x="56" y="106" width="3" height="3" fill="#56662c"/><rect x="81" y="106" width="3" height="3" fill="#465626"/><rect x="96" y="106" width="3" height="3" fill="#3e4e22"/><rect x="101" y="106" width="3" height="3" fill="#4e5e22"/><rect x="131" y="106" width="3" height="3" fill="#4a5a26"/><rect x="136" y="106" width="3" height="3" fill="#3e4e22"/><rect x="141" y="106" width="3" height="3" fill="#50602a"/><rect x="146" y="106" width="3" height="3" fill="#3e4e22"/><rect x="151" y="106" width="3" height="3" fill="#4a5a26"/><rect x="156" y="106" width="3" height="3" fill="#42522a"/><rect x="161" y="106" width="3" height="3" fill="#4e5e22"/><rect x="166" y="106" width="3" height="3" fill="#465626"/><rect x="171" y="106" width="3" height="3" fill="#42522a"/><rect x="261" y="106" width="3" height="3" fill="#56662c"/><rect x="266" y="106" width="3" height="3" fill="#50602a"/><rect x="281" y="106" width="3" height="3" fill="#4a5c20"/><rect x="286" y="106" width="3" height="3" fill="#50602a"/><rect x="291" y="106" width="3" height="3" fill="#465626"/><rect x="296" y="106" width="3" height="3" fill="#4e5e22"/><rect x="301" y="106" width="3" height="3" fill="#42522a"/><rect x="306" y="106" width="3" height="3" fill="#56662c"/><rect x="311" y="106" width="3" height="3" fill="#465626"/><rect x="346" y="106" width="3" height="3" fill="#4e5e22"/><rect x="351" y="106" width="3" height="3" fill="#50602a"/><rect x="356" y="106" width="3" height="3" fill="#4a5a26"/><rect x="401" y="106" width="3" height="3" fill="#6a5a1c"/><rect x="406" y="106" width="3" height="3" fill="#6a5a1c"/><rect x="1" y="111" width="3" height="3" fill="#4a5a26"/><rect x="36" y="111" width="3" height="3" fill="#3e4e22"/><rect x="41" y="111" width="3" height="3" fill="#56662c"/><rect x="261" y="111" width="3" height="3" fill="#56662c"/><rect x="266" y="111" width="3" height="3" fill="#4a5c20"/><rect x="281" y="111" width="3" height="3" fill="#465626"/><rect x="286" y="111" width="3" height="3" fill="#3e4e22"/><rect x="291" y="111" width="3" height="3" fill="#4a5a26"/><rect x="296" y="111" width="8" height="8" fill="#3f580e"/><rect x="306" y="111" width="3" height="3" fill="#3e4e22"/><rect x="311" y="111" width="3" height="3" fill="#465626"/><rect x="346" y="111" width="3" height="3" fill="#56662c"/><rect x="351" y="111" width="3" height="3" fill="#50602a"/><rect x="356" y="111" width="3" height="3" fill="#4a5c20"/><rect x="391" y="111" width="3" height="3" fill="#5a5a18"/><rect x="396" y="111" width="3" height="3" fill="#5a5a18"/><rect x="401" y="111" width="3" height="3" fill="#4e5a14"/><rect x="406" y="111" width="3" height="3" fill="#6a5a1c"/><rect x="1" y="116" width="3" height="3" fill="#3e4e22"/><rect x="26" y="116" width="3" height="3" fill="#4a5a26"/><rect x="31" y="116" width="3" height="3" fill="#4e5e22"/><rect x="36" y="116" width="3" height="3" fill="#56662c"/><rect x="41" y="116" width="3" height="3" fill="#4e5e22"/><rect x="191" y="116" width="3" height="3" fill="#3e4e22"/><rect x="196" y="116" width="3" height="3" fill="#56662c"/><rect x="201" y="116" width="3" height="3" fill="#3e4e22"/><rect x="206" y="116" width="3" height="3" fill="#4e5e22"/><rect x="241" y="116" width="3" height="3" fill="#465626"/><rect x="246" y="116" width="3" height="3" fill="#4a5a26"/><rect x="261" y="116" width="3" height="3" fill="#4a5c20"/><rect x="266" y="116" width="3" height="3" fill="#4a5a26"/><rect x="271" y="116" width="3" height="3" fill="#465626"/><rect x="276" y="116" width="3" height="3" fill="#42522a"/><rect x="281" y="116" width="3" height="3" fill="#56662c"/><rect x="286" y="116" width="3" height="3" fill="#4a5a26"/><rect x="291" y="116" width="3" height="3" fill="#4a5c20"/><rect x="316" y="116" width="3" height="3" fill="#465626"/><rect x="321" y="116" width="3" height="3" fill="#56662c"/><rect x="326" y="116" width="3" height="3" fill="#50602a"/><rect x="331" y="116" width="3" height="3" fill="#50602a"/><rect x="336" y="116" width="3" height="3" fill="#4a5c20"/><rect x="341" y="116" width="3" height="3" fill="#4a5a26"/><rect x="346" y="116" width="3" height="3" fill="#50602a"/><rect x="351" y="116" width="3" height="3" fill="#4e5e22"/><rect x="356" y="116" width="3" height="3" fill="#50602a"/><rect x="361" y="116" width="3" height="3" fill="#3e4e22"/><rect x="366" y="116" width="3" height="3" fill="#5e5a18"/><rect x="391" y="116" width="3" height="3" fill="#5e5418"/><rect x="396" y="116" width="3" height="3" fill="#4e5a14"/><rect x="401" y="116" width="8" height="8" fill="#5e5418"/><rect x="1" y="121" width="3" height="3" fill="#4a5c20"/><rect x="6" y="121" width="3" height="3" fill="#4a5c20"/><rect x="11" y="121" width="3" height="3" fill="#4a5a26"/><rect x="26" y="121" width="3" height="3" fill="#50602a"/><rect x="31" y="121" width="3" height="3" fill="#4a5c20"/><rect x="36" y="121" width="3" height="3" fill="#465626"/><rect x="41" y="121" width="3" height="3" fill="#42522a"/><rect x="46" y="121" width="3" height="3" fill="#4a5a26"/><rect x="51" y="121" width="3" height="3" fill="#4a5a26"/><rect x="166" y="121" width="3" height="3" fill="#465626"/><rect x="171" y="121" width="3" height="3" fill="#465626"/><rect x="176" y="121" width="3" height="3" fill="#465626"/><rect x="181" y="121" width="3" height="3" fill="#4a5a26"/><rect x="186" y="121" width="3" height="3" fill="#42522a"/><rect x="191" y="121" width="3" height="3" fill="#50602a"/><rect x="206" y="121" width="3" height="3" fill="#3e4e22"/><rect x="211" y="121" width="3" height="3" fill="#50602a"/><rect x="216" y="121" width="3" height="3" fill="#465626"/><rect x="221" y="121" width="3" height="3" fill="#56662c"/><rect x="226" y="121" width="3" height="3" fill="#4e5e22"/><rect x="231" y="121" width="3" height="3" fill="#4a5a26"/><rect x="246" y="121" width="3" height="3" fill="#4a5a26"/><rect x="261" y="121" width="3" height="3" fill="#465626"/><rect x="266" y="121" width="3" height="3" fill="#4e5e22"/><rect x="281" y="121" width="3" height="3" fill="#50602a"/><rect x="286" y="121" width="3" height="3" fill="#56662c"/><rect x="291" y="121" width="3" height="3" fill="#3e4e22"/><rect x="296" y="121" width="3" height="3" fill="#56662c"/><rect x="301" y="121" width="3" height="3" fill="#50602a"/><rect x="316" y="121" width="3" height="3" fill="#465626"/><rect x="321" y="121" width="3" height="3" fill="#50602a"/><rect x="326" y="121" width="3" height="3" fill="#4a5c20"/><rect x="346" y="121" width="3" height="3" fill="#56662c"/><rect x="351" y="121" width="3" height="3" fill="#3e4e22"/><rect x="356" y="121" width="3" height="3" fill="#4a5a26"/><rect x="361" y="121" width="3" height="3" fill="#5e5a18"/><rect x="366" y="121" width="3" height="3" fill="#5e5a18"/><rect x="391" y="121" width="3" height="3" fill="#5e5418"/><rect x="396" y="121" width="3" height="3" fill="#4e5a14"/><rect x="11" y="126" width="3" height="3" fill="#4a5c20"/><rect x="26" y="126" width="3" height="3" fill="#42522a"/><rect x="31" y="126" width="3" height="3" fill="#4a5c20"/><rect x="36" y="126" width="3" height="3" fill="#42522a"/><rect x="41" y="126" width="3" height="3" fill="#4e5e22"/><rect x="46" y="126" width="3" height="3" fill="#3e4e22"/><rect x="51" y="126" width="3" height="3" fill="#4a5c20"/><rect x="86" y="126" width="3" height="3" fill="#4a5a26"/><rect x="91" y="126" width="3" height="3" fill="#50602a"/><rect x="166" y="126" width="3" height="3" fill="#50602a"/><rect x="171" y="126" width="3" height="3" fill="#56662c"/><rect x="176" y="126" width="3" height="3" fill="#465626"/><rect x="181" y="126" width="3" height="3" fill="#56662c"/><rect x="186" y="126" width="3" height="3" fill="#42522a"/><rect x="191" y="126" width="3" height="3" fill="#42522a"/><rect x="206" y="126" width="3" height="3" fill="#4a5a26"/><rect x="231" y="126" width="3" height="3" fill="#56662c"/><rect x="246" y="126" width="3" height="3" fill="#4e5e22"/><rect x="261" y="126" width="3" height="3" fill="#4a5a26"/><rect x="266" y="126" width="3" height="3" fill="#56662c"/><rect x="281" y="126" width="3" height="3" fill="#3e4e22"/><rect x="286" y="126" width="3" height="3" fill="#42522a"/><rect x="291" y="126" width="3" height="3" fill="#4e5e22"/><rect x="296" y="126" width="3" height="3" fill="#3e4e22"/><rect x="301" y="126" width="3" height="3" fill="#42522a"/><rect x="306" y="126" width="3" height="3" fill="#42522a"/><rect x="311" y="126" width="3" height="3" fill="#4e5e22"/><rect x="316" y="126" width="3" height="3" fill="#3e4e22"/><rect x="321" y="126" width="3" height="3" fill="#50602a"/><rect x="326" y="126" width="3" height="3" fill="#56662c"/><rect x="346" y="126" width="3" height="3" fill="#465626"/><rect x="351" y="126" width="3" height="3" fill="#56662c"/><rect x="356" y="126" width="3" height="3" fill="#50602a"/><rect x="361" y="126" width="3" height="3" fill="#4a5a26"/><rect x="366" y="126" width="3" height="3" fill="#565418"/><rect x="391" y="126" width="3" height="3" fill="#5e5418"/><rect x="406" y="126" width="3" height="3" fill="#4e5a14"/><rect x="11" y="131" width="3" height="3" fill="#42522a"/><rect x="16" y="131" width="3" height="3" fill="#4e5e22"/><rect x="21" y="131" width="3" height="3" fill="#56662c"/><rect x="26" y="131" width="3" height="3" fill="#50602a"/><rect x="31" y="131" width="3" height="3" fill="#4a5a26"/><rect x="36" y="131" width="3" height="3" fill="#50602a"/><rect x="41" y="131" width="3" height="3" fill="#4a5a26"/><rect x="46" y="131" width="8" height="8" fill="#4a6610"/><rect x="56" y="131" width="3" height="3" fill="#56662c"/><rect x="71" y="131" width="3" height="3" fill="#465626"/><rect x="76" y="131" width="3" height="3" fill="#4a5c20"/><rect x="81" y="131" width="3" height="3" fill="#465626"/><rect x="86" y="131" width="3" height="3" fill="#42522a"/><rect x="91" y="131" width="3" height="3" fill="#4a5c20"/><rect x="96" y="131" width="3" height="3" fill="#50602a"/><rect x="151" y="131" width="3" height="3" fill="#42522a"/><rect x="166" y="131" width="3" height="3" fill="#42522a"/><rect x="171" y="131" width="3" height="3" fill="#4e5e22"/><rect x="176" y="131" width="3" height="3" fill="#4a5a26"/><rect x="181" y="131" width="3" height="3" fill="#4a5a26"/><rect x="186" y="131" width="3" height="3" fill="#4a5a26"/><rect x="191" y="131" width="3" height="3" fill="#56662c"/><rect x="196" y="131" width="8" height="8" fill="#44600f"/><rect x="206" y="131" width="3" height="3" fill="#4a5a26"/><rect x="241" y="131" width="3" height="3" fill="#4e5e22"/><rect x="246" y="131" width="3" height="3" fill="#56662c"/><rect x="261" y="131" width="3" height="3" fill="#465626"/><rect x="266" y="131" width="3" height="3" fill="#3e4e22"/><rect x="271" y="131" width="3" height="3" fill="#465626"/><rect x="291" y="131" width="3" height="3" fill="#4a5c20"/><rect x="296" y="131" width="3" height="3" fill="#42522a"/><rect x="301" y="131" width="3" height="3" fill="#4a5a26"/><rect x="306" y="131" width="3" height="3" fill="#42522a"/><rect x="311" y="131" width="3" height="3" fill="#50602a"/><rect x="316" y="131" width="3" height="3" fill="#42522a"/><rect x="321" y="131" width="3" height="3" fill="#3e4e22"/><rect x="326" y="131" width="3" height="3" fill="#50602a"/><rect x="346" y="131" width="3" height="3" fill="#465626"/><rect x="381" y="131" width="3" height="3" fill="#4a5c20"/><rect x="386" y="131" width="3" height="3" fill="#465626"/><rect x="391" y="131" width="3" height="3" fill="#5a5a18"/><rect x="406" y="131" width="3" height="3" fill="#6a5a1c"/><rect x="11" y="136" width="3" height="3" fill="#3e4e22"/><rect x="16" y="136" width="3" height="3" fill="#42522a"/><rect x="21" y="136" width="3" height="3" fill="#50602a"/><rect x="26" y="136" width="3" height="3" fill="#50602a"/><rect x="31" y="136" width="3" height="3" fill="#50602a"/><rect x="36" y="136" width="3" height="3" fill="#4a5c20"/><rect x="41" y="136" width="3" height="3" fill="#4a5a26"/><rect x="56" y="136" width="3" height="3" fill="#4e5e22"/><rect x="86" y="136" width="3" height="3" fill="#50602a"/><rect x="91" y="136" width="3" height="3" fill="#465626"/><rect x="96" y="136" width="3" height="3" fill="#56662c"/><rect x="151" y="136" width="3" height="3" fill="#4a5a26"/><rect x="166" y="136" width="3" height="3" fill="#42522a"/><rect x="171" y="136" width="3" height="3" fill="#4e5e22"/><rect x="176" y="136" width="3" height="3" fill="#42522a"/><rect x="181" y="136" width="3" height="3" fill="#4a5c20"/><rect x="186" y="136" width="3" height="3" fill="#42522a"/><rect x="191" y="136" width="3" height="3" fill="#465626"/><rect x="206" y="136" width="3" height="3" fill="#4a5c20"/><rect x="211" y="136" width="3" height="3" fill="#4a5a26"/><rect x="216" y="136" width="3" height="3" fill="#4e5e22"/><rect x="221" y="136" width="3" height="3" fill="#4a5a26"/><rect x="226" y="136" width="3" height="3" fill="#3e4e22"/><rect x="241" y="136" width="3" height="3" fill="#56662c"/><rect x="246" y="136" width="8" height="8" fill="#4a6610"/><rect x="256" y="136" width="3" height="3" fill="#3e4e22"/><rect x="261" y="136" width="3" height="3" fill="#4a5c20"/><rect x="266" y="136" width="3" height="3" fill="#50602a"/><rect x="271" y="136" width="3" height="3" fill="#50602a"/><rect x="291" y="136" width="3" height="3" fill="#42522a"/><rect x="306" y="136" width="3" height="3" fill="#42522a"/><rect x="311" y="136" width="3" height="3" fill="#465626"/><rect x="316" y="136" width="3" height="3" fill="#56662c"/><rect x="341" y="136" width="3" height="3" fill="#50602a"/><rect x="346" y="136" width="3" height="3" fill="#42522a"/><rect x="391" y="136" width="3" height="3" fill="#6a5a1c"/><rect x="406" y="136" width="3" height="3" fill="#4e5a14"/><rect x="11" y="141" width="3" height="3" fill="#4a5a26"/><rect x="16" y="141" width="3" height="3" fill="#3e4e22"/><rect x="31" y="141" width="3" height="3" fill="#56662c"/><rect x="36" y="141" width="3" height="3" fill="#4a5c20"/><rect x="41" y="141" width="3" height="3" fill="#56662c"/><rect x="56" y="141" width="3" height="3" fill="#4e5e22"/><rect x="86" y="141" width="3" height="3" fill="#3e4e22"/><rect x="91" y="141" width="8" height="8" fill="#42590f"/><rect x="111" y="141" width="3" height="3" fill="#4a5a26"/><rect x="116" y="141" width="3" height="3" fill="#56662c"/><rect x="121" y="141" width="3" height="3" fill="#465626"/><rect x="126" y="141" width="3" height="3" fill="#42522a"/><rect x="131" y="141" width="3" height="3" fill="#3e4e22"/><rect x="136" y="141" width="3" height="3" fill="#4a5c20"/><rect x="166" y="141" width="3" height="3" fill="#4a5a26"/><rect x="171" y="141" width="3" height="3" fill="#465626"/><rect x="176" y="141" width="3" height="3" fill="#56662c"/><rect x="181" y="141" width="3" height="3" fill="#4a5a26"/><rect x="186" y="141" width="3" height="3" fill="#50602a"/><rect x="191" y="141" width="8" height="8" fill="#3f580e"/><rect x="201" y="141" width="3" height="3" fill="#50602a"/><rect x="206" y="141" width="3" height="3" fill="#4e5e22"/><rect x="211" y="141" width="3" height="3" fill="#4a5a26"/><rect x="216" y="141" width="8" height="8" fill="#42590f"/><rect x="226" y="141" width="3" height="3" fill="#4e5e22"/><rect x="231" y="141" width="3" height="3" fill="#56662c"/><rect x="236" y="141" width="3" height="3" fill="#56662c"/><rect x="241" y="141" width="3" height="3" fill="#465626"/><rect x="256" y="141" width="3" height="3" fill="#4a5a26"/><rect x="261" y="141" width="3" height="3" fill="#56662c"/><rect x="266" y="141" width="3" height="3" fill="#4e5e22"/><rect x="271" y="141" width="3" height="3" fill="#465626"/><rect x="291" y="141" width="3" height="3" fill="#50602a"/><rect x="306" y="141" width="3" height="3" fill="#42522a"/><rect x="311" y="141" width="3" height="3" fill="#50602a"/><rect x="316" y="141" width="3" height="3" fill="#56662c"/><rect x="341" y="141" width="3" height="3" fill="#50602a"/><rect x="346" y="141" width="3" height="3" fill="#4a5a26"/><rect x="391" y="141" width="3" height="3" fill="#6e4e22"/><rect x="406" y="141" width="3" height="3" fill="#4e5a14"/><rect x="1" y="146" width="3" height="3" fill="#4a5a26"/><rect x="6" y="146" width="3" height="3" fill="#4a5a26"/><rect x="11" y="146" width="3" height="3" fill="#3e4e22"/><rect x="16" y="146" width="3" height="3" fill="#3e4e22"/><rect x="31" y="146" width="3" height="3" fill="#3e4e22"/><rect x="36" y="146" width="3" height="3" fill="#4a5a26"/><rect x="41" y="146" width="3" height="3" fill="#50602a"/><rect x="56" y="146" width="3" height="3" fill="#3e4e22"/><rect x="86" y="146" width="3" height="3" fill="#4a5c20"/><rect x="111" y="146" width="3" height="3" fill="#4a5a26"/><rect x="116" y="146" width="3" height="3" fill="#50602a"/><rect x="121" y="146" width="3" height="3" fill="#4a5c20"/><rect x="166" y="146" width="3" height="3" fill="#4a5a26"/><rect x="171" y="146" width="3" height="3" fill="#4a5c20"/><rect x="176" y="146" width="3" height="3" fill="#56662c"/><rect x="181" y="146" width="3" height="3" fill="#4a5a26"/><rect x="186" y="146" width="3" height="3" fill="#4e5e22"/><rect x="201" y="146" width="3" height="3" fill="#4e5e22"/><rect x="206" y="146" width="3" height="3" fill="#4a5a26"/><rect x="211" y="146" width="3" height="3" fill="#4e5e22"/><rect x="236" y="146" width="3" height="3" fill="#4a5a26"/><rect x="241" y="146" width="3" height="3" fill="#4a5a26"/><rect x="246" y="146" width="3" height="3" fill="#4e5e22"/><rect x="251" y="146" width="3" height="3" fill="#50602a"/><rect x="256" y="146" width="3" height="3" fill="#4e5e22"/><rect x="261" y="146" width="3" height="3" fill="#50602a"/><rect x="266" y="146" width="3" height="3" fill="#50602a"/><rect x="281" y="146" width="3" height="3" fill="#4a5c20"/><rect x="286" y="146" width="3" height="3" fill="#4e5e22"/><rect x="291" y="146" width="3" height="3" fill="#465626"/><rect x="296" y="146" width="3" height="3" fill="#4e5e22"/><rect x="301" y="146" width="3" height="3" fill="#42522a"/><rect x="316" y="146" width="3" height="3" fill="#42522a"/><rect x="341" y="146" width="3" height="3" fill="#3e4e22"/><rect x="346" y="146" width="3" height="3" fill="#4e5e22"/><rect x="381" y="146" width="3" height="3" fill="#56662c"/><rect x="386" y="146" width="3" height="3" fill="#4a5a26"/><rect x="11" y="151" width="3" height="3" fill="#42522a"/><rect x="86" y="151" width="3" height="3" fill="#4a5c20"/><rect x="91" y="151" width="3" height="3" fill="#4a5c20"/><rect x="116" y="151" width="8" height="8" fill="#48640f"/><rect x="176" y="151" width="3" height="3" fill="#42522a"/><rect x="181" y="151" width="3" height="3" fill="#3e4e22"/><rect x="186" y="151" width="3" height="3" fill="#4e5e22"/><rect x="191" y="151" width="3" height="3" fill="#42522a"/><rect x="196" y="151" width="3" height="3" fill="#4a5a26"/><rect x="201" y="151" width="3" height="3" fill="#465626"/><rect x="236" y="151" width="3" height="3" fill="#3e4e22"/><rect x="241" y="151" width="3" height="3" fill="#4a5a26"/><rect x="246" y="151" width="3" height="3" fill="#56662c"/><rect x="266" y="151" width="3" height="3" fill="#465626"/><rect x="281" y="151" width="3" height="3" fill="#50602a"/><rect x="286" y="151" width="3" height="3" fill="#3e4e22"/><rect x="291" y="151" width="3" height="3" fill="#42522a"/><rect x="296" y="151" width="3" height="3" fill="#4e5e22"/><rect x="301" y="151" width="3" height="3" fill="#465626"/><rect x="316" y="151" width="3" height="3" fill="#56662c"/><rect x="341" y="151" width="3" height="3" fill="#50602a"/><rect x="346" y="151" width="3" height="3" fill="#465626"/><rect x="381" y="151" width="8" height="8" fill="#565418"/><rect x="11" y="156" width="3" height="3" fill="#56662c"/><rect x="86" y="156" width="3" height="3" fill="#50602a"/><rect x="91" y="156" width="3" height="3" fill="#4e5e22"/><rect x="151" y="156" width="3" height="3" fill="#465626"/><rect x="156" y="156" width="3" height="3" fill="#56662c"/><rect x="161" y="156" width="3" height="3" fill="#4e5e22"/><rect x="176" y="156" width="3" height="3" fill="#4e5e22"/><rect x="181" y="156" width="3" height="3" fill="#4a5c20"/><rect x="186" y="156" width="3" height="3" fill="#4a5a26"/><rect x="191" y="156" width="3" height="3" fill="#56662c"/><rect x="196" y="156" width="3" height="3" fill="#4e5e22"/><rect x="201" y="156" width="3" height="3" fill="#4e5e22"/><rect x="226" y="156" width="3" height="3" fill="#4a5c20"/><rect x="231" y="156" width="3" height="3" fill="#42522a"/><rect x="236" y="156" width="3" height="3" fill="#3e4e22"/><rect x="241" y="156" width="3" height="3" fill="#42522a"/><rect x="246" y="156" width="3" height="3" fill="#42522a"/><rect x="266" y="156" width="3" height="3" fill="#4a5a26"/><rect x="271" y="156" width="8" height="8" fill="#48640f"/><rect x="281" y="156" width="3" height="3" fill="#56662c"/><rect x="286" y="156" width="3" height="3" fill="#4e5e22"/><rect x="291" y="156" width="3" height="3" fill="#4a5c20"/><rect x="296" y="156" width="3" height="3" fill="#4a5c20"/><rect x="301" y="156" width="3" height="3" fill="#3e4e22"/><rect x="306" y="156" width="8" height="8" fill="#42590f"/><rect x="316" y="156" width="3" height="3" fill="#4a5a26"/><rect x="321" y="156" width="3" height="3" fill="#42522a"/><rect x="326" y="156" width="3" height="3" fill="#3e4e22"/><rect x="331" y="156" width="3" height="3" fill="#50602a"/><rect x="336" y="156" width="3" height="3" fill="#4a5c20"/><rect x="341" y="156" width="3" height="3" fill="#56662c"/><rect x="346" y="156" width="3" height="3" fill="#3e4e22"/><rect x="391" y="156" width="3" height="3" fill="#5e5418"/><rect x="396" y="156" width="3" height="3" fill="#5a5a18"/><rect x="401" y="156" width="3" height="3" fill="#5e5418"/><rect x="406" y="156" width="3" height="3" fill="#4e5a14"/><rect x="1" y="161" width="3" height="3" fill="#4e5e22"/><rect x="6" y="161" width="3" height="3" fill="#4a5c20"/><rect x="11" y="161" width="3" height="3" fill="#4e5e22"/><rect x="181" y="161" width="3" height="3" fill="#42522a"/><rect x="186" y="161" width="3" height="3" fill="#42522a"/><rect x="191" y="161" width="3" height="3" fill="#4a5a26"/><rect x="196" y="161" width="3" height="3" fill="#465626"/><rect x="201" y="161" width="3" height="3" fill="#4a5a26"/><rect x="226" y="161" width="3" height="3" fill="#4a5a26"/><rect x="231" y="161" width="3" height="3" fill="#4e5e22"/><rect x="236" y="161" width="3" height="3" fill="#4a5a26"/><rect x="241" y="161" width="3" height="3" fill="#4a5c20"/><rect x="246" y="161" width="3" height="3" fill="#4a5a26"/><rect x="266" y="161" width="3" height="3" fill="#42522a"/><rect x="281" y="161" width="3" height="3" fill="#4e5e22"/><rect x="286" y="161" width="3" height="3" fill="#50602a"/><rect x="291" y="161" width="3" height="3" fill="#4a5c20"/><rect x="296" y="161" width="3" height="3" fill="#50602a"/><rect x="301" y="161" width="3" height="3" fill="#465626"/><rect x="316" y="161" width="8" height="8" fill="#3f580e"/><rect x="326" y="161" width="3" height="3" fill="#56662c"/><rect x="331" y="161" width="3" height="3" fill="#4a5c20"/><rect x="336" y="161" width="3" height="3" fill="#4a5a26"/><rect x="341" y="161" width="3" height="3" fill="#3e4e22"/><rect x="346" y="161" width="3" height="3" fill="#42522a"/><rect x="371" y="161" width="3" height="3" fill="#50602a"/><rect x="376" y="161" width="8" height="8" fill="#465626"/><rect x="386" y="161" width="3" height="3" fill="#5e5a18"/><rect x="391" y="161" width="3" height="3" fill="#6a5a1c"/><rect x="396" y="161" width="3" height="3" fill="#6e4e22"/><rect x="401" y="161" width="8" height="8" fill="#6a5a1c"/><rect x="1" y="166" width="3" height="3" fill="#4a5a26"/><rect x="6" y="166" width="3" height="3" fill="#42522a"/><rect x="11" y="166" width="3" height="3" fill="#4a5a26"/><rect x="181" y="166" width="3" height="3" fill="#50602a"/><rect x="186" y="166" width="3" height="3" fill="#56662c"/><rect x="191" y="166" width="3" height="3" fill="#4e5e22"/><rect x="196" y="166" width="3" height="3" fill="#56662c"/><rect x="201" y="166" width="3" height="3" fill="#465626"/><rect x="226" y="166" width="3" height="3" fill="#4a5c20"/><rect x="231" y="166" width="3" height="3" fill="#42522a"/><rect x="236" y="166" width="3" height="3" fill="#4a5c20"/><rect x="241" y="166" width="3" height="3" fill="#56662c"/><rect x="246" y="166" width="3" height="3" fill="#42522a"/><rect x="266" y="166" width="3" height="3" fill="#50602a"/><rect x="271" y="166" width="3" height="3" fill="#50602a"/><rect x="276" y="166" width="8" height="8" fill="#48640f"/><rect x="286" y="166" width="3" height="3" fill="#3e4e22"/><rect x="291" y="166" width="3" height="3" fill="#4a5c20"/><rect x="296" y="166" width="3" height="3" fill="#465626"/><rect x="326" y="166" width="3" height="3" fill="#4a5c20"/><rect x="331" y="166" width="3" height="3" fill="#3e4e22"/><rect x="336" y="166" width="3" height="3" fill="#4a5c20"/><rect x="341" y="166" width="3" height="3" fill="#4e5e22"/><rect x="346" y="166" width="3" height="3" fill="#4a5c20"/><rect x="371" y="166" width="3" height="3" fill="#4a5a26"/><rect x="386" y="166" width="3" height="3" fill="#50602a"/><rect x="391" y="166" width="3" height="3" fill="#6a5a1c"/><rect x="396" y="166" width="3" height="3" fill="#5a5a18"/><rect x="1" y="171" width="3" height="3" fill="#50602a"/><rect x="6" y="171" width="3" height="3" fill="#56662c"/><rect x="11" y="171" width="3" height="3" fill="#42522a"/><rect x="116" y="171" width="3" height="3" fill="#3e4e22"/><rect x="121" y="171" width="3" height="3" fill="#4a5c20"/><rect x="126" y="171" width="3" height="3" fill="#42522a"/><rect x="171" y="171" width="3" height="3" fill="#56662c"/><rect x="176" y="171" width="3" height="3" fill="#42522a"/><rect x="181" y="171" width="3" height="3" fill="#50602a"/><rect x="186" y="171" width="3" height="3" fill="#4e5e22"/><rect x="191" y="171" width="3" height="3" fill="#56662c"/><rect x="196" y="171" width="3" height="3" fill="#3e4e22"/><rect x="201" y="171" width="3" height="3" fill="#4a5c20"/><rect x="206" y="171" width="3" height="3" fill="#42522a"/><rect x="211" y="171" width="3" height="3" fill="#465626"/><rect x="216" y="171" width="3" height="3" fill="#465626"/><rect x="221" y="171" width="3" height="3" fill="#4e5e22"/><rect x="226" y="171" width="3" height="3" fill="#4a5c20"/><rect x="231" y="171" width="8" height="8" fill="#42590f"/><rect x="241" y="171" width="3" height="3" fill="#4e5e22"/><rect x="246" y="171" width="3" height="3" fill="#465626"/><rect x="266" y="171" width="3" height="3" fill="#42522a"/><rect x="271" y="171" width="3" height="3" fill="#465626"/><rect x="286" y="171" width="3" height="3" fill="#3e4e22"/><rect x="291" y="171" width="3" height="3" fill="#4e5e22"/><rect x="296" y="171" width="3" height="3" fill="#4e5e22"/><rect x="316" y="171" width="3" height="3" fill="#4e5e22"/><rect x="321" y="171" width="3" height="3" fill="#4a5c20"/><rect x="326" y="171" width="3" height="3" fill="#4a5c20"/><rect x="331" y="171" width="3" height="3" fill="#56662c"/><rect x="336" y="171" width="3" height="3" fill="#50602a"/><rect x="341" y="171" width="3" height="3" fill="#50602a"/><rect x="346" y="171" width="3" height="3" fill="#3e4e22"/><rect x="371" y="171" width="3" height="3" fill="#4a5a26"/><rect x="376" y="171" width="3" height="3" fill="#56662c"/><rect x="381" y="171" width="3" height="3" fill="#4a5c20"/><rect x="386" y="171" width="3" height="3" fill="#465626"/><rect x="391" y="171" width="3" height="3" fill="#5e5418"/><rect x="396" y="171" width="3" height="3" fill="#4e5a14"/><rect x="401" y="171" width="3" height="3" fill="#5e5418"/><rect x="406" y="171" width="3" height="3" fill="#4e5a14"/><rect x="116" y="176" width="3" height="3" fill="#42522a"/><rect x="121" y="176" width="3" height="3" fill="#50602a"/><rect x="126" y="176" width="3" height="3" fill="#4a5a26"/><rect x="171" y="176" width="3" height="3" fill="#50602a"/><rect x="176" y="176" width="3" height="3" fill="#42522a"/><rect x="181" y="176" width="3" height="3" fill="#4e5e22"/><rect x="186" y="176" width="3" height="3" fill="#3e4e22"/><rect x="191" y="176" width="3" height="3" fill="#465626"/><rect x="196" y="176" width="3" height="3" fill="#4e5e22"/><rect x="201" y="176" width="3" height="3" fill="#4a5a26"/><rect x="206" y="176" width="3" height="3" fill="#465626"/><rect x="211" y="176" width="3" height="3" fill="#3e4e22"/><rect x="216" y="176" width="3" height="3" fill="#3e4e22"/><rect x="221" y="176" width="3" height="3" fill="#465626"/><rect x="226" y="176" width="3" height="3" fill="#4a5c20"/><rect x="241" y="176" width="3" height="3" fill="#42522a"/><rect x="246" y="176" width="3" height="3" fill="#465626"/><rect x="266" y="176" width="3" height="3" fill="#4a5c20"/><rect x="271" y="176" width="3" height="3" fill="#3e4e22"/><rect x="276" y="176" width="3" height="3" fill="#56662c"/><rect x="281" y="176" width="3" height="3" fill="#42522a"/><rect x="286" y="176" width="3" height="3" fill="#50602a"/><rect x="291" y="176" width="3" height="3" fill="#42522a"/><rect x="296" y="176" width="3" height="3" fill="#4e5e22"/><rect x="316" y="176" width="3" height="3" fill="#50602a"/><rect x="321" y="176" width="3" height="3" fill="#42522a"/><rect x="326" y="176" width="3" height="3" fill="#42522a"/><rect x="331" y="176" width="3" height="3" fill="#50602a"/><rect x="336" y="176" width="3" height="3" fill="#4a5c20"/><rect x="341" y="176" width="3" height="3" fill="#4e5e22"/><rect x="346" y="176" width="3" height="3" fill="#56662c"/><rect x="371" y="176" width="3" height="3" fill="#42522a"/><rect x="391" y="176" width="3" height="3" fill="#5e5418"/><rect x="396" y="176" width="3" height="3" fill="#6e4e22"/><rect x="401" y="176" width="3" height="3" fill="#5a5a18"/><rect x="406" y="176" width="3" height="3" fill="#6a5a1c"/><rect x="116" y="181" width="3" height="3" fill="#50602a"/><rect x="121" y="181" width="3" height="3" fill="#42522a"/><rect x="126" y="181" width="3" height="3" fill="#465626"/><rect x="171" y="181" width="3" height="3" fill="#50602a"/><rect x="176" y="181" width="3" height="3" fill="#50602a"/><rect x="181" y="181" width="3" height="3" fill="#56662c"/><rect x="186" y="181" width="3" height="3" fill="#4a5c20"/><rect x="191" y="181" width="3" height="3" fill="#465626"/><rect x="196" y="181" width="3" height="3" fill="#4a5a26"/><rect x="201" y="181" width="3" height="3" fill="#42522a"/><rect x="236" y="181" width="8" height="8" fill="#48640f"/><rect x="246" y="181" width="3" height="3" fill="#465626"/><rect x="251" y="181" width="3" height="3" fill="#56662c"/><rect x="256" y="181" width="3" height="3" fill="#50602a"/><rect x="261" y="181" width="3" height="3" fill="#56662c"/><rect x="266" y="181" width="3" height="3" fill="#4e5e22"/><rect x="286" y="181" width="3" height="3" fill="#465626"/><rect x="291" y="181" width="8" height="8" fill="#3c540d"/><rect x="301" y="181" width="3" height="3" fill="#56662c"/><rect x="306" y="181" width="3" height="3" fill="#3e4e22"/><rect x="311" y="181" width="3" height="3" fill="#4e5e22"/><rect x="316" y="181" width="3" height="3" fill="#56662c"/><rect x="321" y="181" width="3" height="3" fill="#56662c"/><rect x="326" y="181" width="3" height="3" fill="#3e4e22"/><rect x="331" y="181" width="8" height="8" fill="#3f580e"/><rect x="341" y="181" width="3" height="3" fill="#4e5e22"/><rect x="346" y="181" width="3" height="3" fill="#465626"/><rect x="351" y="181" width="3" height="3" fill="#4a5a26"/><rect x="356" y="181" width="8" height="8" fill="#3c540d"/><rect x="366" y="181" width="3" height="3" fill="#4e5e22"/><rect x="371" y="181" width="3" height="3" fill="#565418"/><rect x="391" y="181" width="3" height="3" fill="#6a5a1c"/><rect x="396" y="181" width="3" height="3" fill="#5a5a18"/><rect x="401" y="181" width="3" height="3" fill="#5a5a18"/><rect x="406" y="181" width="3" height="3" fill="#5a5a18"/><rect x="116" y="186" width="3" height="3" fill="#3e4e22"/><rect x="161" y="186" width="3" height="3" fill="#3e4e22"/><rect x="166" y="186" width="3" height="3" fill="#4e5e22"/><rect x="171" y="186" width="3" height="3" fill="#4a5a26"/><rect x="176" y="186" width="3" height="3" fill="#4a5c20"/><rect x="181" y="186" width="3" height="3" fill="#42522a"/><rect x="186" y="186" width="3" height="3" fill="#56662c"/><rect x="191" y="186" width="3" height="3" fill="#4e5e22"/><rect x="196" y="186" width="3" height="3" fill="#465626"/><rect x="201" y="186" width="3" height="3" fill="#42522a"/><rect x="246" y="186" width="3" height="3" fill="#56662c"/><rect x="251" y="186" width="3" height="3" fill="#4a5c20"/><rect x="256" y="186" width="3" height="3" fill="#4a5a26"/><rect x="261" y="186" width="3" height="3" fill="#56662c"/><rect x="266" y="186" width="3" height="3" fill="#3e4e22"/><rect x="286" y="186" width="3" height="3" fill="#4a5c20"/><rect x="301" y="186" width="3" height="3" fill="#465626"/><rect x="306" y="186" width="3" height="3" fill="#4a5c20"/><rect x="311" y="186" width="3" height="3" fill="#465626"/><rect x="316" y="186" width="3" height="3" fill="#50602a"/><rect x="321" y="186" width="3" height="3" fill="#50602a"/><rect x="326" y="186" width="3" height="3" fill="#4a5a26"/><rect x="341" y="186" width="3" height="3" fill="#3e4e22"/><rect x="346" y="186" width="3" height="3" fill="#56662c"/><rect x="351" y="186" width="3" height="3" fill="#3e4e22"/><rect x="366" y="186" width="3" height="3" fill="#4a5c20"/><rect x="371" y="186" width="3" height="3" fill="#50602a"/><rect x="391" y="186" width="3" height="3" fill="#4e5a14"/><rect x="396" y="186" width="3" height="3" fill="#5e5418"/><rect x="401" y="186" width="3" height="3" fill="#5a5a18"/><rect x="406" y="186" width="3" height="3" fill="#5a5a18"/><rect x="1" y="191" width="3" height="3" fill="#4a5c20"/><rect x="6" y="191" width="3" height="3" fill="#56662c"/><rect x="11" y="191" width="3" height="3" fill="#50602a"/><rect x="116" y="191" width="3" height="3" fill="#3e4e22"/><rect x="181" y="191" width="3" height="3" fill="#4a5a26"/><rect x="186" y="191" width="3" height="3" fill="#42522a"/><rect x="191" y="191" width="3" height="3" fill="#56662c"/><rect x="196" y="191" width="3" height="3" fill="#50602a"/><rect x="201" y="191" width="3" height="3" fill="#3e4e22"/><rect x="236" y="191" width="3" height="3" fill="#4a5c20"/><rect x="241" y="191" width="3" height="3" fill="#42522a"/><rect x="246" y="191" width="3" height="3" fill="#4a5c20"/><rect x="251" y="191" width="3" height="3" fill="#42522a"/><rect x="256" y="191" width="3" height="3" fill="#42522a"/><rect x="261" y="191" width="3" height="3" fill="#465626"/><rect x="266" y="191" width="3" height="3" fill="#4e5e22"/><rect x="286" y="191" width="3" height="3" fill="#42522a"/><rect x="291" y="191" width="3" height="3" fill="#4e5e22"/><rect x="296" y="191" width="3" height="3" fill="#42522a"/><rect x="301" y="191" width="3" height="3" fill="#42522a"/><rect x="306" y="191" width="3" height="3" fill="#465626"/><rect x="311" y="191" width="3" height="3" fill="#465626"/><rect x="331" y="191" width="3" height="3" fill="#465626"/><rect x="336" y="191" width="3" height="3" fill="#50602a"/><rect x="341" y="191" width="3" height="3" fill="#465626"/><rect x="346" y="191" width="3" height="3" fill="#465626"/><rect x="351" y="191" width="3" height="3" fill="#4a5c20"/><rect x="356" y="191" width="3" height="3" fill="#42522a"/><rect x="361" y="191" width="3" height="3" fill="#465626"/><rect x="366" y="191" width="3" height="3" fill="#5e5a18"/><rect x="371" y="191" width="8" height="8" fill="#42522a"/><rect x="381" y="191" width="8" height="8" fill="#4a5a26"/><rect x="391" y="191" width="8" height="8" fill="#4e5a14"/><rect x="401" y="191" width="3" height="3" fill="#6e4e22"/><rect x="406" y="191" width="3" height="3" fill="#6a5a1c"/><rect x="1" y="196" width="3" height="3" fill="#465626"/><rect x="6" y="196" width="3" height="3" fill="#42522a"/><rect x="11" y="196" width="3" height="3" fill="#3e4e22"/><rect x="116" y="196" width="3" height="3" fill="#3e4e22"/><rect x="181" y="196" width="3" height="3" fill="#4a5a26"/><rect x="186" y="196" width="3" height="3" fill="#465626"/><rect x="191" y="196" width="3" height="3" fill="#3e4e22"/><rect x="196" y="196" width="3" height="3" fill="#4a5a26"/><rect x="201" y="196" width="3" height="3" fill="#3e4e22"/><rect x="236" y="196" width="3" height="3" fill="#3e4e22"/><rect x="241" y="196" width="3" height="3" fill="#465626"/><rect x="246" y="196" width="8" height="8" fill="#42590f"/><rect x="256" y="196" width="3" height="3" fill="#3e4e22"/><rect x="261" y="196" width="3" height="3" fill="#56662c"/><rect x="266" y="196" width="8" height="8" fill="#4a6610"/><rect x="276" y="196" width="3" height="3" fill="#4a5a26"/><rect x="281" y="196" width="3" height="3" fill="#465626"/><rect x="286" y="196" width="3" height="3" fill="#50602a"/><rect x="291" y="196" width="3" height="3" fill="#4e5e22"/><rect x="296" y="196" width="3" height="3" fill="#4a5c20"/><rect x="301" y="196" width="3" height="3" fill="#4e5e22"/><rect x="306" y="196" width="3" height="3" fill="#4e5e22"/><rect x="311" y="196" width="3" height="3" fill="#4a5a26"/><rect x="346" y="196" width="8" height="8" fill="#44600f"/><rect x="356" y="196" width="3" height="3" fill="#56662c"/><rect x="361" y="196" width="3" height="3" fill="#4a5a26"/><rect x="366" y="196" width="3" height="3" fill="#5e5a18"/><rect x="401" y="196" width="3" height="3" fill="#4e5a14"/><rect x="406" y="196" width="3" height="3" fill="#6e4e22"/><rect x="1" y="201" width="3" height="3" fill="#56662c"/><rect x="21" y="201" width="3" height="3" fill="#465626"/><rect x="26" y="201" width="3" height="3" fill="#42522a"/><rect x="31" y="201" width="3" height="3" fill="#50602a"/><rect x="36" y="201" width="3" height="3" fill="#4a5a26"/><rect x="41" y="201" width="3" height="3" fill="#3e4e22"/><rect x="46" y="201" width="3" height="3" fill="#3e4e22"/><rect x="51" y="201" width="3" height="3" fill="#4a5c20"/><rect x="56" y="201" width="3" height="3" fill="#3e4e22"/><rect x="61" y="201" width="3" height="3" fill="#56662c"/><rect x="116" y="201" width="3" height="3" fill="#4a5a26"/><rect x="181" y="201" width="3" height="3" fill="#4a5a26"/><rect x="186" y="201" width="3" height="3" fill="#50602a"/><rect x="191" y="201" width="3" height="3" fill="#4e5e22"/><rect x="196" y="201" width="3" height="3" fill="#4e5e22"/><rect x="201" y="201" width="3" height="3" fill="#50602a"/><rect x="236" y="201" width="3" height="3" fill="#4a5a26"/><rect x="241" y="201" width="3" height="3" fill="#465626"/><rect x="256" y="201" width="3" height="3" fill="#4a5c20"/><rect x="261" y="201" width="3" height="3" fill="#465626"/><rect x="276" y="201" width="3" height="3" fill="#4e5e22"/><rect x="281" y="201" width="3" height="3" fill="#42522a"/><rect x="286" y="201" width="3" height="3" fill="#50602a"/><rect x="291" y="201" width="3" height="3" fill="#4e5e22"/><rect x="296" y="201" width="3" height="3" fill="#3e4e22"/><rect x="301" y="201" width="3" height="3" fill="#42522a"/><rect x="306" y="201" width="3" height="3" fill="#4a5c20"/><rect x="311" y="201" width="3" height="3" fill="#3e4e22"/><rect x="356" y="201" width="3" height="3" fill="#56662c"/><rect x="361" y="201" width="3" height="3" fill="#42522a"/><rect x="366" y="201" width="3" height="3" fill="#3e4e22"/><rect x="371" y="201" width="3" height="3" fill="#42522a"/><rect x="376" y="201" width="8" height="8" fill="#56662c"/><rect x="386" y="201" width="3" height="3" fill="#4a5c20"/><rect x="391" y="201" width="3" height="3" fill="#5a5a18"/><rect x="396" y="201" width="3" height="3" fill="#4e5a14"/><rect x="401" y="201" width="3" height="3" fill="#5a5a18"/><rect x="406" y="201" width="3" height="3" fill="#5a5a18"/><rect x="1" y="206" width="3" height="3" fill="#3e4e22"/><rect x="21" y="206" width="3" height="3" fill="#42522a"/><rect x="26" y="206" width="3" height="3" fill="#465626"/><rect x="31" y="206" width="3" height="3" fill="#4e5e22"/><rect x="36" y="206" width="3" height="3" fill="#56662c"/><rect x="41" y="206" width="3" height="3" fill="#4a5c20"/><rect x="46" y="206" width="3" height="3" fill="#465626"/><rect x="51" y="206" width="3" height="3" fill="#3e4e22"/><rect x="56" y="206" width="3" height="3" fill="#4e5e22"/><rect x="61" y="206" width="3" height="3" fill="#4a5a26"/><rect x="116" y="206" width="3" height="3" fill="#4e5e22"/><rect x="181" y="206" width="3" height="3" fill="#4a5a26"/><rect x="186" y="206" width="3" height="3" fill="#4a5c20"/><rect x="191" y="206" width="3" height="3" fill="#4e5e22"/><rect x="196" y="206" width="3" height="3" fill="#465626"/><rect x="201" y="206" width="3" height="3" fill="#4a5a26"/><rect x="236" y="206" width="3" height="3" fill="#4a5a26"/><rect x="241" y="206" width="3" height="3" fill="#3e4e22"/><rect x="246" y="206" width="3" height="3" fill="#4a5a26"/><rect x="251" y="206" width="3" height="3" fill="#4a5a26"/><rect x="256" y="206" width="3" height="3" fill="#4a5a26"/><rect x="261" y="206" width="3" height="3" fill="#3e4e22"/><rect x="286" y="206" width="3" height="3" fill="#4a5a26"/><rect x="291" y="206" width="3" height="3" fill="#4a5c20"/><rect x="296" y="206" width="3" height="3" fill="#3e4e22"/><rect x="301" y="206" width="3" height="3" fill="#4a5c20"/><rect x="306" y="206" width="3" height="3" fill="#465626"/><rect x="311" y="206" width="3" height="3" fill="#3e4e22"/><rect x="316" y="206" width="3" height="3" fill="#4a5c20"/><rect x="321" y="206" width="3" height="3" fill="#56662c"/><rect x="326" y="206" width="3" height="3" fill="#4a5a26"/><rect x="346" y="206" width="3" height="3" fill="#3e4e22"/><rect x="371" y="206" width="3" height="3" fill="#5e5a18"/><rect x="386" y="206" width="3" height="3" fill="#3e4e22"/><rect x="391" y="206" width="3" height="3" fill="#5e5418"/><rect x="396" y="206" width="3" height="3" fill="#6a5a1c"/><rect x="401" y="206" width="3" height="3" fill="#5e5418"/><rect x="406" y="206" width="3" height="3" fill="#5a5a18"/><rect x="1" y="211" width="3" height="3" fill="#50602a"/><rect x="21" y="211" width="3" height="3" fill="#3e4e22"/><rect x="26" y="211" width="3" height="3" fill="#4e5e22"/><rect x="31" y="211" width="3" height="3" fill="#56662c"/><rect x="36" y="211" width="3" height="3" fill="#4e5e22"/><rect x="41" y="211" width="3" height="3" fill="#56662c"/><rect x="46" y="211" width="3" height="3" fill="#3e4e22"/><rect x="51" y="211" width="3" height="3" fill="#4e5e22"/><rect x="56" y="211" width="3" height="3" fill="#4a5a26"/><rect x="111" y="211" width="3" height="3" fill="#465626"/><rect x="116" y="211" width="3" height="3" fill="#3e4e22"/><rect x="161" y="211" width="3" height="3" fill="#42522a"/><rect x="166" y="211" width="3" height="3" fill="#465626"/><rect x="171" y="211" width="3" height="3" fill="#50602a"/><rect x="176" y="211" width="3" height="3" fill="#42522a"/><rect x="181" y="211" width="3" height="3" fill="#50602a"/><rect x="186" y="211" width="3" height="3" fill="#3e4e22"/><rect x="191" y="211" width="3" height="3" fill="#50602a"/><rect x="196" y="211" width="3" height="3" fill="#50602a"/><rect x="201" y="211" width="3" height="3" fill="#3e4e22"/><rect x="206" y="211" width="3" height="3" fill="#42522a"/><rect x="211" y="211" width="3" height="3" fill="#56662c"/><rect x="216" y="211" width="3" height="3" fill="#3e4e22"/><rect x="221" y="211" width="3" height="3" fill="#4a5c20"/><rect x="226" y="211" width="3" height="3" fill="#3e4e22"/><rect x="231" y="211" width="3" height="3" fill="#4a5a26"/><rect x="236" y="211" width="3" height="3" fill="#4a5a26"/><rect x="241" y="211" width="3" height="3" fill="#4a5c20"/><rect x="246" y="211" width="3" height="3" fill="#3e4e22"/><rect x="251" y="211" width="8" height="8" fill="#4a6610"/><rect x="261" y="211" width="3" height="3" fill="#4a5c20"/><rect x="286" y="211" width="3" height="3" fill="#42522a"/><rect x="291" y="211" width="8" height="8" fill="#3f580e"/><rect x="301" y="211" width="3" height="3" fill="#4a5c20"/><rect x="306" y="211" width="3" height="3" fill="#3e4e22"/><rect x="311" y="211" width="3" height="3" fill="#4a5c20"/><rect x="316" y="211" width="3" height="3" fill="#4e5e22"/><rect x="321" y="211" width="3" height="3" fill="#56662c"/><rect x="326" y="211" width="3" height="3" fill="#50602a"/><rect x="331" y="211" width="3" height="3" fill="#4e5e22"/><rect x="336" y="211" width="3" height="3" fill="#50602a"/><rect x="341" y="211" width="3" height="3" fill="#4e5e22"/><rect x="346" y="211" width="3" height="3" fill="#4a5a26"/><rect x="391" y="211" width="3" height="3" fill="#6a5a1c"/><rect x="396" y="211" width="3" height="3" fill="#4e5a14"/><rect x="401" y="211" width="3" height="3" fill="#6e4e22"/><rect x="406" y="211" width="3" height="3" fill="#5e5418"/><rect x="1" y="216" width="3" height="3" fill="#42522a"/><rect x="6" y="216" width="3" height="3" fill="#3e4e22"/><rect x="11" y="216" width="8" height="8" fill="#3c540d"/><rect x="21" y="216" width="3" height="3" fill="#50602a"/><rect x="26" y="216" width="3" height="3" fill="#4e5e22"/><rect x="31" y="216" width="3" height="3" fill="#465626"/><rect x="36" y="216" width="3" height="3" fill="#4a5a26"/><rect x="41" y="216" width="3" height="3" fill="#4e5e22"/><rect x="46" y="216" width="3" height="3" fill="#3e4e22"/><rect x="51" y="216" width="3" height="3" fill="#50602a"/><rect x="56" y="216" width="3" height="3" fill="#4a5c20"/><rect x="111" y="216" width="3" height="3" fill="#3e4e22"/><rect x="116" y="216" width="3" height="3" fill="#4a5c20"/><rect x="161" y="216" width="3" height="3" fill="#4a5a26"/><rect x="166" y="216" width="3" height="3" fill="#42522a"/><rect x="171" y="216" width="3" height="3" fill="#4a5a26"/><rect x="176" y="216" width="8" height="8" fill="#4a6610"/><rect x="186" y="216" width="3" height="3" fill="#4a5c20"/><rect x="191" y="216" width="3" height="3" fill="#4a5a26"/><rect x="196" y="216" width="8" height="8" fill="#48640f"/><rect x="206" y="216" width="3" height="3" fill="#465626"/><rect x="211" y="216" width="3" height="3" fill="#56662c"/><rect x="216" y="216" width="3" height="3" fill="#4a5c20"/><rect x="221" y="216" width="3" height="3" fill="#42522a"/><rect x="226" y="216" width="3" height="3" fill="#50602a"/><rect x="231" y="216" width="3" height="3" fill="#465626"/><rect x="236" y="216" width="3" height="3" fill="#56662c"/><rect x="241" y="216" width="3" height="3" fill="#465626"/><rect x="246" y="216" width="3" height="3" fill="#42522a"/><rect x="261" y="216" width="3" height="3" fill="#42522a"/><rect x="286" y="216" width="3" height="3" fill="#4e5e22"/><rect x="301" y="216" width="3" height="3" fill="#4a5a26"/><rect x="306" y="216" width="3" height="3" fill="#465626"/><rect x="311" y="216" width="3" height="3" fill="#42522a"/><rect x="316" y="216" width="3" height="3" fill="#4a5c20"/><rect x="321" y="216" width="3" height="3" fill="#3e4e22"/><rect x="326" y="216" width="3" height="3" fill="#3e4e22"/><rect x="331" y="216" width="3" height="3" fill="#56662c"/><rect x="336" y="216" width="3" height="3" fill="#3e4e22"/><rect x="341" y="216" width="3" height="3" fill="#4e5e22"/><rect x="346" y="216" width="3" height="3" fill="#3e4e22"/><rect x="391" y="216" width="3" height="3" fill="#6e4e22"/><rect x="396" y="216" width="3" height="3" fill="#6e4e22"/><rect x="401" y="216" width="3" height="3" fill="#6e4e22"/><rect x="406" y="216" width="3" height="3" fill="#5e5418"/><rect x="1" y="221" width="3" height="3" fill="#4e5e22"/><rect x="6" y="221" width="3" height="3" fill="#4a5c20"/><rect x="21" y="221" width="3" height="3" fill="#42522a"/><rect x="26" y="221" width="3" height="3" fill="#465626"/><rect x="31" y="221" width="3" height="3" fill="#4a5a26"/><rect x="36" y="221" width="3" height="3" fill="#4a5a26"/><rect x="41" y="221" width="3" height="3" fill="#3e4e22"/><rect x="46" y="221" width="3" height="3" fill="#56662c"/><rect x="51" y="221" width="3" height="3" fill="#3e4e22"/><rect x="56" y="221" width="3" height="3" fill="#4a5a26"/><rect x="111" y="221" width="3" height="3" fill="#56662c"/><rect x="116" y="221" width="3" height="3" fill="#4a5c20"/><rect x="161" y="221" width="3" height="3" fill="#4a5c20"/><rect x="166" y="221" width="3" height="3" fill="#465626"/><rect x="171" y="221" width="3" height="3" fill="#4e5e22"/><rect x="186" y="221" width="3" height="3" fill="#3e4e22"/><rect x="191" y="221" width="3" height="3" fill="#42522a"/><rect x="226" y="221" width="3" height="3" fill="#4e5e22"/><rect x="231" y="221" width="3" height="3" fill="#56662c"/><rect x="236" y="221" width="3" height="3" fill="#3e4e22"/><rect x="241" y="221" width="3" height="3" fill="#56662c"/><rect x="246" y="221" width="3" height="3" fill="#50602a"/><rect x="251" y="221" width="3" height="3" fill="#3e4e22"/><rect x="256" y="221" width="3" height="3" fill="#50602a"/><rect x="261" y="221" width="3" height="3" fill="#42522a"/><rect x="286" y="221" width="3" height="3" fill="#50602a"/><rect x="291" y="221" width="3" height="3" fill="#56662c"/><rect x="296" y="221" width="3" height="3" fill="#4a5a26"/><rect x="301" y="221" width="3" height="3" fill="#3e4e22"/><rect x="306" y="221" width="3" height="3" fill="#4a5c20"/><rect x="311" y="221" width="3" height="3" fill="#50602a"/><rect x="316" y="221" width="3" height="3" fill="#4a5c20"/><rect x="321" y="221" width="3" height="3" fill="#3e4e22"/><rect x="326" y="221" width="3" height="3" fill="#4e5e22"/><rect x="331" y="221" width="3" height="3" fill="#465626"/><rect x="336" y="221" width="3" height="3" fill="#4e5e22"/><rect x="341" y="221" width="3" height="3" fill="#465626"/><rect x="346" y="221" width="3" height="3" fill="#56662c"/><rect x="391" y="221" width="3" height="3" fill="#6a5a1c"/><rect x="396" y="221" width="3" height="3" fill="#6a5a1c"/><rect x="401" y="221" width="8" height="8" fill="#6a5a1c"/><rect x="1" y="226" width="3" height="3" fill="#42522a"/><rect x="6" y="226" width="3" height="3" fill="#3e4e22"/><rect x="11" y="226" width="3" height="3" fill="#4e5e22"/><rect x="16" y="226" width="8" height="8" fill="#44600f"/><rect x="26" y="226" width="8" height="8" fill="#48640f"/><rect x="36" y="226" width="8" height="8" fill="#44600f"/><rect x="46" y="226" width="3" height="3" fill="#4e5e22"/><rect x="51" y="226" width="3" height="3" fill="#4e5e22"/><rect x="56" y="226" width="3" height="3" fill="#56662c"/><rect x="161" y="226" width="3" height="3" fill="#56662c"/><rect x="166" y="226" width="3" height="3" fill="#42522a"/><rect x="171" y="226" width="3" height="3" fill="#4e5e22"/><rect x="176" y="226" width="3" height="3" fill="#3e4e22"/><rect x="181" y="226" width="3" height="3" fill="#56662c"/><rect x="186" y="226" width="3" height="3" fill="#4a5a26"/><rect x="191" y="226" width="3" height="3" fill="#4e5e22"/><rect x="196" y="226" width="3" height="3" fill="#4a5c20"/><rect x="201" y="226" width="3" height="3" fill="#4e5e22"/><rect x="226" y="226" width="3" height="3" fill="#4a5c20"/><rect x="231" y="226" width="3" height="3" fill="#50602a"/><rect x="236" y="226" width="3" height="3" fill="#42522a"/><rect x="241" y="226" width="3" height="3" fill="#3e4e22"/><rect x="246" y="226" width="3" height="3" fill="#42522a"/><rect x="251" y="226" width="3" height="3" fill="#465626"/><rect x="256" y="226" width="3" height="3" fill="#56662c"/><rect x="261" y="226" width="3" height="3" fill="#4a5c20"/><rect x="266" y="226" width="3" height="3" fill="#4a5a26"/><rect x="271" y="226" width="3" height="3" fill="#56662c"/><rect x="276" y="226" width="3" height="3" fill="#4a5c20"/><rect x="281" y="226" width="3" height="3" fill="#56662c"/><rect x="286" y="226" width="3" height="3" fill="#465626"/><rect x="291" y="226" width="3" height="3" fill="#56662c"/><rect x="296" y="226" width="3" height="3" fill="#4a5a26"/><rect x="301" y="226" width="3" height="3" fill="#42522a"/><rect x="306" y="226" width="3" height="3" fill="#4a5a26"/><rect x="311" y="226" width="3" height="3" fill="#4e5e22"/><rect x="316" y="226" width="3" height="3" fill="#4a5c20"/><rect x="321" y="226" width="3" height="3" fill="#465626"/><rect x="326" y="226" width="3" height="3" fill="#465626"/><rect x="331" y="226" width="3" height="3" fill="#4a5a26"/><rect x="336" y="226" width="3" height="3" fill="#465626"/><rect x="341" y="226" width="3" height="3" fill="#42522a"/><rect x="346" y="226" width="3" height="3" fill="#4a5a26"/><rect x="351" y="226" width="3" height="3" fill="#42522a"/><rect x="356" y="226" width="3" height="3" fill="#56662c"/><rect x="361" y="226" width="3" height="3" fill="#565418"/><rect x="366" y="226" width="3" height="3" fill="#4a5c20"/><rect x="391" y="226" width="3" height="3" fill="#6a5a1c"/><rect x="396" y="226" width="3" height="3" fill="#5e5418"/><rect x="1" y="231" width="3" height="3" fill="#50602a"/><rect x="6" y="231" width="3" height="3" fill="#42522a"/><rect x="11" y="231" width="3" height="3" fill="#4a5a26"/><rect x="46" y="231" width="3" height="3" fill="#4e5e22"/><rect x="51" y="231" width="3" height="3" fill="#465626"/><rect x="56" y="231" width="3" height="3" fill="#4e5e22"/><rect x="181" y="231" width="3" height="3" fill="#4e5e22"/><rect x="186" y="231" width="3" height="3" fill="#4a5c20"/><rect x="191" y="231" width="3" height="3" fill="#4e5e22"/><rect x="196" y="231" width="3" height="3" fill="#4a5c20"/><rect x="201" y="231" width="3" height="3" fill="#4e5e22"/><rect x="226" y="231" width="3" height="3" fill="#50602a"/><rect x="231" y="231" width="8" height="8" fill="#4a6610"/><rect x="241" y="231" width="3" height="3" fill="#56662c"/><rect x="246" y="231" width="3" height="3" fill="#50602a"/><rect x="251" y="231" width="3" height="3" fill="#3e4e22"/><rect x="271" y="231" width="3" height="3" fill="#4a5a26"/><rect x="276" y="231" width="3" height="3" fill="#4a5a26"/><rect x="281" y="231" width="3" height="3" fill="#4a5c20"/><rect x="286" y="231" width="3" height="3" fill="#3e4e22"/><rect x="291" y="231" width="8" height="8" fill="#44600f"/><rect x="301" y="231" width="3" height="3" fill="#4e5e22"/><rect x="306" y="231" width="3" height="3" fill="#42522a"/><rect x="311" y="231" width="3" height="3" fill="#56662c"/><rect x="316" y="231" width="3" height="3" fill="#56662c"/><rect x="321" y="231" width="3" height="3" fill="#42522a"/><rect x="326" y="231" width="3" height="3" fill="#4a5c20"/><rect x="331" y="231" width="3" height="3" fill="#465626"/><rect x="1" y="236" width="8" height="8" fill="#3f580e"/><rect x="11" y="236" width="3" height="3" fill="#56662c"/><rect x="16" y="236" width="3" height="3" fill="#50602a"/><rect x="21" y="236" width="3" height="3" fill="#4e5e22"/><rect x="26" y="236" width="3" height="3" fill="#50602a"/><rect x="31" y="236" width="3" height="3" fill="#42522a"/><rect x="36" y="236" width="3" height="3" fill="#56662c"/><rect x="41" y="236" width="3" height="3" fill="#465626"/><rect x="46" y="236" width="3" height="3" fill="#4a5c20"/><rect x="51" y="236" width="3" height="3" fill="#4e5e22"/><rect x="56" y="236" width="3" height="3" fill="#56662c"/><rect x="181" y="236" width="3" height="3" fill="#50602a"/><rect x="186" y="236" width="3" height="3" fill="#50602a"/><rect x="191" y="236" width="3" height="3" fill="#56662c"/><rect x="196" y="236" width="3" height="3" fill="#42522a"/><rect x="201" y="236" width="3" height="3" fill="#3e4e22"/><rect x="226" y="236" width="3" height="3" fill="#50602a"/><rect x="241" y="236" width="3" height="3" fill="#4e5e22"/><rect x="246" y="236" width="3" height="3" fill="#42522a"/><rect x="251" y="236" width="3" height="3" fill="#42522a"/><rect x="271" y="236" width="3" height="3" fill="#4a5a26"/><rect x="276" y="236" width="3" height="3" fill="#50602a"/><rect x="281" y="236" width="3" height="3" fill="#42522a"/><rect x="286" y="236" width="3" height="3" fill="#465626"/><rect x="301" y="236" width="3" height="3" fill="#50602a"/><rect x="11" y="241" width="3" height="3" fill="#4a5c20"/><rect x="16" y="241" width="3" height="3" fill="#4a5c20"/><rect x="21" y="241" width="3" height="3" fill="#3e4e22"/><rect x="26" y="241" width="3" height="3" fill="#42522a"/><rect x="31" y="241" width="3" height="3" fill="#465626"/><rect x="36" y="241" width="3" height="3" fill="#3e4e22"/><rect x="41" y="241" width="8" height="8" fill="#3c540d"/><rect x="51" y="241" width="3" height="3" fill="#465626"/><rect x="56" y="241" width="3" height="3" fill="#4e5e22"/><rect x="111" y="241" width="3" height="3" fill="#465626"/><rect x="116" y="241" width="3" height="3" fill="#56662c"/><rect x="121" y="241" width="3" height="3" fill="#42522a"/><rect x="126" y="241" width="3" height="3" fill="#4e5e22"/><rect x="131" y="241" width="8" height="8" fill="#4a6610"/><rect x="181" y="241" width="3" height="3" fill="#4a5a26"/><rect x="186" y="241" width="3" height="3" fill="#50602a"/><rect x="221" y="241" width="3" height="3" fill="#4a5a26"/><rect x="226" y="241" width="3" height="3" fill="#3e4e22"/><rect x="231" y="241" width="3" height="3" fill="#42522a"/><rect x="236" y="241" width="3" height="3" fill="#3e4e22"/><rect x="241" y="241" width="3" height="3" fill="#4e5e22"/><rect x="246" y="241" width="3" height="3" fill="#56662c"/><rect x="251" y="241" width="3" height="3" fill="#465626"/><rect x="271" y="241" width="3" height="3" fill="#4a5c20"/><rect x="276" y="241" width="3" height="3" fill="#4a5a26"/><rect x="281" y="241" width="8" height="8" fill="#4a6610"/><rect x="291" y="241" width="3" height="3" fill="#50602a"/><rect x="296" y="241" width="3" height="3" fill="#3e4e22"/><rect x="301" y="241" width="3" height="3" fill="#50602a"/><rect x="1" y="246" width="3" height="3" fill="#465626"/><rect x="6" y="246" width="3" height="3" fill="#56662c"/><rect x="11" y="246" width="3" height="3" fill="#4e5e22"/><rect x="16" y="246" width="3" height="3" fill="#42522a"/><rect x="21" y="246" width="3" height="3" fill="#56662c"/><rect x="26" y="246" width="3" height="3" fill="#465626"/><rect x="31" y="246" width="3" height="3" fill="#42522a"/><rect x="36" y="246" width="3" height="3" fill="#4a5a26"/><rect x="51" y="246" width="3" height="3" fill="#3e4e22"/><rect x="56" y="246" width="3" height="3" fill="#4e5e22"/><rect x="111" y="246" width="3" height="3" fill="#42522a"/><rect x="116" y="246" width="3" height="3" fill="#42522a"/><rect x="121" y="246" width="3" height="3" fill="#42522a"/><rect x="126" y="246" width="3" height="3" fill="#4a5a26"/><rect x="141" y="246" width="3" height="3" fill="#4a5a26"/><rect x="146" y="246" width="3" height="3" fill="#42522a"/><rect x="151" y="246" width="3" height="3" fill="#42522a"/><rect x="156" y="246" width="3" height="3" fill="#50602a"/><rect x="181" y="246" width="3" height="3" fill="#4e5e22"/><rect x="186" y="246" width="3" height="3" fill="#4a5c20"/><rect x="221" y="246" width="3" height="3" fill="#465626"/><rect x="226" y="246" width="3" height="3" fill="#465626"/><rect x="231" y="246" width="3" height="3" fill="#42522a"/><rect x="236" y="246" width="3" height="3" fill="#4a5a26"/><rect x="241" y="246" width="3" height="3" fill="#465626"/><rect x="246" y="246" width="3" height="3" fill="#465626"/><rect x="251" y="246" width="8" height="8" fill="#4a6610"/><rect x="261" y="246" width="3" height="3" fill="#50602a"/><rect x="266" y="246" width="3" height="3" fill="#3e4e22"/><rect x="271" y="246" width="3" height="3" fill="#56662c"/><rect x="276" y="246" width="3" height="3" fill="#50602a"/><rect x="291" y="246" width="8" height="8" fill="#3c540d"/><rect x="301" y="246" width="3" height="3" fill="#4a5a26"/><rect x="1" y="251" width="3" height="3" fill="#42522a"/><rect x="6" y="251" width="3" height="3" fill="#50602a"/><rect x="11" y="251" width="3" height="3" fill="#3e4e22"/><rect x="16" y="251" width="3" height="3" fill="#42522a"/><rect x="21" y="251" width="3" height="3" fill="#42522a"/><rect x="26" y="251" width="3" height="3" fill="#465626"/><rect x="31" y="251" width="3" height="3" fill="#56662c"/><rect x="36" y="251" width="8" height="8" fill="#4a6610"/><rect x="46" y="251" width="3" height="3" fill="#465626"/><rect x="51" y="251" width="3" height="3" fill="#465626"/><rect x="56" y="251" width="3" height="3" fill="#4a5a26"/><rect x="111" y="251" width="3" height="3" fill="#4a5c20"/><rect x="116" y="251" width="3" height="3" fill="#3e4e22"/><rect x="121" y="251" width="3" height="3" fill="#56662c"/><rect x="126" y="251" width="3" height="3" fill="#56662c"/><rect x="131" y="251" width="3" height="3" fill="#4e5e22"/><rect x="136" y="251" width="3" height="3" fill="#56662c"/><rect x="141" y="251" width="3" height="3" fill="#50602a"/><rect x="146" y="251" width="3" height="3" fill="#4e5e22"/><rect x="166" y="251" width="3" height="3" fill="#465626"/><rect x="171" y="251" width="3" height="3" fill="#4e5e22"/><rect x="176" y="251" width="3" height="3" fill="#42522a"/><rect x="181" y="251" width="3" height="3" fill="#56662c"/><rect x="186" y="251" width="3" height="3" fill="#56662c"/><rect x="221" y="251" width="3" height="3" fill="#4a5a26"/><rect x="246" y="251" width="3" height="3" fill="#4a5c20"/><rect x="261" y="251" width="3" height="3" fill="#3e4e22"/><rect x="266" y="251" width="3" height="3" fill="#4a5c20"/><rect x="271" y="251" width="3" height="3" fill="#42522a"/><rect x="276" y="251" width="3" height="3" fill="#3e4e22"/><rect x="281" y="251" width="3" height="3" fill="#4a5c20"/><rect x="286" y="251" width="3" height="3" fill="#4a5a26"/><rect x="301" y="251" width="3" height="3" fill="#4a5a26"/><rect x="1" y="256" width="3" height="3" fill="#56662c"/><rect x="6" y="256" width="3" height="3" fill="#4e5e22"/><rect x="11" y="256" width="3" height="3" fill="#3e4e22"/><rect x="16" y="256" width="3" height="3" fill="#465626"/><rect x="21" y="256" width="3" height="3" fill="#56662c"/><rect x="26" y="256" width="3" height="3" fill="#4e5e22"/><rect x="31" y="256" width="3" height="3" fill="#4e5e22"/><rect x="46" y="256" width="3" height="3" fill="#56662c"/><rect x="51" y="256" width="3" height="3" fill="#42522a"/><rect x="56" y="256" width="3" height="3" fill="#4a5a26"/><rect x="111" y="256" width="3" height="3" fill="#50602a"/><rect x="116" y="256" width="3" height="3" fill="#3e4e22"/><rect x="121" y="256" width="3" height="3" fill="#3e4e22"/><rect x="126" y="256" width="3" height="3" fill="#3e4e22"/><rect x="131" y="256" width="3" height="3" fill="#4a5c20"/><rect x="136" y="256" width="3" height="3" fill="#3e4e22"/><rect x="141" y="256" width="3" height="3" fill="#42522a"/><rect x="146" y="256" width="3" height="3" fill="#50602a"/><rect x="166" y="256" width="3" height="3" fill="#4a5a26"/><rect x="171" y="256" width="8" height="8" fill="#44600f"/><rect x="181" y="256" width="3" height="3" fill="#42522a"/><rect x="186" y="256" width="3" height="3" fill="#4e5e22"/><rect x="221" y="256" width="3" height="3" fill="#465626"/><rect x="246" y="256" width="3" height="3" fill="#4a5c20"/><rect x="251" y="256" width="3" height="3" fill="#4e5e22"/><rect x="256" y="256" width="3" height="3" fill="#465626"/><rect x="261" y="256" width="3" height="3" fill="#3e4e22"/><rect x="266" y="256" width="3" height="3" fill="#4e5e22"/><rect x="271" y="256" width="3" height="3" fill="#4a5c20"/><rect x="276" y="256" width="3" height="3" fill="#4a5a26"/><rect x="281" y="256" width="3" height="3" fill="#56662c"/><rect x="286" y="256" width="3" height="3" fill="#4a5a26"/><rect x="291" y="256" width="8" height="8" fill="#42590f"/><rect x="301" y="256" width="3" height="3" fill="#4a5c20"/><rect x="1" y="261" width="3" height="3" fill="#50602a"/><rect x="6" y="261" width="3" height="3" fill="#56662c"/><rect x="11" y="261" width="8" height="8" fill="#48640f"/><rect x="21" y="261" width="3" height="3" fill="#4a5a26"/><rect x="26" y="261" width="3" height="3" fill="#4e5e22"/><rect x="31" y="261" width="3" height="3" fill="#4a5a26"/><rect x="36" y="261" width="3" height="3" fill="#50602a"/><rect x="41" y="261" width="3" height="3" fill="#4e5e22"/><rect x="46" y="261" width="3" height="3" fill="#42522a"/><rect x="51" y="261" width="3" height="3" fill="#4a5a26"/><rect x="56" y="261" width="3" height="3" fill="#4a5c20"/><rect x="61" y="261" width="3" height="3" fill="#4a5c20"/><rect x="66" y="261" width="3" height="3" fill="#3e4e22"/><rect x="91" y="261" width="3" height="3" fill="#4e5e22"/><rect x="96" y="261" width="3" height="3" fill="#56662c"/><rect x="101" y="261" width="3" height="3" fill="#3e4e22"/><rect x="106" y="261" width="3" height="3" fill="#42522a"/><rect x="111" y="261" width="3" height="3" fill="#4a5a26"/><rect x="116" y="261" width="3" height="3" fill="#50602a"/><rect x="121" y="261" width="3" height="3" fill="#4a5a26"/><rect x="126" y="261" width="3" height="3" fill="#4a5c20"/><rect x="131" y="261" width="3" height="3" fill="#3e4e22"/><rect x="136" y="261" width="3" height="3" fill="#50602a"/><rect x="141" y="261" width="3" height="3" fill="#56662c"/><rect x="146" y="261" width="3" height="3" fill="#3e4e22"/><rect x="166" y="261" width="3" height="3" fill="#4a5c20"/><rect x="181" y="261" width="3" height="3" fill="#4e5e22"/><rect x="186" y="261" width="3" height="3" fill="#3e4e22"/><rect x="221" y="261" width="3" height="3" fill="#56662c"/><rect x="246" y="261" width="3" height="3" fill="#42522a"/><rect x="251" y="261" width="3" height="3" fill="#56662c"/><rect x="256" y="261" width="3" height="3" fill="#4a5c20"/><rect x="261" y="261" width="3" height="3" fill="#3e4e22"/><rect x="266" y="261" width="8" height="8" fill="#48640f"/><rect x="276" y="261" width="3" height="3" fill="#56662c"/><rect x="281" y="261" width="3" height="3" fill="#4a5c20"/><rect x="286" y="261" width="3" height="3" fill="#4e5e22"/><rect x="301" y="261" width="3" height="3" fill="#4a5c20"/><rect x="1" y="266" width="3" height="3" fill="#4e5e22"/><rect x="6" y="266" width="3" height="3" fill="#465626"/><rect x="21" y="266" width="3" height="3" fill="#4a5a26"/><rect x="26" y="266" width="8" height="8" fill="#42590f"/><rect x="36" y="266" width="3" height="3" fill="#3e4e22"/><rect x="41" y="266" width="3" height="3" fill="#3e4e22"/><rect x="46" y="266" width="3" height="3" fill="#42522a"/><rect x="51" y="266" width="3" height="3" fill="#465626"/><rect x="56" y="266" width="3" height="3" fill="#4a5c20"/><rect x="61" y="266" width="3" height="3" fill="#465626"/><rect x="66" y="266" width="3" height="3" fill="#50602a"/><rect x="91" y="266" width="3" height="3" fill="#465626"/><rect x="96" y="266" width="3" height="3" fill="#4a5c20"/><rect x="131" y="266" width="3" height="3" fill="#3e4e22"/><rect x="136" y="266" width="3" height="3" fill="#56662c"/><rect x="161" y="266" width="3" height="3" fill="#3e4e22"/><rect x="166" y="266" width="3" height="3" fill="#50602a"/><rect x="171" y="266" width="3" height="3" fill="#4a5c20"/><rect x="176" y="266" width="3" height="3" fill="#4e5e22"/><rect x="181" y="266" width="3" height="3" fill="#3e4e22"/><rect x="186" y="266" width="3" height="3" fill="#4a5c20"/><rect x="221" y="266" width="3" height="3" fill="#4a5a26"/><rect x="246" y="266" width="3" height="3" fill="#42522a"/><rect x="251" y="266" width="3" height="3" fill="#4a5c20"/><rect x="256" y="266" width="3" height="3" fill="#4e5e22"/><rect x="261" y="266" width="3" height="3" fill="#50602a"/><rect x="276" y="266" width="3" height="3" fill="#42522a"/><rect x="281" y="266" width="3" height="3" fill="#4e5e22"/><rect x="286" y="266" width="3" height="3" fill="#4a5c20"/><rect x="291" y="266" width="3" height="3" fill="#50602a"/><rect x="296" y="266" width="3" height="3" fill="#4a5c20"/><rect x="301" y="266" width="3" height="3" fill="#4e5e22"/><rect x="306" y="266" width="3" height="3" fill="#4e5e22"/><rect x="311" y="266" width="3" height="3" fill="#42522a"/><rect x="316" y="266" width="3" height="3" fill="#3e4e22"/><rect x="321" y="266" width="3" height="3" fill="#465626"/><rect x="326" y="266" width="3" height="3" fill="#465626"/><rect x="331" y="266" width="3" height="3" fill="#3e4e22"/><rect x="1" y="271" width="3" height="3" fill="#56662c"/><rect x="6" y="271" width="3" height="3" fill="#50602a"/><rect x="11" y="271" width="3" height="3" fill="#4a5a26"/><rect x="16" y="271" width="3" height="3" fill="#4a5a26"/><rect x="21" y="271" width="3" height="3" fill="#56662c"/><rect x="36" y="271" width="3" height="3" fill="#42522a"/><rect x="41" y="271" width="3" height="3" fill="#3e4e22"/><rect x="46" y="271" width="3" height="3" fill="#42522a"/><rect x="51" y="271" width="3" height="3" fill="#42522a"/><rect x="56" y="271" width="3" height="3" fill="#4a5a26"/><rect x="61" y="271" width="3" height="3" fill="#50602a"/><rect x="66" y="271" width="3" height="3" fill="#4e5e22"/><rect x="91" y="271" width="3" height="3" fill="#465626"/><rect x="96" y="271" width="3" height="3" fill="#4e5e22"/><rect x="131" y="271" width="3" height="3" fill="#465626"/><rect x="136" y="271" width="3" height="3" fill="#4a5c20"/><rect x="161" y="271" width="3" height="3" fill="#4a5a26"/><rect x="166" y="271" width="3" height="3" fill="#3e4e22"/><rect x="171" y="271" width="3" height="3" fill="#4e5e22"/><rect x="176" y="271" width="3" height="3" fill="#56662c"/><rect x="181" y="271" width="3" height="3" fill="#4a5c20"/><rect x="186" y="271" width="3" height="3" fill="#56662c"/><rect x="191" y="271" width="3" height="3" fill="#42522a"/><rect x="196" y="271" width="3" height="3" fill="#50602a"/><rect x="201" y="271" width="3" height="3" fill="#42522a"/><rect x="206" y="271" width="3" height="3" fill="#4a5a26"/><rect x="211" y="271" width="3" height="3" fill="#42522a"/><rect x="216" y="271" width="3" height="3" fill="#42522a"/><rect x="221" y="271" width="3" height="3" fill="#42522a"/><rect x="226" y="271" width="3" height="3" fill="#4e5e22"/><rect x="231" y="271" width="3" height="3" fill="#4a5a26"/><rect x="236" y="271" width="3" height="3" fill="#4a5a26"/><rect x="241" y="271" width="3" height="3" fill="#42522a"/><rect x="246" y="271" width="3" height="3" fill="#4e5e22"/><rect x="251" y="271" width="3" height="3" fill="#50602a"/><rect x="256" y="271" width="3" height="3" fill="#3e4e22"/><rect x="261" y="271" width="3" height="3" fill="#4e5e22"/><rect x="266" y="271" width="3" height="3" fill="#50602a"/><rect x="271" y="271" width="3" height="3" fill="#4a5c20"/><rect x="276" y="271" width="3" height="3" fill="#56662c"/><rect x="281" y="271" width="3" height="3" fill="#3e4e22"/><rect x="286" y="271" width="3" height="3" fill="#50602a"/><rect x="291" y="271" width="3" height="3" fill="#56662c"/><rect x="296" y="271" width="3" height="3" fill="#465626"/><rect x="301" y="271" width="3" height="3" fill="#3e4e22"/><rect x="306" y="271" width="3" height="3" fill="#50602a"/><rect x="311" y="271" width="3" height="3" fill="#4e5e22"/><rect x="316" y="271" width="3" height="3" fill="#42522a"/><rect x="321" y="271" width="3" height="3" fill="#4a5a26"/><rect x="326" y="271" width="3" height="3" fill="#42522a"/><rect x="331" y="271" width="3" height="3" fill="#4a5c20"/><rect x="1" y="276" width="3" height="3" fill="#4a5c20"/><rect x="6" y="276" width="3" height="3" fill="#4a5c20"/><rect x="11" y="276" width="3" height="3" fill="#4a5a26"/><rect x="16" y="276" width="3" height="3" fill="#4a5c20"/><rect x="21" y="276" width="8" height="8" fill="#3f580e"/><rect x="31" y="276" width="3" height="3" fill="#4a5a26"/><rect x="36" y="276" width="3" height="3" fill="#465626"/><rect x="41" y="276" width="3" height="3" fill="#3e4e22"/><rect x="46" y="276" width="3" height="3" fill="#56662c"/><rect x="51" y="276" width="3" height="3" fill="#42522a"/><rect x="56" y="276" width="3" height="3" fill="#42522a"/><rect x="61" y="276" width="3" height="3" fill="#4a5c20"/><rect x="66" y="276" width="3" height="3" fill="#465626"/><rect x="91" y="276" width="3" height="3" fill="#50602a"/><rect x="96" y="276" width="3" height="3" fill="#56662c"/><rect x="131" y="276" width="3" height="3" fill="#56662c"/><rect x="136" y="276" width="3" height="3" fill="#4a5a26"/><rect x="161" y="276" width="3" height="3" fill="#50602a"/><rect x="166" y="276" width="3" height="3" fill="#42522a"/><rect x="171" y="276" width="3" height="3" fill="#56662c"/><rect x="176" y="276" width="3" height="3" fill="#56662c"/><rect x="181" y="276" width="3" height="3" fill="#465626"/><rect x="186" y="276" width="3" height="3" fill="#4a5c20"/><rect x="191" y="276" width="3" height="3" fill="#42522a"/><rect x="196" y="276" width="3" height="3" fill="#42522a"/><rect x="201" y="276" width="8" height="8" fill="#4a6610"/><rect x="211" y="276" width="3" height="3" fill="#42522a"/><rect x="216" y="276" width="3" height="3" fill="#4a5a26"/><rect x="221" y="276" width="3" height="3" fill="#42522a"/><rect x="226" y="276" width="3" height="3" fill="#4a5a26"/><rect x="231" y="276" width="3" height="3" fill="#4a5c20"/><rect x="236" y="276" width="3" height="3" fill="#42522a"/><rect x="241" y="276" width="3" height="3" fill="#4a5a26"/><rect x="246" y="276" width="3" height="3" fill="#4a5c20"/><rect x="251" y="276" width="3" height="3" fill="#50602a"/><rect x="256" y="276" width="3" height="3" fill="#56662c"/><rect x="261" y="276" width="3" height="3" fill="#465626"/><rect x="266" y="276" width="3" height="3" fill="#465626"/><rect x="271" y="276" width="3" height="3" fill="#50602a"/><rect x="276" y="276" width="3" height="3" fill="#3e4e22"/><rect x="281" y="276" width="3" height="3" fill="#4a5c20"/><rect x="286" y="276" width="3" height="3" fill="#4a5a26"/><rect x="291" y="276" width="3" height="3" fill="#4a5a26"/><rect x="296" y="276" width="3" height="3" fill="#465626"/><rect x="301" y="276" width="3" height="3" fill="#465626"/><rect x="306" y="276" width="3" height="3" fill="#4e5e22"/><rect x="311" y="276" width="3" height="3" fill="#4a5a26"/><rect x="316" y="276" width="3" height="3" fill="#42522a"/><rect x="1" y="281" width="8" height="8" fill="#4a6610"/><rect x="11" y="281" width="3" height="3" fill="#56662c"/><rect x="16" y="281" width="3" height="3" fill="#42522a"/><rect x="31" y="281" width="3" height="3" fill="#465626"/><rect x="36" y="281" width="3" height="3" fill="#465626"/><rect x="41" y="281" width="3" height="3" fill="#3e4e22"/><rect x="76" y="281" width="3" height="3" fill="#465626"/><rect x="81" y="281" width="3" height="3" fill="#465626"/><rect x="86" y="281" width="3" height="3" fill="#4e5e22"/><rect x="91" y="281" width="3" height="3" fill="#4e5e22"/><rect x="96" y="281" width="3" height="3" fill="#3e4e22"/><rect x="131" y="281" width="3" height="3" fill="#4a5a26"/><rect x="136" y="281" width="3" height="3" fill="#4a5a26"/><rect x="161" y="281" width="3" height="3" fill="#42522a"/><rect x="166" y="281" width="3" height="3" fill="#56662c"/><rect x="171" y="281" width="3" height="3" fill="#42522a"/><rect x="176" y="281" width="3" height="3" fill="#465626"/><rect x="181" y="281" width="3" height="3" fill="#4a5a26"/><rect x="186" y="281" width="3" height="3" fill="#4a5a26"/><rect x="191" y="281" width="3" height="3" fill="#50602a"/><rect x="196" y="281" width="3" height="3" fill="#4a5c20"/><rect x="211" y="281" width="3" height="3" fill="#4a5a26"/><rect x="216" y="281" width="3" height="3" fill="#4e5e22"/><rect x="221" y="281" width="3" height="3" fill="#50602a"/><rect x="226" y="281" width="3" height="3" fill="#4e5e22"/><rect x="231" y="281" width="3" height="3" fill="#4a5a26"/><rect x="236" y="281" width="3" height="3" fill="#465626"/><rect x="241" y="281" width="3" height="3" fill="#50602a"/><rect x="246" y="281" width="3" height="3" fill="#56662c"/><rect x="251" y="281" width="3" height="3" fill="#3e4e22"/><rect x="256" y="281" width="3" height="3" fill="#42522a"/><rect x="261" y="281" width="3" height="3" fill="#4a5a26"/><rect x="281" y="281" width="3" height="3" fill="#3e4e22"/><rect x="286" y="281" width="3" height="3" fill="#3e4e22"/><rect x="291" y="281" width="8" height="8" fill="#44600f"/><rect x="301" y="281" width="3" height="3" fill="#465626"/><rect x="306" y="281" width="3" height="3" fill="#465626"/><rect x="311" y="281" width="8" height="8" fill="#48640f"/><rect x="11" y="286" width="3" height="3" fill="#3e4e22"/><rect x="16" y="286" width="3" height="3" fill="#465626"/><rect x="21" y="286" width="3" height="3" fill="#50602a"/><rect x="26" y="286" width="3" height="3" fill="#4a5a26"/><rect x="31" y="286" width="3" height="3" fill="#42522a"/><rect x="36" y="286" width="3" height="3" fill="#4a5c20"/><rect x="41" y="286" width="3" height="3" fill="#465626"/><rect x="76" y="286" width="3" height="3" fill="#42522a"/><rect x="81" y="286" width="3" height="3" fill="#4a5a26"/><rect x="86" y="286" width="3" height="3" fill="#4a5c20"/><rect x="91" y="286" width="3" height="3" fill="#50602a"/><rect x="96" y="286" width="3" height="3" fill="#50602a"/><rect x="131" y="286" width="3" height="3" fill="#4e5e22"/><rect x="136" y="286" width="3" height="3" fill="#42522a"/><rect x="141" y="286" width="3" height="3" fill="#4a5a26"/><rect x="146" y="286" width="3" height="3" fill="#42522a"/><rect x="151" y="286" width="3" height="3" fill="#50602a"/><rect x="156" y="286" width="3" height="3" fill="#465626"/><rect x="161" y="286" width="3" height="3" fill="#4e5e22"/><rect x="166" y="286" width="3" height="3" fill="#465626"/><rect x="171" y="286" width="3" height="3" fill="#465626"/><rect x="176" y="286" width="3" height="3" fill="#50602a"/><rect x="181" y="286" width="3" height="3" fill="#56662c"/><rect x="186" y="286" width="3" height="3" fill="#4e5e22"/><rect x="191" y="286" width="3" height="3" fill="#56662c"/><rect x="196" y="286" width="3" height="3" fill="#465626"/><rect x="201" y="286" width="3" height="3" fill="#4a5c20"/><rect x="206" y="286" width="3" height="3" fill="#50602a"/><rect x="211" y="286" width="3" height="3" fill="#465626"/><rect x="216" y="286" width="3" height="3" fill="#56662c"/><rect x="221" y="286" width="3" height="3" fill="#42522a"/><rect x="226" y="286" width="8" height="8" fill="#44600f"/><rect x="236" y="286" width="3" height="3" fill="#42522a"/><rect x="241" y="286" width="3" height="3" fill="#3e4e22"/><rect x="246" y="286" width="3" height="3" fill="#4a5a26"/><rect x="251" y="286" width="3" height="3" fill="#465626"/><rect x="256" y="286" width="3" height="3" fill="#50602a"/><rect x="261" y="286" width="3" height="3" fill="#4e5e22"/><rect x="281" y="286" width="3" height="3" fill="#50602a"/><rect x="286" y="286" width="3" height="3" fill="#56662c"/><rect x="301" y="286" width="3" height="3" fill="#4a5a26"/><rect x="306" y="286" width="3" height="3" fill="#465626"/><rect x="1" y="291" width="3" height="3" fill="#42522a"/><rect x="6" y="291" width="3" height="3" fill="#4e5e22"/><rect x="11" y="291" width="8" height="8" fill="#44600f"/><rect x="21" y="291" width="3" height="3" fill="#3e4e22"/><rect x="26" y="291" width="3" height="3" fill="#50602a"/><rect x="31" y="291" width="3" height="3" fill="#4e5e22"/><rect x="36" y="291" width="3" height="3" fill="#50602a"/><rect x="41" y="291" width="3" height="3" fill="#465626"/><rect x="76" y="291" width="3" height="3" fill="#50602a"/><rect x="81" y="291" width="3" height="3" fill="#4a5c20"/><rect x="86" y="291" width="3" height="3" fill="#4a5a26"/><rect x="91" y="291" width="3" height="3" fill="#42522a"/><rect x="96" y="291" width="3" height="3" fill="#4a5c20"/><rect x="131" y="291" width="3" height="3" fill="#42522a"/><rect x="136" y="291" width="3" height="3" fill="#56662c"/><rect x="141" y="291" width="3" height="3" fill="#4a5a26"/><rect x="146" y="291" width="8" height="8" fill="#42590f"/><rect x="156" y="291" width="3" height="3" fill="#3e4e22"/><rect x="161" y="291" width="3" height="3" fill="#4a5a26"/><rect x="166" y="291" width="3" height="3" fill="#56662c"/><rect x="171" y="291" width="3" height="3" fill="#56662c"/><rect x="176" y="291" width="3" height="3" fill="#56662c"/><rect x="181" y="291" width="3" height="3" fill="#465626"/><rect x="186" y="291" width="3" height="3" fill="#50602a"/><rect x="191" y="291" width="3" height="3" fill="#4a5c20"/><rect x="196" y="291" width="3" height="3" fill="#465626"/><rect x="201" y="291" width="3" height="3" fill="#4e5e22"/><rect x="206" y="291" width="3" height="3" fill="#56662c"/><rect x="211" y="291" width="3" height="3" fill="#3e4e22"/><rect x="216" y="291" width="3" height="3" fill="#465626"/><rect x="221" y="291" width="3" height="3" fill="#56662c"/><rect x="236" y="291" width="3" height="3" fill="#4a5c20"/><rect x="241" y="291" width="3" height="3" fill="#4a5c20"/><rect x="246" y="291" width="3" height="3" fill="#42522a"/><rect x="251" y="291" width="3" height="3" fill="#3e4e22"/><rect x="256" y="291" width="3" height="3" fill="#465626"/><rect x="261" y="291" width="3" height="3" fill="#56662c"/><rect x="281" y="291" width="3" height="3" fill="#56662c"/><rect x="286" y="291" width="3" height="3" fill="#50602a"/><rect x="291" y="291" width="3" height="3" fill="#56662c"/><rect x="296" y="291" width="3" height="3" fill="#465626"/><rect x="301" y="291" width="3" height="3" fill="#3e4e22"/><rect x="306" y="291" width="3" height="3" fill="#56662c"/><rect x="311" y="291" width="3" height="3" fill="#50602a"/><rect x="316" y="291" width="3" height="3" fill="#4a5a26"/><rect x="321" y="291" width="3" height="3" fill="#4a5a26"/><rect x="326" y="291" width="3" height="3" fill="#42522a"/><rect x="331" y="291" width="3" height="3" fill="#50602a"/><rect x="1" y="296" width="3" height="3" fill="#50602a"/><rect x="6" y="296" width="3" height="3" fill="#3e4e22"/><rect x="21" y="296" width="3" height="3" fill="#3e4e22"/><rect x="26" y="296" width="3" height="3" fill="#50602a"/><rect x="31" y="296" width="3" height="3" fill="#4a5a26"/><rect x="36" y="296" width="3" height="3" fill="#465626"/><rect x="41" y="296" width="3" height="3" fill="#4a5a26"/><rect x="91" y="296" width="3" height="3" fill="#50602a"/><rect x="96" y="296" width="3" height="3" fill="#4e5e22"/><rect x="101" y="296" width="3" height="3" fill="#42522a"/><rect x="106" y="296" width="3" height="3" fill="#4a5c20"/><rect x="111" y="296" width="3" height="3" fill="#50602a"/><rect x="116" y="296" width="3" height="3" fill="#56662c"/><rect x="121" y="296" width="3" height="3" fill="#56662c"/><rect x="126" y="296" width="3" height="3" fill="#56662c"/><rect x="131" y="296" width="3" height="3" fill="#42522a"/><rect x="136" y="296" width="3" height="3" fill="#42522a"/><rect x="141" y="296" width="3" height="3" fill="#56662c"/><rect x="156" y="296" width="3" height="3" fill="#56662c"/><rect x="161" y="296" width="3" height="3" fill="#3e4e22"/><rect x="166" y="296" width="8" height="8" fill="#44600f"/><rect x="176" y="296" width="3" height="3" fill="#4a5a26"/><rect x="181" y="296" width="3" height="3" fill="#50602a"/><rect x="186" y="296" width="3" height="3" fill="#4a5a26"/><rect x="191" y="296" width="3" height="3" fill="#4e5e22"/><rect x="196" y="296" width="3" height="3" fill="#56662c"/><rect x="201" y="296" width="3" height="3" fill="#4a5c20"/><rect x="206" y="296" width="3" height="3" fill="#42522a"/><rect x="246" y="296" width="3" height="3" fill="#4e5e22"/><rect x="251" y="296" width="3" height="3" fill="#50602a"/><rect x="256" y="296" width="3" height="3" fill="#50602a"/><rect x="261" y="296" width="3" height="3" fill="#4a5a26"/><rect x="266" y="296" width="3" height="3" fill="#4a5c20"/><rect x="271" y="296" width="3" height="3" fill="#56662c"/><rect x="276" y="296" width="3" height="3" fill="#4e5e22"/><rect x="281" y="296" width="3" height="3" fill="#42522a"/><rect x="286" y="296" width="3" height="3" fill="#4e5e22"/><rect x="291" y="296" width="3" height="3" fill="#4a5c20"/><rect x="296" y="296" width="3" height="3" fill="#4a5c20"/><rect x="301" y="296" width="3" height="3" fill="#465626"/><rect x="306" y="296" width="3" height="3" fill="#4e5e22"/><rect x="311" y="296" width="3" height="3" fill="#50602a"/><rect x="316" y="296" width="3" height="3" fill="#4a5c20"/><rect x="321" y="296" width="3" height="3" fill="#4a5c20"/><rect x="326" y="296" width="3" height="3" fill="#465626"/><rect x="331" y="296" width="3" height="3" fill="#56662c"/><rect x="1" y="301" width="3" height="3" fill="#3e4e22"/><rect x="6" y="301" width="3" height="3" fill="#42522a"/><rect x="11" y="301" width="3" height="3" fill="#4e5e22"/><rect x="16" y="301" width="3" height="3" fill="#50602a"/><rect x="21" y="301" width="3" height="3" fill="#4e5e22"/><rect x="26" y="301" width="3" height="3" fill="#4a5c20"/><rect x="31" y="301" width="3" height="3" fill="#4e5e22"/><rect x="36" y="301" width="3" height="3" fill="#465626"/><rect x="41" y="301" width="3" height="3" fill="#4a5a26"/><rect x="91" y="301" width="3" height="3" fill="#56662c"/><rect x="121" y="301" width="3" height="3" fill="#3e4e22"/><rect x="126" y="301" width="3" height="3" fill="#4a5a26"/><rect x="131" y="301" width="3" height="3" fill="#3e4e22"/><rect x="136" y="301" width="3" height="3" fill="#50602a"/><rect x="141" y="301" width="3" height="3" fill="#3e4e22"/><rect x="146" y="301" width="3" height="3" fill="#42522a"/><rect x="151" y="301" width="3" height="3" fill="#465626"/><rect x="156" y="301" width="3" height="3" fill="#42522a"/><rect x="161" y="301" width="3" height="3" fill="#4a5c20"/><rect x="176" y="301" width="3" height="3" fill="#42522a"/><rect x="181" y="301" width="3" height="3" fill="#3e4e22"/><rect x="186" y="301" width="3" height="3" fill="#56662c"/><rect x="191" y="301" width="3" height="3" fill="#50602a"/><rect x="196" y="301" width="3" height="3" fill="#42522a"/><rect x="201" y="301" width="3" height="3" fill="#465626"/><rect x="206" y="301" width="3" height="3" fill="#50602a"/><rect x="246" y="301" width="3" height="3" fill="#4a5c20"/><rect x="251" y="301" width="3" height="3" fill="#56662c"/><rect x="256" y="301" width="3" height="3" fill="#3e4e22"/><rect x="261" y="301" width="3" height="3" fill="#3e4e22"/><rect x="266" y="301" width="3" height="3" fill="#4a5c20"/><rect x="271" y="301" width="3" height="3" fill="#56662c"/><rect x="276" y="301" width="3" height="3" fill="#50602a"/><rect x="281" y="301" width="3" height="3" fill="#465626"/><rect x="286" y="301" width="3" height="3" fill="#4e5e22"/><rect x="291" y="301" width="3" height="3" fill="#42522a"/><rect x="296" y="301" width="3" height="3" fill="#42522a"/><rect x="301" y="301" width="3" height="3" fill="#4e5e22"/><rect x="306" y="301" width="3" height="3" fill="#50602a"/><rect x="311" y="301" width="3" height="3" fill="#56662c"/><rect x="316" y="301" width="3" height="3" fill="#4a5a26"/><rect x="321" y="301" width="3" height="3" fill="#4a5a26"/><rect x="326" y="301" width="3" height="3" fill="#4a5c20"/><rect x="331" y="301" width="3" height="3" fill="#4e5e22"/><rect x="1" y="306" width="8" height="8" fill="#3f580e"/><rect x="11" y="306" width="3" height="3" fill="#465626"/><rect x="16" y="306" width="3" height="3" fill="#4a5a26"/><rect x="21" y="306" width="3" height="3" fill="#50602a"/><rect x="26" y="306" width="3" height="3" fill="#42522a"/><rect x="31" y="306" width="8" height="8" fill="#3f580e"/><rect x="41" y="306" width="3" height="3" fill="#465626"/><rect x="91" y="306" width="3" height="3" fill="#50602a"/><rect x="121" y="306" width="3" height="3" fill="#465626"/><rect x="126" y="306" width="3" height="3" fill="#3e4e22"/><rect x="131" y="306" width="3" height="3" fill="#56662c"/><rect x="136" y="306" width="3" height="3" fill="#3e4e22"/><rect x="141" y="306" width="8" height="8" fill="#3f580e"/><rect x="151" y="306" width="3" height="3" fill="#4e5e22"/><rect x="156" y="306" width="3" height="3" fill="#4a5a26"/><rect x="161" y="306" width="3" height="3" fill="#4e5e22"/><rect x="166" y="306" width="3" height="3" fill="#3e4e22"/><rect x="171" y="306" width="3" height="3" fill="#56662c"/><rect x="176" y="306" width="3" height="3" fill="#4a5a26"/><rect x="181" y="306" width="3" height="3" fill="#4a5c20"/><rect x="186" y="306" width="3" height="3" fill="#4a5a26"/><rect x="191" y="306" width="3" height="3" fill="#465626"/><rect x="196" y="306" width="3" height="3" fill="#465626"/><rect x="201" y="306" width="3" height="3" fill="#50602a"/><rect x="206" y="306" width="3" height="3" fill="#56662c"/><rect x="246" y="306" width="3" height="3" fill="#42522a"/><rect x="251" y="306" width="3" height="3" fill="#56662c"/><rect x="256" y="306" width="3" height="3" fill="#50602a"/><rect x="261" y="306" width="8" height="8" fill="#4a6610"/><rect x="271" y="306" width="3" height="3" fill="#56662c"/><rect x="276" y="306" width="3" height="3" fill="#4e5e22"/><rect x="281" y="306" width="3" height="3" fill="#3e4e22"/><rect x="286" y="306" width="3" height="3" fill="#4a5a26"/><rect x="291" y="306" width="3" height="3" fill="#4a5a26"/><rect x="296" y="306" width="3" height="3" fill="#4e5e22"/><rect x="301" y="306" width="3" height="3" fill="#56662c"/><rect x="306" y="306" width="3" height="3" fill="#50602a"/><rect x="311" y="306" width="3" height="3" fill="#4e5e22"/><rect x="316" y="306" width="3" height="3" fill="#4e5e22"/><rect x="321" y="306" width="3" height="3" fill="#4a5a26"/><rect x="326" y="306" width="3" height="3" fill="#3e4e22"/><rect x="331" y="306" width="3" height="3" fill="#4e5e22"/><rect x="336" y="306" width="3" height="3" fill="#4e5e22"/><rect x="341" y="306" width="8" height="8" fill="#4a6610"/><rect x="351" y="306" width="3" height="3" fill="#4e5e22"/><rect x="356" y="306" width="8" height="8" fill="#4a6610"/><rect x="366" y="306" width="3" height="3" fill="#50602a"/><rect x="371" y="306" width="3" height="3" fill="#42522a"/><rect x="376" y="306" width="3" height="3" fill="#42522a"/><rect x="381" y="306" width="3" height="3" fill="#565418"/><rect x="386" y="306" width="3" height="3" fill="#3e4e22"/><rect x="391" y="306" width="3" height="3" fill="#6e4e22"/><rect x="396" y="306" width="3" height="3" fill="#5e5418"/><rect x="401" y="306" width="3" height="3" fill="#5e5418"/><rect x="406" y="306" width="3" height="3" fill="#6e4e22"/><rect x="11" y="311" width="3" height="3" fill="#4e5e22"/><rect x="16" y="311" width="3" height="3" fill="#42522a"/><rect x="21" y="311" width="3" height="3" fill="#56662c"/><rect x="26" y="311" width="3" height="3" fill="#4a5c20"/><rect x="41" y="311" width="3" height="3" fill="#3e4e22"/><rect x="46" y="311" width="3" height="3" fill="#3e4e22"/><rect x="51" y="311" width="3" height="3" fill="#465626"/><rect x="56" y="311" width="3" height="3" fill="#465626"/><rect x="61" y="311" width="3" height="3" fill="#4e5e22"/><rect x="66" y="311" width="3" height="3" fill="#50602a"/><rect x="71" y="311" width="3" height="3" fill="#4a5a26"/><rect x="76" y="311" width="3" height="3" fill="#465626"/><rect x="81" y="311" width="3" height="3" fill="#3e4e22"/><rect x="86" y="311" width="3" height="3" fill="#465626"/><rect x="91" y="311" width="3" height="3" fill="#465626"/><rect x="121" y="311" width="3" height="3" fill="#4a5a26"/><rect x="126" y="311" width="3" height="3" fill="#50602a"/><rect x="131" y="311" width="3" height="3" fill="#465626"/><rect x="136" y="311" width="3" height="3" fill="#4a5c20"/><rect x="151" y="311" width="3" height="3" fill="#50602a"/><rect x="156" y="311" width="3" height="3" fill="#4a5c20"/><rect x="161" y="311" width="3" height="3" fill="#3e4e22"/><rect x="166" y="311" width="3" height="3" fill="#42522a"/><rect x="171" y="311" width="3" height="3" fill="#465626"/><rect x="176" y="311" width="3" height="3" fill="#4a5c20"/><rect x="181" y="311" width="3" height="3" fill="#50602a"/><rect x="186" y="311" width="3" height="3" fill="#4e5e22"/><rect x="191" y="311" width="3" height="3" fill="#4a5c20"/><rect x="196" y="311" width="3" height="3" fill="#50602a"/><rect x="201" y="311" width="3" height="3" fill="#56662c"/><rect x="206" y="311" width="3" height="3" fill="#3e4e22"/><rect x="246" y="311" width="3" height="3" fill="#4a5a26"/><rect x="251" y="311" width="3" height="3" fill="#56662c"/><rect x="256" y="311" width="3" height="3" fill="#50602a"/><rect x="271" y="311" width="3" height="3" fill="#3e4e22"/><rect x="276" y="311" width="3" height="3" fill="#3e4e22"/><rect x="281" y="311" width="3" height="3" fill="#4a5c20"/><rect x="286" y="311" width="3" height="3" fill="#4a5a26"/><rect x="291" y="311" width="3" height="3" fill="#3e4e22"/><rect x="296" y="311" width="3" height="3" fill="#4e5e22"/><rect x="301" y="311" width="3" height="3" fill="#4a5a26"/><rect x="306" y="311" width="3" height="3" fill="#3e4e22"/><rect x="311" y="311" width="3" height="3" fill="#3e4e22"/><rect x="316" y="311" width="3" height="3" fill="#4e5e22"/><rect x="321" y="311" width="3" height="3" fill="#4e5e22"/><rect x="326" y="311" width="3" height="3" fill="#3e4e22"/><rect x="331" y="311" width="3" height="3" fill="#4e5e22"/><rect x="336" y="311" width="3" height="3" fill="#42522a"/><rect x="351" y="311" width="3" height="3" fill="#4a5c20"/><rect x="366" y="311" width="3" height="3" fill="#5e5a18"/><rect x="371" y="311" width="3" height="3" fill="#42522a"/><rect x="376" y="311" width="3" height="3" fill="#4a5a26"/><rect x="381" y="311" width="3" height="3" fill="#50602a"/><rect x="386" y="311" width="3" height="3" fill="#4e5e22"/><rect x="391" y="311" width="3" height="3" fill="#5a5a18"/><rect x="396" y="311" width="3" height="3" fill="#5a5a18"/><rect x="401" y="311" width="3" height="3" fill="#4e5a14"/><rect x="406" y="311" width="3" height="3" fill="#5e5418"/></svg>
<div class="a" style="left:655px;top:512px;width:540px;height:400px;background:#11131f;border-radius:4px"></div>
<div class="t" style="left:699.10px;top:543.47px;font-size:16.55px;letter-spacing:0.828px;color:#4a67d6;">Minimum fee</div>
<div class="t" style="left:865.40px;top:543.44px;font-size:16.62px;letter-spacing:0.543px;color:#4a67d6;">Memory Usage</div>
<div class="t" style="left:1049.00px;top:543.18px;font-size:16.52px;letter-spacing:0.713px;color:#4a67d6;">Unconfirmed</div>
<div class="t" style="left:709.70px;top:576.19px;font-size:17.92px;letter-spacing:1.033px;color:#ffffff;">0.10</div>
<div class="t" style="left:754.90px;top:578.15px;font-size:12.27px;letter-spacing:0.520px;color:#b4b5bb;">sat/vB</div>
<div class="a" style="left:835.4px;top:569px;width:179.3px;height:17px;background:#2a3150;border-radius:4px;overflow:hidden"><div style="width:104.4px;height:17px;background:#c08f0c"></div></div>
<div class="t" style="left:874.40px;top:576.89px;font-size:12.44px;letter-spacing:0.343px;color:#ffffff;">175 MB / 300 MB</div>
<div class="t" style="left:1055.00px;top:575.66px;font-size:18.30px;letter-spacing:1.005px;color:#ffffff;">55,133</div>
<div class="t" style="left:1123.10px;top:577.79px;font-size:12.14px;letter-spacing:-0.300px;color:#b4b5bb;">TXs</div>
<div class="t" style="left:836.20px;top:614.73px;font-size:16.64px;letter-spacing:0.521px;color:#4a67d6;">Incoming Transactions</div>
<div class="t" style="left:690.50px;top:656.34px;font-size:11.13px;letter-spacing:0.750px;color:#8a8c96;">6665</div>
<div class="t" style="left:690.50px;top:686.34px;font-size:11.13px;letter-spacing:0.750px;color:#8a8c96;">6000</div>
<div class="t" style="left:690.50px;top:731.34px;font-size:11.13px;letter-spacing:0.750px;color:#8a8c96;">5000</div>
<div class="t" style="left:690.50px;top:776.24px;font-size:11.13px;letter-spacing:0.750px;color:#8a8c96;">4000</div>
<div class="t" style="left:690.50px;top:821.34px;font-size:11.13px;letter-spacing:0.750px;color:#8a8c96;">3000</div>
<div class="t" style="left:690.50px;top:866.44px;font-size:11.13px;letter-spacing:0.750px;color:#8a8c96;">2000</div>
<svg style="left:655px;top:512px" width="540" height="400" viewBox="0 0 540 400">
<defs><linearGradient id="cg" gradientUnits="userSpaceOnUse" x1="0" y1="444.4" x2="0" y2="144.5">
<stop offset="0" stop-color="#7CB342"/><stop offset="0.2501" stop-color="#7CB342"/><stop offset="0.2501" stop-color="#FDD835"/>
<stop offset="0.3001" stop-color="#FDD835"/><stop offset="0.3001" stop-color="#FFB300"/>
<stop offset="0.3751" stop-color="#FFB300"/><stop offset="0.3751" stop-color="#FB8C00"/>
<stop offset="0.4501" stop-color="#FB8C00"/><stop offset="0.4501" stop-color="#F4511E"/>
<stop offset="0.5251" stop-color="#F4511E"/><stop offset="0.5251" stop-color="#D81B60"/><stop offset="1" stop-color="#D81B60"/>
</linearGradient><clipPath id="cc"><rect x="0" y="0" width="540" height="388"/></clipPath></defs>
<g stroke="#565a68" stroke-width="1" stroke-dasharray="1 1"><path d="M71 144.5H498"/><path d="M71 174.5H498"/><path d="M71 219.5H498"/><path d="M71 264.5H498"/><path d="M71 309.5H498"/><path d="M71 354.5H498"/></g>
<path d="M71 369H499" stroke="#fff" stroke-width="2" stroke-dasharray="8 4"/>
<g clip-path="url(#cc)"><path d="M88.7 388.0 L95.7 264.2 L99.5 320.5 L101.0 334.0 L104.0 349.0 L106.7 385.0 L107.7 391.0 L109.2 385.0 L113.7 287.5 L117.5 271.0 L121.2 292.0 L124.2 304.7 L127.2 307.0 L128.7 308.5 L131.7 388.0 L133.0 398.0 L159.0 398.0 L161.5 388.0 L167.5 302.9 L171.0 304.9 L173.9 334.6 L179.1 310.0 L185.5 144.6 L192.7 220.5 L197.0 285.5 L201.4 313.0 L204.2 368.0 L207.1 391.0 L210.0 368.0 L214.9 266.2 L217.8 285.5 L221.6 370.8 L223.0 388.0 L224.0 398.0 L251.0 398.0 L253.0 386.0 L255.3 373.0 L257.0 369.5 L258.8 373.0 L261.0 388.0 L262.0 398.0 L269.0 398.0 L271.0 386.0 L275.5 374.0 L277.5 370.5 L279.5 374.0 L282.0 388.0 L283.0 398.0 L297.0 398.0 L299.0 386.0 L301.2 371.0 L303.0 367.5 L305.0 371.0 L307.5 386.0 L309.0 398.0 L325.0 398.0 L328.0 387.0 L331.0 384.5 L334.0 387.0 L337.0 398.0" fill="none" stroke="url(#cg)" stroke-width="3" stroke-linejoin="round"/></g>
</svg>
</body></html>
